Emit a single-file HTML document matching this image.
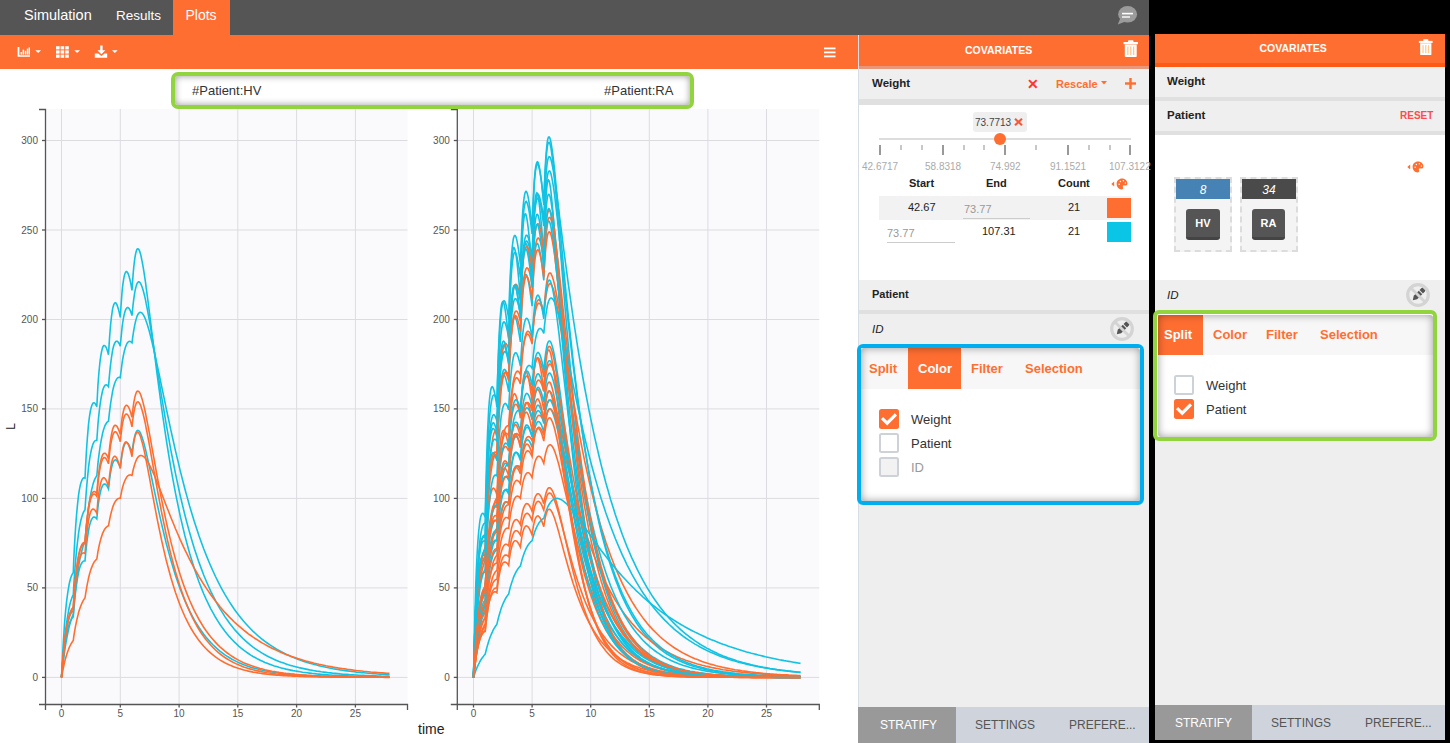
<!DOCTYPE html>
<html><head><meta charset="utf-8">
<style>
*{box-sizing:border-box;margin:0;padding:0}
html,body{width:1450px;height:743px;overflow:hidden;background:#fff;font-family:"Liberation Sans",sans-serif;color:#333}
.abs{position:absolute}
.t{position:absolute;white-space:nowrap;line-height:1}
#topbar{left:0;top:0;width:1149px;height:35px;background:#555}
#frame{left:1149px;top:0;width:301px;height:743px;background:#000}
#toolbar{left:0;top:35px;width:858px;height:34px;background:#ff6e31}
.tab{color:#fff;font-size:14.5px}
</style></head><body>
<svg class="abs" style="left:0;top:0;font-family:&quot;Liberation Sans&quot;,sans-serif" width="858" height="743">
<rect x="46.0" y="109" width="361.5" height="595.5" fill="#fafafd"/>
<line x1="61.5" y1="109" x2="61.5" y2="704" stroke="#dcdce0" stroke-width="1"/>
<line x1="120.3" y1="109" x2="120.3" y2="704" stroke="#dcdce0" stroke-width="1"/>
<line x1="179.1" y1="109" x2="179.1" y2="704" stroke="#dcdce0" stroke-width="1"/>
<line x1="237.8" y1="109" x2="237.8" y2="704" stroke="#dcdce0" stroke-width="1"/>
<line x1="296.6" y1="109" x2="296.6" y2="704" stroke="#dcdce0" stroke-width="1"/>
<line x1="355.4" y1="109" x2="355.4" y2="704" stroke="#dcdce0" stroke-width="1"/>
<line x1="46.0" y1="677.4" x2="407.5" y2="677.4" stroke="#dcdce0" stroke-width="1"/>
<line x1="46.0" y1="587.9" x2="407.5" y2="587.9" stroke="#dcdce0" stroke-width="1"/>
<line x1="46.0" y1="498.4" x2="407.5" y2="498.4" stroke="#dcdce0" stroke-width="1"/>
<line x1="46.0" y1="408.9" x2="407.5" y2="408.9" stroke="#dcdce0" stroke-width="1"/>
<line x1="46.0" y1="319.5" x2="407.5" y2="319.5" stroke="#dcdce0" stroke-width="1"/>
<line x1="46.0" y1="230.0" x2="407.5" y2="230.0" stroke="#dcdce0" stroke-width="1"/>
<line x1="46.0" y1="140.5" x2="407.5" y2="140.5" stroke="#dcdce0" stroke-width="1"/>
<path d="M61.5,677.4l0.6,-12.7 0.6,-11.5 0.6,-10.3 0.6,-9.3 0.5,-8.4 0.6,-7.4 0.6,-6.7 0.6,-5.9 0.6,-5.3 0.6,-4.6 0.6,-4.1 0.6,-3.6 0.5,-3.1 0.6,-2.7 0.6,-2.3 0.6,-2 0.6,-1.6 0.6,-1.4 0.6,-1 0.6,-0.9 0.5,-13.3 0.6,-11.9 0.6,-10.5 0.6,-9.4 0.6,-8.3 0.6,-7.2 0.6,-6.3 0.6,-5.5 0.5,-4.7 0.6,-4.1 0.6,-3.3 0.6,-2.9 0.6,-2.2 0.6,-1.8 0.6,-1.4 0.6,-1 0.5,-0.6 0.6,-0.3 0.6,0 0.6,0.3 0.6,-12.2 0.6,-10.8 0.6,-9.4 0.6,-8.2 0.6,-7.1 0.5,-6 0.6,-5.2 0.6,-4.3 0.6,-3.5 0.6,-2.9 0.6,-2.2 0.6,-1.6 0.6,-1.2 0.5,-0.6 0.6,-0.2 0.6,0.2 0.6,0.5 0.6,0.8 0.6,1.1 0.6,1.4 0.6,-11.1 0.5,-9.7 0.6,-8.3 0.6,-7.2 0.6,-6 0.6,-5.1 0.6,-4.1 0.6,-3.3 0.6,-2.6 0.5,-1.8 0.6,-1.3 0.6,-0.7 0.6,-0.1 0.6,0.3 0.6,0.6 0.6,1.1 0.6,1.4 0.5,1.7 0.6,2 0.6,2.2 0.6,-10.2 0.6,-8.9 0.6,-7.5 0.6,-6.4 0.6,-5.2 0.6,-4.3 0.5,-3.4 0.6,-2.5 0.6,-1.8 0.6,-1.2 0.6,-0.5 0.6,0 0.6,0.5 0.6,1 0.5,1.4 0.6,1.7 0.6,2.1 0.6,2.3 0.6,2.6 0.6,2.9 0.6,-9.7 0.6,-8.3 0.5,-6.9 0.6,-5.8 0.6,-4.6 0.6,-3.8 0.6,-2.8 0.6,-2 0.6,-1.3 0.6,-0.6 0.5,0 0.6,0.6 0.6,1 0.6,1.4 0.6,1.9 0.6,2.2 0.6,2.5 0.6,2.8 0.5,3.1 0.6,3.3 0.6,-9.2 0.6,-7.8 0.6,-6.6 0.6,-5.3 0.6,-4.3 0.6,-3.3 0.6,-2.4 0.5,-1.6 0.6,-0.9 0.6,-0.2 0.6,0.3 0.6,0.9 0.6,1.4 0.6,1.8 0.6,2.2 0.5,2.6 0.6,2.9 0.6,3.1 0.6,3.4 0.6,3.6 0.6,3.8 0.6,4 0.6,4.1 0.5,4.3 0.6,4.3 0.6,4.5 0.6,4.5 0.6,4.6 0.6,4.7 0.6,4.7 2.3,19 2.4,18.9 2.3,18.7 2.4,18 2.3,17.4 2.4,16.5 2.3,15.7 2.4,14.9 2.3,14 2.4,13.2 2.3,12.4 2.4,11.7 2.3,10.9 2.4,10.3 2.3,9.6 2.4,9 2.3,8.5 2.4,7.9 2.3,7.4 2.4,7 2.3,6.5 2.4,6.1 2.3,5.7 2.4,5.3 2.4,5 2.3,4.7 2.4,4.4 2.3,4.1 2.4,3.8 2.3,3.6 2.4,3.4 2.3,3.1 2.4,3 2.3,2.7 2.4,2.6 2.3,2.4 2.4,2.3 2.3,2.1 2.4,2 2.3,1.9 2.4,1.7 2.3,1.6 2.4,1.6 2.3,1.4 2.4,1.3 2.3,1.3 2.4,1.1 2.3,1.1 2.4,1.1 2.3,0.9 2.4,0.9 2.3,0.9 2.4,0.8 2.3,0.7 2.4,0.7 2.3,0.6 2.4,0.6 2.3,0.6 2.4,0.5 2.3,0.5 2.4,0.5 2.3,0.4 2.4,0.4 2.3,0.4 2.4,0.4 2.3,0.3 2.4,0.3 2.4,0.3 2.3,0.3 2.4,0.2 2.3,0.3 2.4,0.2 2.3,0.2 2.4,0.2 2.3,0.2 2.4,0.2 2.3,0.1 2.4,0.2 2.3,0.1 2.4,0.2 2.3,0.1 2.4,0.1 2.3,0.1 2.4,0.1 2.3,0.1 2.4,0.1 2.3,0.1 2.4,0.1 2.3,0 2.4,0.1 2.3,0.1 2.4,0 2.3,0.1 2.4,0 2.3,0.1 2.4,0 2.3,0.1 2.4,0 2.3,0 2.4,0.1 2.3,0 2.4,0" stroke="#12c2e3" stroke-width="1.6" fill="none"/>
<path d="M61.5,677.4l0.6,-8.5 0.6,-7.8 0.6,-7.2 0.6,-6.6 0.5,-6.1 0.6,-5.6 0.6,-5.1 0.6,-4.7 0.6,-4.3 0.6,-3.9 0.6,-3.5 0.6,-3.2 0.5,-3 0.6,-2.6 0.6,-2.4 0.6,-2.1 0.6,-1.9 0.6,-1.6 0.6,-1.5 0.6,-1.3 0.5,-9.6 0.6,-8.7 0.6,-8 0.6,-7.3 0.6,-6.6 0.6,-6 0.6,-5.5 0.6,-4.8 0.5,-4.4 0.6,-4 0.6,-3.5 0.6,-3 0.6,-2.8 0.6,-2.3 0.6,-2.1 0.6,-1.7 0.5,-1.4 0.6,-1.2 0.6,-1 0.6,-0.7 0.6,-9 0.6,-8.1 0.6,-7.4 0.6,-6.6 0.6,-5.9 0.5,-5.3 0.6,-4.7 0.6,-4.1 0.6,-3.7 0.6,-3.1 0.6,-2.7 0.6,-2.3 0.6,-1.9 0.5,-1.5 0.6,-1.3 0.6,-0.9 0.6,-0.6 0.6,-0.4 0.6,-0.1 0.6,0.1 0.6,-8.1 0.5,-7.4 0.6,-6.5 0.6,-5.8 0.6,-5.1 0.6,-4.4 0.6,-3.9 0.6,-3.3 0.6,-2.9 0.5,-2.3 0.6,-1.9 0.6,-1.5 0.6,-1.1 0.6,-0.8 0.6,-0.5 0.6,-0.1 0.6,0.1 0.5,0.4 0.6,0.6 0.6,0.8 0.6,-7.4 0.6,-6.6 0.6,-5.8 0.6,-5.1 0.6,-4.4 0.6,-3.8 0.5,-3.2 0.6,-2.6 0.6,-2.2 0.6,-1.7 0.6,-1.2 0.6,-0.9 0.6,-0.5 0.6,-0.1 0.5,0.1 0.6,0.5 0.6,0.7 0.6,1 0.6,1.2 0.6,1.4 0.6,-6.8 0.6,-6 0.5,-5.3 0.6,-4.5 0.6,-3.9 0.6,-3.2 0.6,-2.7 0.6,-2.2 0.6,-1.6 0.6,-1.2 0.5,-0.7 0.6,-0.4 0.6,0 0.6,0.3 0.6,0.7 0.6,0.9 0.6,1.2 0.6,1.4 0.5,1.7 0.6,1.8 0.6,-6.4 0.6,-5.6 0.6,-4.8 0.6,-4.1 0.6,-3.5 0.6,-2.8 0.6,-2.3 0.5,-1.7 0.6,-1.3 0.6,-0.8 0.6,-0.4 0.6,0 0.6,0.4 0.6,0.7 0.6,1 0.5,1.3 0.6,1.5 0.6,1.8 0.6,2 0.6,2.1 0.6,2.4 0.6,2.5 0.6,2.7 0.5,2.9 0.6,2.9 0.6,3.1 0.6,3.1 0.6,3.3 0.6,3.3 0.6,3.4 2.3,14.1 2.4,14.7 2.3,14.9 2.4,14.8 2.3,14.7 2.4,14.2 2.3,13.9 2.4,13.3 2.3,12.9 2.4,12.2 2.3,11.7 2.4,11.2 2.3,10.6 2.4,10 2.3,9.5 2.4,9.1 2.3,8.5 2.4,8.1 2.3,7.7 2.4,7.2 2.3,6.8 2.4,6.5 2.3,6.1 2.4,5.7 2.4,5.5 2.3,5.1 2.4,4.8 2.3,4.6 2.4,4.3 2.3,4.1 2.4,3.8 2.3,3.7 2.4,3.4 2.3,3.2 2.4,3.1 2.3,2.9 2.4,2.7 2.3,2.5 2.4,2.5 2.3,2.3 2.4,2.1 2.3,2 2.4,2 2.3,1.8 2.4,1.7 2.3,1.6 2.4,1.5 2.3,1.5 2.4,1.3 2.3,1.3 2.4,1.2 2.3,1.1 2.4,1.1 2.3,1 2.4,1 2.3,0.9 2.4,0.8 2.3,0.8 2.4,0.8 2.3,0.7 2.4,0.7 2.3,0.6 2.4,0.6 2.3,0.6 2.4,0.5 2.3,0.5 2.4,0.5 2.4,0.5 2.3,0.4 2.4,0.4 2.3,0.4 2.4,0.3 2.3,0.4 2.4,0.3 2.3,0.3 2.4,0.3 2.3,0.2 2.4,0.3 2.3,0.2 2.4,0.2 2.3,0.3 2.4,0.2 2.3,0.1 2.4,0.2 2.3,0.2 2.4,0.1 2.3,0.2 2.4,0.1 2.3,0.2 2.4,0.1 2.3,0.1 2.4,0.1 2.3,0.1 2.4,0.1 2.3,0.1 2.4,0.1 2.3,0.1 2.4,0.1 2.3,0.1 2.4,0 2.3,0.1 2.4,0.1" stroke="#12c2e3" stroke-width="1.6" fill="none"/>
<path d="M61.5,677.4l0.6,-5.6 0.6,-5.2 0.6,-4.9 0.6,-4.6 0.5,-4.4 0.6,-4 0.6,-3.8 0.6,-3.5 0.6,-3.3 0.6,-3.1 0.6,-2.9 0.6,-2.7 0.5,-2.4 0.6,-2.3 0.6,-2.2 0.6,-1.9 0.6,-1.8 0.6,-1.7 0.6,-1.6 0.6,-1.4 0.5,-6.8 0.6,-6.4 0.6,-6 0.6,-5.6 0.6,-5.1 0.6,-4.9 0.6,-4.4 0.6,-4.1 0.5,-3.9 0.6,-3.5 0.6,-3.2 0.6,-3 0.6,-2.7 0.6,-2.5 0.6,-2.3 0.6,-2 0.5,-1.9 0.6,-1.6 0.6,-1.5 0.6,-1.3 0.6,-6.8 0.6,-6.2 0.6,-5.8 0.6,-5.3 0.6,-4.9 0.5,-4.6 0.6,-4.1 0.6,-3.8 0.6,-3.5 0.6,-3.1 0.6,-2.9 0.6,-2.5 0.6,-2.3 0.5,-2.1 0.6,-1.8 0.6,-1.6 0.6,-1.3 0.6,-1.2 0.6,-1 0.6,-0.8 0.6,-6.2 0.5,-5.7 0.6,-5.2 0.6,-4.8 0.6,-4.4 0.6,-4 0.6,-3.6 0.6,-3.2 0.6,-2.9 0.5,-2.6 0.6,-2.3 0.6,-2 0.6,-1.7 0.6,-1.5 0.6,-1.2 0.6,-1 0.6,-0.9 0.5,-0.6 0.6,-0.4 0.6,-0.2 0.6,-5.7 0.6,-5.1 0.6,-4.7 0.6,-4.2 0.6,-3.9 0.6,-3.4 0.5,-3 0.6,-2.7 0.6,-2.4 0.6,-2 0.6,-1.8 0.6,-1.5 0.6,-1.2 0.6,-0.9 0.5,-0.7 0.6,-0.5 0.6,-0.3 0.6,-0.1 0.6,0.1 0.6,0.2 0.6,-5.1 0.6,-4.7 0.5,-4.2 0.6,-3.8 0.6,-3.3 0.6,-2.9 0.6,-2.6 0.6,-2.3 0.6,-1.9 0.6,-1.6 0.5,-1.2 0.6,-1.1 0.6,-0.7 0.6,-0.5 0.6,-0.3 0.6,-0.1 0.6,0.1 0.6,0.4 0.5,0.5 0.6,0.6 0.6,-4.7 0.6,-4.3 0.6,-3.8 0.6,-3.3 0.6,-3 0.6,-2.5 0.6,-2.2 0.5,-1.9 0.6,-1.5 0.6,-1.2 0.6,-1 0.6,-0.6 0.6,-0.4 0.6,-0.2 0.6,0.1 0.5,0.2 0.6,0.5 0.6,0.7 0.6,0.8 0.6,1 0.6,1.2 0.6,1.3 0.6,1.4 0.5,1.6 0.6,1.7 0.6,1.8 0.6,1.9 0.6,2 0.6,2 0.6,2.2 2.3,9.3 2.4,10.2 2.3,10.7 2.4,11.1 2.3,11.3 2.4,11.3 2.3,11.3 2.4,11.1 2.3,10.9 2.4,10.6 2.3,10.4 2.4,10 2.3,9.7 2.4,9.4 2.3,9 2.4,8.6 2.3,8.4 2.4,7.9 2.3,7.6 2.4,7.3 2.3,7 2.4,6.7 2.3,6.3 2.4,6.1 2.4,5.8 2.3,5.5 2.4,5.3 2.3,5 2.4,4.8 2.3,4.6 2.4,4.4 2.3,4.1 2.4,4 2.3,3.7 2.4,3.6 2.3,3.5 2.4,3.2 2.3,3.1 2.4,3 2.3,2.8 2.4,2.7 2.3,2.5 2.4,2.5 2.3,2.3 2.4,2.2 2.3,2.1 2.4,2 2.3,1.9 2.4,1.8 2.3,1.7 2.4,1.7 2.3,1.5 2.4,1.5 2.3,1.4 2.4,1.4 2.3,1.3 2.4,1.2 2.3,1.2 2.4,1.1 2.3,1 2.4,1 2.3,1 2.4,0.9 2.3,0.9 2.4,0.8 2.3,0.8 2.4,0.8 2.4,0.7 2.3,0.6 2.4,0.7 2.3,0.6 2.4,0.6 2.3,0.6 2.4,0.5 2.3,0.5 2.4,0.5 2.3,0.4 2.4,0.5 2.3,0.4 2.4,0.4 2.3,0.4 2.4,0.3 2.3,0.4 2.4,0.3 2.3,0.3 2.4,0.3 2.3,0.3 2.4,0.3 2.3,0.2 2.4,0.3 2.3,0.2 2.4,0.2 2.3,0.2 2.4,0.2 2.3,0.2 2.4,0.2 2.3,0.2 2.4,0.1 2.3,0.2 2.4,0.1 2.3,0.2 2.4,0.1" stroke="#12c2e3" stroke-width="1.6" fill="none"/>
<path d="M61.5,677.4l0.6,-7 0.6,-6.3 0.6,-5.7 0.6,-5.2 0.5,-4.8 0.6,-4.2 0.6,-3.9 0.6,-3.4 0.6,-3.1 0.6,-2.8 0.6,-2.4 0.6,-2.2 0.5,-1.9 0.6,-1.7 0.6,-1.5 0.6,-1.2 0.6,-1.1 0.6,-0.9 0.6,-0.7 0.6,-0.6 0.5,-7.5 0.6,-6.6 0.6,-6 0.6,-5.4 0.6,-4.8 0.6,-4.2 0.6,-3.7 0.6,-3.3 0.5,-2.8 0.6,-2.5 0.6,-2.1 0.6,-1.8 0.6,-1.4 0.6,-1.2 0.6,-1 0.6,-0.7 0.5,-0.5 0.6,-0.3 0.6,-0.1 0.6,0 0.6,-6.8 0.6,-6 0.6,-5.3 0.6,-4.7 0.6,-4 0.5,-3.6 0.6,-3 0.6,-2.6 0.6,-2.1 0.6,-1.7 0.6,-1.4 0.6,-1.1 0.6,-0.8 0.5,-0.5 0.6,-0.2 0.6,0 0.6,0.2 0.6,0.4 0.6,0.5 0.6,0.7 0.6,-6.1 0.5,-5.3 0.6,-4.7 0.6,-4 0.6,-3.4 0.6,-2.9 0.6,-2.4 0.6,-2 0.6,-1.5 0.5,-1.1 0.6,-0.8 0.6,-0.5 0.6,-0.2 0.6,0.1 0.6,0.3 0.6,0.6 0.6,0.7 0.5,0.9 0.6,1.1 0.6,1.3 0.6,-5.6 0.6,-4.9 0.6,-4.1 0.6,-3.5 0.6,-3 0.6,-2.4 0.5,-1.9 0.6,-1.5 0.6,-1.1 0.6,-0.7 0.6,-0.3 0.6,-0.1 0.6,0.3 0.6,0.5 0.5,0.7 0.6,1 0.6,1.1 0.6,1.3 0.6,1.5 0.6,1.6 0.6,-5.2 0.6,-4.5 0.5,-3.8 0.6,-3.1 0.6,-2.6 0.6,-2.1 0.6,-1.6 0.6,-1.2 0.6,-0.7 0.6,-0.4 0.5,0 0.6,0.2 0.6,0.6 0.6,0.8 0.6,1 0.6,1.2 0.6,1.5 0.6,1.6 0.5,1.7 0.6,1.9 0.6,-5 0.6,-4.2 0.6,-3.5 0.6,-2.9 0.6,-2.4 0.6,-1.8 0.6,-1.4 0.5,-0.9 0.6,-0.5 0.6,-0.2 0.6,0.2 0.6,0.5 0.6,0.7 0.6,1 0.6,1.3 0.5,1.4 0.6,1.6 0.6,1.8 0.6,1.9 0.6,2.1 0.6,2.2 0.6,2.3 0.6,2.4 0.5,2.4 0.6,2.6 0.6,2.6 0.6,2.6 0.6,2.7 0.6,2.7 0.6,2.8 2.3,11.3 2.4,11.3 2.3,11.1 2.4,10.9 2.3,10.4 2.4,10 2.3,9.5 2.4,8.9 2.3,8.5 2.4,7.9 2.3,7.4 2.4,7 2.3,6.5 2.4,6.1 2.3,5.7 2.4,5.3 2.3,4.9 2.4,4.6 2.3,4.3 2.4,4 2.3,3.7 2.4,3.5 2.3,3.2 2.4,3 2.4,2.8 2.3,2.6 2.4,2.4 2.3,2.2 2.4,2.1 2.3,2 2.4,1.8 2.3,1.7 2.4,1.6 2.3,1.4 2.4,1.4 2.3,1.2 2.4,1.2 2.3,1.1 2.4,1 2.3,1 2.4,0.9 2.3,0.8 2.4,0.8 2.3,0.7 2.4,0.6 2.3,0.6 2.4,0.6 2.3,0.6 2.4,0.4 2.3,0.5 2.4,0.4 2.3,0.4 2.4,0.4 2.3,0.4 2.4,0.3 2.3,0.3 2.4,0.3 2.3,0.2 2.4,0.3 2.3,0.2 2.4,0.2 2.3,0.2 2.4,0.2 2.3,0.1 2.4,0.2 2.3,0.1 2.4,0.2 2.4,0.1 2.3,0.1 2.4,0.1 2.3,0.1 2.4,0.1 2.3,0.1 2.4,0.1 2.3,0.1 2.4,0 2.3,0.1 2.4,0.1 2.3,0 2.4,0.1 2.3,0 2.4,0.1 2.3,0 2.4,0.1 2.3,0 2.4,0 2.3,0.1 2.4,0 2.3,0 2.4,0.1 2.3,0 2.4,0 2.3,0 2.4,0 2.3,0.1 2.4,0 2.3,0 2.4,0 2.3,0 2.4,0 2.3,0 2.4,0.1" stroke="#12c2e3" stroke-width="1.6" fill="none"/>
<path d="M61.5,677.4l0.6,-8.1 0.6,-7.3 0.6,-6.7 0.6,-6 0.5,-5.5 0.6,-4.9 0.6,-4.5 0.6,-4 0.6,-3.6 0.6,-3.2 0.6,-2.8 0.6,-2.5 0.5,-2.3 0.6,-1.9 0.6,-1.7 0.6,-1.5 0.6,-1.2 0.6,-1.1 0.6,-0.8 0.6,-0.7 0.5,-8.6 0.6,-7.8 0.6,-6.9 0.6,-6.2 0.6,-5.5 0.6,-4.9 0.6,-4.4 0.6,-3.8 0.5,-3.3 0.6,-2.8 0.6,-2.4 0.6,-2.1 0.6,-1.7 0.6,-1.4 0.6,-1.1 0.6,-0.8 0.5,-0.6 0.6,-0.4 0.6,-0.1 0.6,0 0.6,-7.8 0.6,-7 0.6,-6.2 0.6,-5.4 0.6,-4.7 0.5,-4.1 0.6,-3.5 0.6,-3 0.6,-2.4 0.6,-2.1 0.6,-1.6 0.6,-1.2 0.6,-0.9 0.5,-0.6 0.6,-0.3 0.6,0 0.6,0.3 0.6,0.4 0.6,0.6 0.6,0.9 0.6,-7.1 0.5,-6.2 0.6,-5.4 0.6,-4.7 0.6,-3.9 0.6,-3.4 0.6,-2.8 0.6,-2.2 0.6,-1.8 0.5,-1.3 0.6,-0.9 0.6,-0.6 0.6,-0.2 0.6,0.1 0.6,0.4 0.6,0.6 0.6,0.9 0.5,1 0.6,1.3 0.6,1.4 0.6,-6.5 0.6,-5.6 0.6,-4.8 0.6,-4.1 0.6,-3.4 0.6,-2.8 0.5,-2.2 0.6,-1.7 0.6,-1.3 0.6,-0.8 0.6,-0.4 0.6,0 0.6,0.3 0.6,0.5 0.5,0.9 0.6,1.1 0.6,1.3 0.6,1.5 0.6,1.7 0.6,1.9 0.6,-6 0.6,-5.2 0.5,-4.4 0.6,-3.7 0.6,-3 0.6,-2.4 0.6,-1.9 0.6,-1.3 0.6,-0.8 0.6,-0.5 0.5,0 0.6,0.3 0.6,0.6 0.6,0.9 0.6,1.2 0.6,1.4 0.6,1.7 0.6,1.8 0.5,2.1 0.6,2.1 0.6,-5.7 0.6,-4.9 0.6,-4.1 0.6,-3.4 0.6,-2.7 0.6,-2.1 0.6,-1.6 0.5,-1.1 0.6,-0.6 0.6,-0.2 0.6,0.3 0.6,0.5 0.6,0.9 0.6,1.1 0.6,1.5 0.5,1.6 0.6,1.9 0.6,2.1 0.6,2.2 0.6,2.4 0.6,2.6 0.6,2.6 0.6,2.8 0.5,2.8 0.6,3 0.6,3 0.6,3.1 0.6,3.1 0.6,3.2 0.6,3.2 2.3,13 2.4,13.1 2.3,13 2.4,12.5 2.3,12.1 2.4,11.6 2.3,11 2.4,10.4 2.3,9.8 2.4,9.2 2.3,8.6 2.4,8.1 2.3,7.5 2.4,7.1 2.3,6.5 2.4,6.2 2.3,5.7 2.4,5.3 2.3,5 2.4,4.6 2.3,4.3 2.4,4 2.3,3.8 2.4,3.5 2.4,3.2 2.3,3 2.4,2.8 2.3,2.6 2.4,2.5 2.3,2.2 2.4,2.1 2.3,2 2.4,1.8 2.3,1.7 2.4,1.6 2.3,1.4 2.4,1.4 2.3,1.3 2.4,1.2 2.3,1.1 2.4,1 2.3,0.9 2.4,0.9 2.3,0.8 2.4,0.8 2.3,0.7 2.4,0.7 2.3,0.6 2.4,0.6 2.3,0.5 2.4,0.5 2.3,0.5 2.4,0.4 2.3,0.4 2.4,0.4 2.3,0.3 2.4,0.4 2.3,0.3 2.4,0.2 2.3,0.3 2.4,0.2 2.3,0.3 2.4,0.2 2.3,0.2 2.4,0.2 2.3,0.1 2.4,0.2 2.4,0.1 2.3,0.2 2.4,0.1 2.3,0.1 2.4,0.1 2.3,0.1 2.4,0.1 2.3,0.1 2.4,0.1 2.3,0.1 2.4,0 2.3,0.1 2.4,0.1 2.3,0 2.4,0.1 2.3,0 2.4,0.1 2.3,0 2.4,0.1 2.3,0 2.4,0 2.3,0.1 2.4,0 2.3,0 2.4,0.1 2.3,0 2.4,0 2.3,0 2.4,0 2.3,0.1 2.4,0 2.3,0 2.4,0 2.3,0 2.4,0" stroke="#ff6e31" stroke-width="1.6" fill="none"/>
<path d="M61.5,677.4l0.6,-7.9 0.6,-7.2 0.6,-6.5 0.6,-6 0.5,-5.4 0.6,-4.9 0.6,-4.4 0.6,-4 0.6,-3.6 0.6,-3.2 0.6,-2.8 0.6,-2.6 0.5,-2.2 0.6,-2 0.6,-1.7 0.6,-1.5 0.6,-1.2 0.6,-1.1 0.6,-0.9 0.6,-0.7 0.5,-8.4 0.6,-7.6 0.6,-6.9 0.6,-6.1 0.6,-5.4 0.6,-4.9 0.6,-4.3 0.6,-3.8 0.5,-3.2 0.6,-2.9 0.6,-2.4 0.6,-2.1 0.6,-1.7 0.6,-1.4 0.6,-1.1 0.6,-0.8 0.5,-0.6 0.6,-0.3 0.6,-0.1 0.6,0 0.6,-7.6 0.6,-6.8 0.6,-6 0.6,-5.3 0.6,-4.7 0.5,-4 0.6,-3.4 0.6,-2.9 0.6,-2.4 0.6,-2 0.6,-1.6 0.6,-1.2 0.6,-0.8 0.5,-0.5 0.6,-0.3 0.6,0 0.6,0.3 0.6,0.5 0.6,0.7 0.6,0.9 0.6,-6.9 0.5,-5.9 0.6,-5.3 0.6,-4.5 0.6,-3.8 0.6,-3.2 0.6,-2.7 0.6,-2.2 0.6,-1.6 0.5,-1.3 0.6,-0.8 0.6,-0.5 0.6,-0.2 0.6,0.2 0.6,0.4 0.6,0.7 0.6,1 0.5,1.1 0.6,1.3 0.6,1.5 0.6,-6.2 0.6,-5.4 0.6,-4.6 0.6,-3.9 0.6,-3.3 0.6,-2.6 0.5,-2.1 0.6,-1.6 0.6,-1.2 0.6,-0.7 0.6,-0.3 0.6,0 0.6,0.3 0.6,0.7 0.5,0.9 0.6,1.2 0.6,1.4 0.6,1.6 0.6,1.8 0.6,1.9 0.6,-5.8 0.6,-4.9 0.5,-4.3 0.6,-3.5 0.6,-2.8 0.6,-2.3 0.6,-1.7 0.6,-1.3 0.6,-0.7 0.6,-0.4 0.5,0 0.6,0.4 0.6,0.7 0.6,1 0.6,1.3 0.6,1.4 0.6,1.8 0.6,1.9 0.5,2 0.6,2.3 0.6,-5.5 0.6,-4.7 0.6,-3.9 0.6,-3.2 0.6,-2.6 0.6,-2 0.6,-1.5 0.5,-1 0.6,-0.5 0.6,-0.1 0.6,0.3 0.6,0.6 0.6,0.9 0.6,1.2 0.6,1.5 0.5,1.7 0.6,1.9 0.6,2.1 0.6,2.3 0.6,2.5 0.6,2.6 0.6,2.7 0.6,2.8 0.5,2.9 0.6,3 0.6,3.1 0.6,3.1 0.6,3.2 0.6,3.2 0.6,3.3 2.3,13.2 2.4,13.4 2.3,13.1 2.4,12.7 2.3,12.3 2.4,11.6 2.3,11.1 2.4,10.4 2.3,9.7 2.4,9.1 2.3,8.5 2.4,7.9 2.3,7.4 2.4,6.8 2.3,6.3 2.4,5.9 2.3,5.4 2.4,5.1 2.3,4.6 2.4,4.3 2.3,4 2.4,3.7 2.3,3.3 2.4,3.2 2.4,2.9 2.3,2.6 2.4,2.5 2.3,2.3 2.4,2.1 2.3,1.9 2.4,1.8 2.3,1.7 2.4,1.5 2.3,1.4 2.4,1.3 2.3,1.2 2.4,1.2 2.3,1 2.4,0.9 2.3,0.9 2.4,0.8 2.3,0.8 2.4,0.6 2.3,0.7 2.4,0.6 2.3,0.5 2.4,0.5 2.3,0.5 2.4,0.4 2.3,0.4 2.4,0.3 2.3,0.4 2.4,0.3 2.3,0.3 2.4,0.2 2.3,0.3 2.4,0.2 2.3,0.2 2.4,0.2 2.3,0.2 2.4,0.1 2.3,0.2 2.4,0.1 2.3,0.2 2.4,0.1 2.3,0.1 2.4,0.1 2.4,0.1 2.3,0.1 2.4,0 2.3,0.1 2.4,0.1 2.3,0.1 2.4,0 2.3,0.1 2.4,0 2.3,0.1 2.4,0 2.3,0 2.4,0.1 2.3,0 2.4,0 2.3,0.1 2.4,0 2.3,0 2.4,0 2.3,0.1 2.4,0 2.3,0 2.4,0 2.3,0 2.4,0 2.3,0 2.4,0.1 2.3,0 2.4,0 2.3,0 2.4,0 2.3,0 2.4,0 2.3,0 2.4,0" stroke="#ff6e31" stroke-width="1.6" fill="none"/>
<path d="M61.5,677.4l0.6,-8.2 0.6,-7.4 0.6,-6.7 0.6,-6 0.5,-5.3 0.6,-4.8 0.6,-4.3 0.6,-3.8 0.6,-3.4 0.6,-2.9 0.6,-2.6 0.6,-2.3 0.5,-1.9 0.6,-1.7 0.6,-1.4 0.6,-1.2 0.6,-0.9 0.6,-0.8 0.6,-0.6 0.6,-0.4 0.5,-8.5 0.6,-7.5 0.6,-6.7 0.6,-5.9 0.6,-5.2 0.6,-4.5 0.6,-3.9 0.6,-3.4 0.5,-2.9 0.6,-2.4 0.6,-2 0.6,-1.6 0.6,-1.2 0.6,-1 0.6,-0.6 0.6,-0.4 0.5,-0.2 0.6,0.1 0.6,0.2 0.6,0.4 0.6,-7.6 0.6,-6.7 0.6,-5.8 0.6,-5 0.6,-4.3 0.5,-3.7 0.6,-3 0.6,-2.5 0.6,-2 0.6,-1.6 0.6,-1.1 0.6,-0.8 0.6,-0.4 0.5,-0.1 0.6,0.2 0.6,0.4 0.6,0.7 0.6,0.8 0.6,1.1 0.6,1.2 0.6,-6.9 0.5,-5.9 0.6,-5.1 0.6,-4.3 0.6,-3.6 0.6,-2.9 0.6,-2.4 0.6,-1.8 0.6,-1.3 0.5,-0.9 0.6,-0.4 0.6,-0.2 0.6,0.3 0.6,0.5 0.6,0.8 0.6,1 0.6,1.2 0.5,1.5 0.6,1.6 0.6,1.7 0.6,-6.3 0.6,-5.4 0.6,-4.5 0.6,-3.8 0.6,-3.1 0.6,-2.4 0.5,-1.9 0.6,-1.3 0.6,-0.8 0.6,-0.5 0.6,0 0.6,0.4 0.6,0.6 0.6,0.9 0.5,1.2 0.6,1.5 0.6,1.6 0.6,1.8 0.6,2 0.6,2.2 0.6,-6 0.6,-5 0.5,-4.2 0.6,-3.4 0.6,-2.7 0.6,-2.2 0.6,-1.5 0.6,-1 0.6,-0.5 0.6,-0.1 0.5,0.2 0.6,0.7 0.6,0.9 0.6,1.2 0.6,1.5 0.6,1.7 0.6,1.9 0.6,2.1 0.5,2.2 0.6,2.4 0.6,-5.7 0.6,-4.8 0.6,-3.9 0.6,-3.2 0.6,-2.5 0.6,-1.9 0.6,-1.3 0.5,-0.8 0.6,-0.4 0.6,0.1 0.6,0.5 0.6,0.8 0.6,1.1 0.6,1.4 0.6,1.7 0.5,1.9 0.6,2.1 0.6,2.2 0.6,2.4 0.6,2.6 0.6,2.7 0.6,2.7 0.6,2.9 0.5,2.9 0.6,3 0.6,3.1 0.6,3.1 0.6,3.1 0.6,3.2 0.6,3.2 2.3,12.8 2.4,12.6 2.3,12.3 2.4,11.7 2.3,11.1 2.4,10.5 2.3,9.8 2.4,9.1 2.3,8.5 2.4,7.9 2.3,7.3 2.4,6.7 2.3,6.3 2.4,5.7 2.3,5.3 2.4,4.9 2.3,4.5 2.4,4.1 2.3,3.8 2.4,3.5 2.3,3.3 2.4,2.9 2.3,2.7 2.4,2.6 2.4,2.3 2.3,2.1 2.4,1.9 2.3,1.8 2.4,1.7 2.3,1.5 2.4,1.4 2.3,1.3 2.4,1.1 2.3,1.1 2.4,1 2.3,0.9 2.4,0.9 2.3,0.8 2.4,0.7 2.3,0.6 2.4,0.6 2.3,0.6 2.4,0.5 2.3,0.5 2.4,0.4 2.3,0.4 2.4,0.3 2.3,0.4 2.4,0.3 2.3,0.3 2.4,0.2 2.3,0.3 2.4,0.2 2.3,0.2 2.4,0.2 2.3,0.2 2.4,0.1 2.3,0.2 2.4,0.1 2.3,0.1 2.4,0.1 2.3,0.1 2.4,0.1 2.3,0.1 2.4,0.1 2.3,0.1 2.4,0 2.4,0.1 2.3,0 2.4,0.1 2.3,0 2.4,0.1 2.3,0 2.4,0.1 2.3,0 2.4,0 2.3,0.1 2.4,0 2.3,0 2.4,0 2.3,0.1 2.4,0 2.3,0 2.4,0 2.3,0 2.4,0 2.3,0.1 2.4,0 2.3,0 2.4,0 2.3,0 2.4,0 2.3,0 2.4,0 2.3,0 2.4,0 2.3,0 2.4,0 2.3,0 2.4,0.1 2.3,0 2.4,0" stroke="#ff6e31" stroke-width="1.6" fill="none"/>
<path d="M61.5,677.4l0.6,-3.3 0.6,-3.1 0.6,-2.9 0.6,-2.7 0.5,-2.6 0.6,-2.3 0.6,-2.2 0.6,-2.1 0.6,-1.9 0.6,-1.8 0.6,-1.7 0.6,-1.5 0.5,-1.4 0.6,-1.4 0.6,-1.2 0.6,-1.1 0.6,-1.1 0.6,-0.9 0.6,-0.9 0.6,-0.8 0.5,-4.1 0.6,-3.7 0.6,-3.5 0.6,-3.3 0.6,-3 0.6,-2.8 0.6,-2.6 0.6,-2.4 0.5,-2.3 0.6,-2 0.6,-1.9 0.6,-1.7 0.6,-1.6 0.6,-1.4 0.6,-1.4 0.6,-1.2 0.5,-1 0.6,-1 0.6,-0.9 0.6,-0.7 0.6,-4 0.6,-3.7 0.6,-3.4 0.6,-3.2 0.6,-2.9 0.5,-2.6 0.6,-2.5 0.6,-2.2 0.6,-2.1 0.6,-1.8 0.6,-1.7 0.6,-1.5 0.6,-1.4 0.5,-1.2 0.6,-1.1 0.6,-1 0.6,-0.8 0.6,-0.7 0.6,-0.6 0.6,-0.5 0.6,-3.7 0.5,-3.5 0.6,-3.1 0.6,-2.9 0.6,-2.6 0.6,-2.4 0.6,-2.2 0.6,-1.9 0.6,-1.8 0.5,-1.6 0.6,-1.3 0.6,-1.3 0.6,-1.1 0.6,-0.9 0.6,-0.8 0.6,-0.6 0.6,-0.6 0.5,-0.4 0.6,-0.3 0.6,-0.2 0.6,-3.5 0.6,-3.1 0.6,-2.9 0.6,-2.5 0.6,-2.4 0.6,-2.1 0.5,-1.9 0.6,-1.6 0.6,-1.5 0.6,-1.3 0.6,-1.1 0.6,-1 0.6,-0.8 0.6,-0.6 0.5,-0.5 0.6,-0.4 0.6,-0.3 0.6,-0.2 0.6,0 0.6,0 0.6,-3.1 0.6,-2.9 0.5,-2.6 0.6,-2.4 0.6,-2 0.6,-1.9 0.6,-1.6 0.6,-1.4 0.6,-1.3 0.6,-1 0.5,-0.9 0.6,-0.7 0.6,-0.6 0.6,-0.4 0.6,-0.3 0.6,-0.1 0.6,-0.1 0.6,0.1 0.5,0.2 0.6,0.2 0.6,-2.9 0.6,-2.7 0.6,-2.3 0.6,-2.2 0.6,-1.8 0.6,-1.7 0.6,-1.4 0.5,-1.2 0.6,-1 0.6,-0.9 0.6,-0.6 0.6,-0.5 0.6,-0.4 0.6,-0.2 0.6,-0.1 0.5,0 0.6,0.2 0.6,0.2 0.6,0.4 0.6,0.4 0.6,0.6 0.6,0.6 0.6,0.7 0.5,0.8 0.6,0.8 0.6,0.9 0.6,1 0.6,1 0.6,1.1 0.6,1.1 2.3,4.9 2.4,5.3 2.3,5.7 2.4,5.9 2.3,6 2.4,6.1 2.3,6.1 2.4,6 2.3,5.9 2.4,5.8 2.3,5.7 2.4,5.5 2.3,5.4 2.4,5.2 2.3,5 2.4,4.9 2.3,4.7 2.4,4.5 2.3,4.4 2.4,4.2 2.3,4.1 2.4,3.9 2.3,3.8 2.4,3.6 2.4,3.5 2.3,3.4 2.4,3.2 2.3,3.1 2.4,3 2.3,2.9 2.4,2.7 2.3,2.7 2.4,2.5 2.3,2.5 2.4,2.3 2.3,2.3 2.4,2.2 2.3,2 2.4,2 2.3,2 2.4,1.8 2.3,1.8 2.4,1.7 2.3,1.7 2.4,1.5 2.3,1.5 2.4,1.5 2.3,1.4 2.4,1.3 2.3,1.3 2.4,1.3 2.3,1.2 2.4,1.1 2.3,1.1 2.4,1.1 2.3,1 2.4,1 2.3,0.9 2.4,0.9 2.3,0.9 2.4,0.8 2.3,0.8 2.4,0.8 2.3,0.7 2.4,0.7 2.3,0.7 2.4,0.7 2.4,0.6 2.3,0.6 2.4,0.6 2.3,0.5 2.4,0.6 2.3,0.5 2.4,0.5 2.3,0.5 2.4,0.4 2.3,0.4 2.4,0.5 2.3,0.4 2.4,0.4 2.3,0.3 2.4,0.4 2.3,0.3 2.4,0.4 2.3,0.3 2.4,0.3 2.3,0.3 2.4,0.3 2.3,0.2 2.4,0.3 2.3,0.3 2.4,0.2 2.3,0.2 2.4,0.3 2.3,0.2 2.4,0.2 2.3,0.2 2.4,0.2 2.3,0.1 2.4,0.2 2.3,0.2 2.4,0.1" stroke="#ff6e31" stroke-width="1.6" fill="none"/>
<path d="M39.0,109.5 H45.5 V704.5 H39.0" stroke="#555" stroke-width="1.3" fill="none"/>
<path d="M45.5,710 V704.5 H407.5 V710" stroke="#555" stroke-width="1.3" fill="none"/>
<line x1="42.0" y1="677.4" x2="45.5" y2="677.4" stroke="#555" stroke-width="1.3"/>
<text x="38.0" y="680.9" text-anchor="end" font-size="10" fill="#555">0</text>
<line x1="42.0" y1="587.9" x2="45.5" y2="587.9" stroke="#555" stroke-width="1.3"/>
<text x="38.0" y="591.4" text-anchor="end" font-size="10" fill="#555">50</text>
<line x1="42.0" y1="498.4" x2="45.5" y2="498.4" stroke="#555" stroke-width="1.3"/>
<text x="38.0" y="501.9" text-anchor="end" font-size="10" fill="#555">100</text>
<line x1="42.0" y1="408.9" x2="45.5" y2="408.9" stroke="#555" stroke-width="1.3"/>
<text x="38.0" y="412.4" text-anchor="end" font-size="10" fill="#555">150</text>
<line x1="42.0" y1="319.5" x2="45.5" y2="319.5" stroke="#555" stroke-width="1.3"/>
<text x="38.0" y="323.0" text-anchor="end" font-size="10" fill="#555">200</text>
<line x1="42.0" y1="230.0" x2="45.5" y2="230.0" stroke="#555" stroke-width="1.3"/>
<text x="38.0" y="233.5" text-anchor="end" font-size="10" fill="#555">250</text>
<line x1="42.0" y1="140.5" x2="45.5" y2="140.5" stroke="#555" stroke-width="1.3"/>
<text x="38.0" y="144.0" text-anchor="end" font-size="10" fill="#555">300</text>
<line x1="61.5" y1="704.5" x2="61.5" y2="707.5" stroke="#555" stroke-width="1.3"/>
<text x="61.5" y="717" text-anchor="middle" font-size="10" fill="#555">0</text>
<line x1="120.3" y1="704.5" x2="120.3" y2="707.5" stroke="#555" stroke-width="1.3"/>
<text x="120.3" y="717" text-anchor="middle" font-size="10" fill="#555">5</text>
<line x1="179.1" y1="704.5" x2="179.1" y2="707.5" stroke="#555" stroke-width="1.3"/>
<text x="179.1" y="717" text-anchor="middle" font-size="10" fill="#555">10</text>
<line x1="237.8" y1="704.5" x2="237.8" y2="707.5" stroke="#555" stroke-width="1.3"/>
<text x="237.8" y="717" text-anchor="middle" font-size="10" fill="#555">15</text>
<line x1="296.6" y1="704.5" x2="296.6" y2="707.5" stroke="#555" stroke-width="1.3"/>
<text x="296.6" y="717" text-anchor="middle" font-size="10" fill="#555">20</text>
<line x1="355.4" y1="704.5" x2="355.4" y2="707.5" stroke="#555" stroke-width="1.3"/>
<text x="355.4" y="717" text-anchor="middle" font-size="10" fill="#555">25</text>
<rect x="457.8" y="109" width="361.49999999999994" height="595.5" fill="#fafafd"/>
<line x1="473.5" y1="109" x2="473.5" y2="704" stroke="#dcdce0" stroke-width="1"/>
<line x1="532.1" y1="109" x2="532.1" y2="704" stroke="#dcdce0" stroke-width="1"/>
<line x1="590.7" y1="109" x2="590.7" y2="704" stroke="#dcdce0" stroke-width="1"/>
<line x1="649.3" y1="109" x2="649.3" y2="704" stroke="#dcdce0" stroke-width="1"/>
<line x1="707.9" y1="109" x2="707.9" y2="704" stroke="#dcdce0" stroke-width="1"/>
<line x1="766.5" y1="109" x2="766.5" y2="704" stroke="#dcdce0" stroke-width="1"/>
<line x1="457.8" y1="677.4" x2="819.3" y2="677.4" stroke="#dcdce0" stroke-width="1"/>
<line x1="457.8" y1="587.9" x2="819.3" y2="587.9" stroke="#dcdce0" stroke-width="1"/>
<line x1="457.8" y1="498.4" x2="819.3" y2="498.4" stroke="#dcdce0" stroke-width="1"/>
<line x1="457.8" y1="408.9" x2="819.3" y2="408.9" stroke="#dcdce0" stroke-width="1"/>
<line x1="457.8" y1="319.5" x2="819.3" y2="319.5" stroke="#dcdce0" stroke-width="1"/>
<line x1="457.8" y1="230.0" x2="819.3" y2="230.0" stroke="#dcdce0" stroke-width="1"/>
<line x1="457.8" y1="140.5" x2="819.3" y2="140.5" stroke="#dcdce0" stroke-width="1"/>
<path d="M473.5,677.4l0.6,-7 0.6,-6.4 0.6,-5.8 0.5,-5.4 0.6,-4.9 0.6,-4.5 0.6,-4.1 0.6,-3.7 0.6,-3.4 0.6,-3 0.5,-2.8 0.6,-2.4 0.6,-2.2 0.6,-2 0.6,-1.7 0.6,-1.5 0.6,-1.4 0.5,-1.1 0.6,-1 0.6,-0.8 0.6,-7.6 0.6,-7 0.6,-6.3 0.6,-5.7 0.6,-5.1 0.5,-4.6 0.6,-4.1 0.6,-3.6 0.6,-3.2 0.6,-2.9 0.6,-2.4 0.6,-2.2 0.5,-1.8 0.6,-1.5 0.6,-1.2 0.6,-1 0.6,-0.8 0.6,-0.6 0.6,-0.3 0.5,-0.2 0.6,-7 0.6,-6.2 0.6,-5.6 0.6,-5 0.6,-4.3 0.6,-3.9 0.5,-3.3 0.6,-2.9 0.6,-2.5 0.6,-2 0.6,-1.7 0.6,-1.3 0.6,-1.1 0.5,-0.7 0.6,-0.5 0.6,-0.2 0.6,0 0.6,0.3 0.6,0.4 0.6,0.6 0.5,-6.2 0.6,-5.5 0.6,-4.9 0.6,-4.2 0.6,-3.6 0.6,-3.2 0.6,-2.6 0.5,-2.1 0.6,-1.8 0.6,-1.3 0.6,-1 0.6,-0.7 0.6,-0.3 0.6,-0.1 0.5,0.2 0.6,0.4 0.6,0.7 0.6,0.8 0.6,1.1 0.6,1.2 0.6,-5.6 0.6,-4.9 0.5,-4.3 0.6,-3.6 0.6,-3.1 0.6,-2.6 0.6,-2 0.6,-1.7 0.6,-1.2 0.5,-0.8 0.6,-0.5 0.6,-0.1 0.6,0.1 0.6,0.4 0.6,0.7 0.6,0.9 0.5,1.1 0.6,1.3 0.6,1.5 0.6,1.7 0.6,-5.2 0.6,-4.5 0.6,-3.8 0.5,-3.3 0.6,-2.7 0.6,-2.1 0.6,-1.7 0.6,-1.2 0.6,-0.9 0.6,-0.4 0.5,-0.2 0.6,0.2 0.6,0.5 0.6,0.8 0.6,1 0.6,1.2 0.6,1.5 0.5,1.6 0.6,1.8 0.6,1.9 0.6,-4.9 0.6,-4.2 0.6,-3.5 0.6,-3 0.6,-2.4 0.5,-1.9 0.6,-1.4 0.6,-1 0.6,-0.5 0.6,-0.3 0.6,0.2 0.6,0.4 0.5,0.7 0.6,1 0.6,1.3 0.6,1.4 0.6,1.7 0.6,1.8 0.6,2 0.5,2.2 0.6,2.3 0.6,2.4 0.6,2.5 0.6,2.6 0.6,2.7 0.6,2.8 0.5,2.8 0.6,2.9 0.6,3 0.6,3 2.3,12.3 2.4,12.5 2.3,12.4 2.4,12.2 2.3,11.7 2.4,11.3 2.3,10.8 2.4,10.1 2.3,9.6 2.3,9.1 2.4,8.4 2.3,7.9 2.4,7.4 2.3,6.8 2.4,6.4 2.3,6 2.3,5.5 2.4,5.1 2.3,4.7 2.4,4.4 2.3,4.1 2.4,3.8 2.3,3.4 2.4,3.3 2.3,3 2.3,2.7 2.4,2.6 2.3,2.3 2.4,2.2 2.3,2.1 2.4,1.8 2.3,1.8 2.4,1.6 2.3,1.4 2.3,1.4 2.4,1.3 2.3,1.1 2.4,1.1 2.3,1 2.4,0.9 2.3,0.9 2.3,0.8 2.4,0.7 2.3,0.7 2.4,0.6 2.3,0.6 2.4,0.5 2.3,0.5 2.4,0.4 2.3,0.5 2.3,0.4 2.4,0.3 2.3,0.3 2.4,0.4 2.3,0.2 2.4,0.3 2.3,0.2 2.4,0.3 2.3,0.2 2.3,0.2 2.4,0.1 2.3,0.2 2.4,0.2 2.3,0.1 2.4,0.1 2.3,0.1 2.3,0.2 2.4,0.1 2.3,0 2.4,0.1 2.3,0.1 2.4,0.1 2.3,0.1 2.4,0 2.3,0.1 2.3,0 2.4,0.1 2.3,0 2.4,0.1 2.3,0 2.4,0.1 2.3,0 2.4,0 2.3,0 2.3,0.1 2.4,0 2.3,0 2.4,0 2.3,0.1 2.4,0 2.3,0 2.3,0 2.4,0 2.3,0 2.4,0.1 2.3,0 2.4,0 2.3,0 2.4,0 2.3,0 2.3,0 2.4,0" stroke="#12c2e3" stroke-width="1.6" fill="none"/>
<path d="M473.5,677.4l0.6,-9.7 0.6,-8.9 0.6,-8 0.5,-7.2 0.6,-6.6 0.6,-5.9 0.6,-5.3 0.6,-4.7 0.6,-4.2 0.6,-3.8 0.5,-3.3 0.6,-3 0.6,-2.5 0.6,-2.2 0.6,-2 0.6,-1.6 0.6,-1.4 0.5,-1.1 0.6,-0.9 0.6,-0.7 0.6,-10.2 0.6,-9.2 0.6,-8.2 0.6,-7.4 0.6,-6.4 0.5,-5.7 0.6,-5 0.6,-4.4 0.6,-3.8 0.6,-3.2 0.6,-2.7 0.6,-2.2 0.5,-1.9 0.6,-1.4 0.6,-1.1 0.6,-0.7 0.6,-0.5 0.6,-0.2 0.6,0.1 0.5,0.3 0.6,-9.3 0.6,-8.2 0.6,-7.2 0.6,-6.2 0.6,-5.5 0.6,-4.6 0.5,-4 0.6,-3.3 0.6,-2.7 0.6,-2.1 0.6,-1.7 0.6,-1.2 0.6,-0.8 0.5,-0.4 0.6,0 0.6,0.2 0.6,0.6 0.6,0.8 0.6,1 0.6,1.3 0.5,-8.3 0.6,-7.2 0.6,-6.2 0.6,-5.4 0.6,-4.5 0.6,-3.7 0.6,-3.1 0.5,-2.4 0.6,-1.8 0.6,-1.3 0.6,-0.9 0.6,-0.3 0.6,0 0.6,0.4 0.5,0.7 0.6,1.1 0.6,1.3 0.6,1.6 0.6,1.7 0.6,2 0.6,-7.6 0.6,-6.5 0.5,-5.5 0.6,-4.7 0.6,-3.8 0.6,-3.1 0.6,-2.4 0.6,-1.8 0.6,-1.3 0.5,-0.7 0.6,-0.2 0.6,0.2 0.6,0.6 0.6,1 0.6,1.3 0.6,1.6 0.5,1.8 0.6,2.1 0.6,2.3 0.6,2.4 0.6,-7 0.6,-6.1 0.6,-5.1 0.5,-4.2 0.6,-3.4 0.6,-2.6 0.6,-2 0.6,-1.4 0.6,-0.8 0.6,-0.3 0.5,0.2 0.6,0.6 0.6,1 0.6,1.3 0.6,1.7 0.6,1.9 0.6,2.2 0.5,2.4 0.6,2.7 0.6,2.8 0.6,-6.8 0.6,-5.7 0.6,-4.8 0.6,-3.8 0.6,-3.1 0.5,-2.4 0.6,-1.7 0.6,-1.1 0.6,-0.5 0.6,0 0.6,0.4 0.6,0.9 0.5,1.2 0.6,1.6 0.6,1.9 0.6,2.2 0.6,2.4 0.6,2.7 0.6,2.8 0.5,3.1 0.6,3.2 0.6,3.3 0.6,3.4 0.6,3.6 0.6,3.7 0.6,3.7 0.5,3.8 0.6,3.8 0.6,3.9 0.6,3.9 2.3,15.9 2.4,15.8 2.3,15.5 2.4,15 2.3,14.2 2.4,13.5 2.3,12.7 2.4,11.9 2.3,11.2 2.3,10.3 2.4,9.7 2.3,8.9 2.4,8.3 2.3,7.6 2.4,7.1 2.3,6.5 2.3,6.1 2.4,5.5 2.3,5.2 2.4,4.7 2.3,4.4 2.4,4 2.3,3.7 2.4,3.5 2.3,3.1 2.3,2.9 2.4,2.7 2.3,2.5 2.4,2.2 2.3,2.1 2.4,2 2.3,1.7 2.4,1.7 2.3,1.5 2.3,1.4 2.4,1.3 2.3,1.1 2.4,1.1 2.3,1 2.4,0.9 2.3,0.9 2.3,0.8 2.4,0.7 2.3,0.7 2.4,0.6 2.3,0.5 2.4,0.5 2.3,0.5 2.4,0.5 2.3,0.4 2.3,0.3 2.4,0.4 2.3,0.3 2.4,0.3 2.3,0.3 2.4,0.2 2.3,0.2 2.4,0.2 2.3,0.2 2.3,0.2 2.4,0.2 2.3,0.1 2.4,0.2 2.3,0.1 2.4,0.1 2.3,0.1 2.3,0.1 2.4,0.1 2.3,0.1 2.4,0.1 2.3,0.1 2.4,0 2.3,0.1 2.4,0 2.3,0.1 2.3,0 2.4,0.1 2.3,0 2.4,0.1 2.3,0 2.4,0 2.3,0.1 2.4,0 2.3,0 2.3,0 2.4,0.1 2.3,0 2.4,0 2.3,0 2.4,0 2.3,0 2.3,0 2.4,0.1 2.3,0 2.4,0 2.3,0 2.4,0 2.3,0 2.4,0 2.3,0 2.3,0 2.4,0" stroke="#12c2e3" stroke-width="1.6" fill="none"/>
<path d="M473.5,677.4l0.6,-22.5 0.6,-19.5 0.6,-16.8 0.5,-14.5 0.6,-12.5 0.6,-10.6 0.6,-9.1 0.6,-7.7 0.6,-6.4 0.6,-5.4 0.5,-4.4 0.6,-3.6 0.6,-2.9 0.6,-2.2 0.6,-1.7 0.6,-1.2 0.6,-0.7 0.5,-0.4 0.6,-0.1 0.6,0.2 0.6,-22 0.6,-18.9 0.6,-16 0.6,-13.5 0.6,-11.3 0.5,-9.4 0.6,-7.8 0.6,-6.2 0.6,-5 0.6,-3.8 0.6,-2.8 0.6,-2 0.5,-1.2 0.6,-0.6 0.6,0 0.6,0.5 0.6,1 0.6,1.3 0.6,1.6 0.5,1.9 0.6,-20.3 0.6,-17.2 0.6,-14.3 0.6,-11.9 0.6,-9.7 0.6,-7.7 0.5,-6.2 0.6,-4.6 0.6,-3.4 0.6,-2.3 0.6,-1.3 0.6,-0.4 0.6,0.2 0.5,1 0.6,1.4 0.6,2 0.6,2.3 0.6,2.7 0.6,3 0.6,3.3 0.5,-19 0.6,-15.8 0.6,-13.1 0.6,-10.6 0.6,-8.4 0.6,-6.5 0.6,-4.9 0.5,-3.5 0.6,-2.2 0.6,-1.1 0.6,-0.2 0.6,0.7 0.6,1.4 0.6,2 0.5,2.5 0.6,3 0.6,3.4 0.6,3.7 0.6,4 0.6,4.3 0.6,-18.1 0.6,-14.8 0.5,-12.1 0.6,-9.7 0.6,-7.5 0.6,-5.6 0.6,-4 0.6,-2.6 0.6,-1.4 0.5,-0.3 0.6,0.7 0.6,1.5 0.6,2.2 0.6,2.8 0.6,3.3 0.6,3.7 0.5,4.2 0.6,4.4 0.6,4.8 0.6,4.9 0.6,-17.3 0.6,-14.2 0.6,-11.4 0.5,-9 0.6,-6.8 0.6,-5 0.6,-3.4 0.6,-2 0.6,-0.7 0.6,0.3 0.5,1.3 0.6,2.1 0.6,2.7 0.6,3.4 0.6,3.9 0.6,4.3 0.6,4.7 0.5,5 0.6,5.2 0.6,5.5 0.6,-16.8 0.6,-13.7 0.6,-10.9 0.6,-8.5 0.6,-6.4 0.5,-4.5 0.6,-3 0.6,-1.5 0.6,-0.3 0.6,0.8 0.6,1.7 0.6,2.5 0.5,3.2 0.6,3.8 0.6,4.2 0.6,4.8 0.6,5 0.6,5.4 0.6,5.6 0.5,5.9 0.6,6 0.6,6.2 0.6,6.3 0.6,6.3 0.6,6.4 0.6,6.5 0.5,6.5 0.6,6.5 0.6,6.4 0.6,6.5 2.3,25.5 2.4,24.6 2.3,23.5 2.4,22.3 2.3,21.1 2.4,19.8 2.3,18.7 2.4,17.5 2.3,16.4 2.3,15.4 2.4,14.5 2.3,13.5 2.4,12.7 2.3,11.9 2.4,11.1 2.3,10.4 2.3,9.8 2.4,9.2 2.3,8.6 2.4,8 2.3,7.5 2.4,7.1 2.3,6.6 2.4,6.2 2.3,5.8 2.3,5.5 2.4,5.1 2.3,4.7 2.4,4.5 2.3,4.2 2.4,3.9 2.3,3.7 2.4,3.5 2.3,3.2 2.3,3 2.4,2.9 2.3,2.6 2.4,2.5 2.3,2.3 2.4,2.2 2.3,2.1 2.3,1.9 2.4,1.8 2.3,1.7 2.4,1.6 2.3,1.4 2.4,1.4 2.3,1.3 2.4,1.2 2.3,1.2 2.3,1 2.4,1 2.3,1 2.4,0.9 2.3,0.8 2.4,0.7 2.3,0.8 2.4,0.6 2.3,0.7 2.3,0.6 2.4,0.5 2.3,0.6 2.4,0.4 2.3,0.5 2.4,0.4 2.3,0.4 2.3,0.4 2.4,0.4 2.3,0.3 2.4,0.3 2.3,0.3 2.4,0.3 2.3,0.2 2.4,0.3 2.3,0.2 2.3,0.2 2.4,0.2 2.3,0.2 2.4,0.1 2.3,0.2 2.4,0.2 2.3,0.1 2.4,0.1 2.3,0.2 2.3,0.1 2.4,0.1 2.3,0.1 2.4,0.1 2.3,0.1 2.4,0 2.3,0.1 2.3,0.1 2.4,0.1 2.3,0 2.4,0.1 2.3,0.1 2.4,0 2.3,0.1 2.4,0 2.3,0 2.3,0.1 2.4,0" stroke="#12c2e3" stroke-width="1.6" fill="none"/>
<path d="M473.5,677.4l0.6,-5.8 0.6,-5.3 0.6,-5 0.5,-4.7 0.6,-4.3 0.6,-3.9 0.6,-3.7 0.6,-3.4 0.6,-3.1 0.6,-2.9 0.5,-2.7 0.6,-2.4 0.6,-2.2 0.6,-2 0.6,-1.8 0.6,-1.7 0.6,-1.4 0.5,-1.4 0.6,-1.2 0.6,-1 0.6,-6.7 0.6,-6.2 0.6,-5.6 0.6,-5.3 0.6,-4.7 0.5,-4.4 0.6,-4 0.6,-3.6 0.6,-3.3 0.6,-2.9 0.6,-2.7 0.6,-2.3 0.5,-2.1 0.6,-1.9 0.6,-1.6 0.6,-1.4 0.6,-1.2 0.6,-1 0.6,-0.8 0.5,-0.6 0.6,-6.3 0.6,-5.7 0.6,-5.2 0.6,-4.7 0.6,-4.2 0.6,-3.8 0.5,-3.4 0.6,-3.1 0.6,-2.6 0.6,-2.4 0.6,-2 0.6,-1.7 0.6,-1.5 0.5,-1.2 0.6,-0.9 0.6,-0.8 0.6,-0.5 0.6,-0.3 0.6,-0.1 0.6,0 0.5,-5.6 0.6,-5 0.6,-4.5 0.6,-4.1 0.6,-3.5 0.6,-3.2 0.6,-2.7 0.5,-2.4 0.6,-2 0.6,-1.7 0.6,-1.4 0.6,-1 0.6,-0.8 0.6,-0.6 0.5,-0.3 0.6,-0.1 0.6,0.1 0.6,0.3 0.6,0.4 0.6,0.7 0.6,-5 0.6,-4.4 0.5,-4 0.6,-3.4 0.6,-3 0.6,-2.6 0.6,-2.2 0.6,-1.8 0.6,-1.5 0.5,-1.1 0.6,-0.9 0.6,-0.5 0.6,-0.3 0.6,-0.1 0.6,0.2 0.6,0.4 0.5,0.6 0.6,0.8 0.6,0.9 0.6,1.1 0.6,-4.5 0.6,-4 0.6,-3.5 0.5,-3 0.6,-2.6 0.6,-2.1 0.6,-1.8 0.6,-1.4 0.6,-1.1 0.6,-0.7 0.5,-0.4 0.6,-0.2 0.6,0.1 0.6,0.3 0.6,0.5 0.6,0.8 0.6,0.9 0.5,1.2 0.6,1.2 0.6,1.5 0.6,-4.2 0.6,-3.7 0.6,-3.1 0.6,-2.7 0.6,-2.3 0.5,-1.8 0.6,-1.5 0.6,-1.1 0.6,-0.8 0.6,-0.4 0.6,-0.2 0.6,0.1 0.5,0.4 0.6,0.5 0.6,0.9 0.6,1 0.6,1.2 0.6,1.3 0.6,1.6 0.5,1.7 0.6,1.8 0.6,1.9 0.6,2.1 0.6,2.1 0.6,2.3 0.6,2.3 0.5,2.5 0.6,2.5 0.6,2.5 0.6,2.6 2.3,11 2.4,11.3 2.3,11.6 2.4,11.6 2.3,11.4 2.4,11.2 2.3,10.8 2.4,10.4 2.3,9.9 2.3,9.4 2.4,9 2.3,8.5 2.4,8 2.3,7.5 2.4,7.1 2.3,6.6 2.3,6.2 2.4,5.9 2.3,5.4 2.4,5.1 2.3,4.7 2.4,4.5 2.3,4.1 2.4,3.8 2.3,3.6 2.3,3.4 2.4,3.1 2.3,2.9 2.4,2.6 2.3,2.5 2.4,2.4 2.3,2.1 2.4,2.1 2.3,1.8 2.3,1.8 2.4,1.6 2.3,1.5 2.4,1.4 2.3,1.3 2.4,1.2 2.3,1.1 2.3,1 2.4,1 2.3,0.9 2.4,0.9 2.3,0.7 2.4,0.7 2.3,0.7 2.4,0.6 2.3,0.6 2.3,0.6 2.4,0.5 2.3,0.4 2.4,0.5 2.3,0.4 2.4,0.3 2.3,0.4 2.4,0.3 2.3,0.3 2.3,0.3 2.4,0.2 2.3,0.3 2.4,0.2 2.3,0.2 2.4,0.2 2.3,0.2 2.3,0.1 2.4,0.2 2.3,0.1 2.4,0.2 2.3,0.1 2.4,0.1 2.3,0.1 2.4,0.1 2.3,0.1 2.3,0.1 2.4,0.1 2.3,0 2.4,0.1 2.3,0.1 2.4,0 2.3,0.1 2.4,0 2.3,0.1 2.3,0 2.4,0.1 2.3,0 2.4,0 2.3,0.1 2.4,0 2.3,0 2.3,0.1 2.4,0 2.3,0 2.4,0 2.3,0 2.4,0.1 2.3,0 2.4,0 2.3,0 2.3,0 2.4,0" stroke="#ff6e31" stroke-width="1.6" fill="none"/>
<path d="M473.5,677.4l0.6,-15.4 0.6,-13.6 0.6,-12 0.5,-10.5 0.6,-9.2 0.6,-8 0.6,-6.9 0.6,-5.9 0.6,-5.1 0.6,-4.3 0.5,-3.6 0.6,-2.9 0.6,-2.4 0.6,-1.8 0.6,-1.5 0.6,-1 0.6,-0.6 0.5,-0.3 0.6,-0.1 0.6,0.2 0.6,-14.9 0.6,-13 0.6,-11.2 0.6,-9.5 0.6,-8.1 0.5,-6.8 0.6,-5.6 0.6,-4.6 0.6,-3.6 0.6,-2.8 0.6,-2 0.6,-1.3 0.5,-0.7 0.6,-0.2 0.6,0.2 0.6,0.7 0.6,1 0.6,1.4 0.6,1.7 0.5,1.9 0.6,-13.3 0.6,-11.3 0.6,-9.6 0.6,-7.9 0.6,-6.5 0.6,-5.2 0.5,-4 0.6,-3 0.6,-2.1 0.6,-1.3 0.6,-0.5 0.6,0.1 0.6,0.7 0.5,1.1 0.6,1.7 0.6,2 0.6,2.3 0.6,2.7 0.6,2.9 0.6,3.1 0.5,-12.1 0.6,-10.1 0.6,-8.4 0.6,-6.8 0.6,-5.4 0.6,-4.1 0.6,-3 0.5,-2 0.6,-1.1 0.6,-0.3 0.6,0.4 0.6,1.1 0.6,1.5 0.6,2.1 0.5,2.5 0.6,2.8 0.6,3.2 0.6,3.5 0.6,3.6 0.6,3.9 0.6,-11.3 0.6,-9.4 0.5,-7.7 0.6,-6.1 0.6,-4.8 0.6,-3.4 0.6,-2.4 0.6,-1.4 0.6,-0.5 0.5,0.3 0.6,1 0.6,1.6 0.6,2.1 0.6,2.6 0.6,3 0.6,3.4 0.5,3.6 0.6,4 0.6,4.1 0.6,4.3 0.6,-10.9 0.6,-9 0.6,-7.2 0.5,-5.7 0.6,-4.3 0.6,-3.1 0.6,-2 0.6,-1 0.6,-0.2 0.6,0.7 0.5,1.3 0.6,1.9 0.6,2.5 0.6,2.9 0.6,3.3 0.6,3.6 0.6,4 0.5,4.2 0.6,4.4 0.6,4.6 0.6,-10.6 0.6,-8.8 0.6,-7 0.6,-5.4 0.6,-4.1 0.5,-2.9 0.6,-1.8 0.6,-0.7 0.6,0 0.6,0.9 0.6,1.5 0.6,2.1 0.5,2.6 0.6,3.1 0.6,3.5 0.6,3.8 0.6,4.2 0.6,4.3 0.6,4.6 0.5,4.8 0.6,4.9 0.6,5 0.6,5.1 0.6,5.2 0.6,5.3 0.6,5.2 0.5,5.3 0.6,5.3 0.6,5.3 0.6,5.2 2.3,20.6 2.4,19.6 2.3,18.4 2.4,17.1 2.3,15.7 2.4,14.4 2.3,13.1 2.4,11.9 2.3,10.8 2.3,9.7 2.4,8.8 2.3,8 2.4,7.2 2.3,6.5 2.4,5.8 2.3,5.3 2.3,4.7 2.4,4.2 2.3,3.9 2.4,3.4 2.3,3.1 2.4,2.8 2.3,2.6 2.4,2.2 2.3,2.1 2.3,1.8 2.4,1.6 2.3,1.5 2.4,1.4 2.3,1.2 2.4,1.1 2.3,0.9 2.4,0.9 2.3,0.8 2.3,0.7 2.4,0.7 2.3,0.5 2.4,0.5 2.3,0.5 2.4,0.4 2.3,0.4 2.3,0.3 2.4,0.4 2.3,0.2 2.4,0.3 2.3,0.2 2.4,0.2 2.3,0.2 2.4,0.1 2.3,0.2 2.3,0.1 2.4,0.1 2.3,0.1 2.4,0.1 2.3,0.1 2.4,0.1 2.3,0.1 2.4,0 2.3,0.1 2.3,0 2.4,0.1 2.3,0 2.4,0.1 2.3,0 2.4,0 2.3,0.1 2.3,0 2.4,0 2.3,0 2.4,0 2.3,0.1 2.4,0 2.3,0 2.4,0 2.3,0 2.3,0 2.4,0 2.3,0 2.4,0 2.3,0 2.4,0.1 2.3,0 2.4,0 2.3,0 2.3,0 2.4,0 2.3,0 2.4,0 2.3,0 2.4,0 2.3,0 2.3,0 2.4,0 2.3,0 2.4,0 2.3,0 2.4,0 2.3,0 2.4,0 2.3,0 2.3,0 2.4,0" stroke="#ff6e31" stroke-width="1.6" fill="none"/>
<path d="M473.5,677.4l0.6,-22.2 0.6,-19.3 0.6,-16.5 0.5,-14.2 0.6,-12.1 0.6,-10.3 0.6,-8.7 0.6,-7.4 0.6,-6.1 0.6,-5 0.5,-4.1 0.6,-3.2 0.6,-2.6 0.6,-1.9 0.6,-1.3 0.6,-0.9 0.6,-0.5 0.5,-0.1 0.6,0.2 0.6,0.5 0.6,-21.5 0.6,-18.3 0.6,-15.5 0.6,-13 0.6,-10.7 0.5,-8.9 0.6,-7.2 0.6,-5.7 0.6,-4.4 0.6,-3.3 0.6,-2.4 0.6,-1.4 0.5,-0.8 0.6,-0.1 0.6,0.5 0.6,0.9 0.6,1.4 0.6,1.7 0.6,2 0.5,2.3 0.6,-19.8 0.6,-16.5 0.6,-13.7 0.6,-11.2 0.6,-9.1 0.6,-7.1 0.5,-5.6 0.6,-4 0.6,-2.8 0.6,-1.7 0.6,-0.8 0.6,0.1 0.6,0.8 0.5,1.4 0.6,1.9 0.6,2.4 0.6,2.8 0.6,3.1 0.6,3.4 0.6,3.7 0.5,-18.4 0.6,-15.3 0.6,-12.4 0.6,-9.9 0.6,-7.9 0.6,-5.9 0.6,-4.3 0.5,-2.9 0.6,-1.7 0.6,-0.5 0.6,0.3 0.6,1.2 0.6,1.9 0.6,2.4 0.5,3 0.6,3.4 0.6,3.8 0.6,4.1 0.6,4.4 0.6,4.5 0.6,-17.4 0.6,-14.3 0.5,-11.6 0.6,-9.1 0.6,-6.9 0.6,-5.1 0.6,-3.5 0.6,-2.1 0.6,-0.8 0.5,0.2 0.6,1.1 0.6,1.9 0.6,2.7 0.6,3.1 0.6,3.7 0.6,4.2 0.5,4.4 0.6,4.8 0.6,5 0.6,5.3 0.6,-16.9 0.6,-13.7 0.6,-10.9 0.5,-8.5 0.6,-6.3 0.6,-4.6 0.6,-2.9 0.6,-1.5 0.6,-0.3 0.6,0.8 0.5,1.6 0.6,2.5 0.6,3.1 0.6,3.7 0.6,4.2 0.6,4.6 0.6,4.9 0.5,5.3 0.6,5.4 0.6,5.7 0.6,-16.4 0.6,-13.2 0.6,-10.5 0.6,-8.1 0.6,-6 0.5,-4.1 0.6,-2.5 0.6,-1.1 0.6,0.1 0.6,1.1 0.6,2 0.6,2.8 0.5,3.5 0.6,4 0.6,4.5 0.6,5 0.6,5.2 0.6,5.6 0.6,5.8 0.5,6 0.6,6.1 0.6,6.3 0.6,6.3 0.6,6.4 0.6,6.5 0.6,6.4 0.5,6.5 0.6,6.5 0.6,6.4 0.6,6.4 2.3,25.1 2.4,24 2.3,22.7 2.4,21.4 2.3,19.9 2.4,18.7 2.3,17.3 2.4,16.1 2.3,15 2.3,13.9 2.4,13 2.3,12 2.4,11.1 2.3,10.3 2.4,9.6 2.3,8.9 2.3,8.3 2.4,7.6 2.3,7.2 2.4,6.6 2.3,6.1 2.4,5.7 2.3,5.2 2.4,4.9 2.3,4.6 2.3,4.2 2.4,3.9 2.3,3.6 2.4,3.4 2.3,3.1 2.4,2.9 2.3,2.7 2.4,2.5 2.3,2.3 2.3,2.2 2.4,2 2.3,1.8 2.4,1.8 2.3,1.6 2.4,1.4 2.3,1.4 2.3,1.3 2.4,1.2 2.3,1.1 2.4,1 2.3,0.9 2.4,0.9 2.3,0.8 2.4,0.8 2.3,0.7 2.3,0.6 2.4,0.6 2.3,0.6 2.4,0.5 2.3,0.5 2.4,0.4 2.3,0.5 2.4,0.3 2.3,0.4 2.3,0.3 2.4,0.3 2.3,0.3 2.4,0.3 2.3,0.2 2.4,0.3 2.3,0.2 2.3,0.2 2.4,0.1 2.3,0.2 2.4,0.2 2.3,0.1 2.4,0.2 2.3,0.1 2.4,0.1 2.3,0.1 2.3,0.1 2.4,0.1 2.3,0.1 2.4,0.1 2.3,0 2.4,0.1 2.3,0.1 2.4,0 2.3,0.1 2.3,0 2.4,0.1 2.3,0 2.4,0.1 2.3,0 2.4,0 2.3,0.1 2.3,0 2.4,0 2.3,0.1 2.4,0 2.3,0 2.4,0 2.3,0.1 2.4,0 2.3,0 2.3,0 2.4,0" stroke="#12c2e3" stroke-width="1.6" fill="none"/>
<path d="M473.5,677.4l0.6,-5.3 0.6,-4.9 0.6,-4.6 0.5,-4.2 0.6,-3.9 0.6,-3.6 0.6,-3.3 0.6,-3 0.6,-2.8 0.6,-2.6 0.5,-2.3 0.6,-2.1 0.6,-1.9 0.6,-1.7 0.6,-1.6 0.6,-1.4 0.6,-1.2 0.5,-1.1 0.6,-1 0.6,-0.8 0.6,-6.1 0.6,-5.5 0.6,-5.1 0.6,-4.6 0.6,-4.3 0.5,-3.8 0.6,-3.5 0.6,-3.1 0.6,-2.8 0.6,-2.5 0.6,-2.3 0.6,-1.9 0.5,-1.8 0.6,-1.5 0.6,-1.2 0.6,-1.1 0.6,-0.9 0.6,-0.7 0.6,-0.6 0.5,-0.4 0.6,-5.6 0.6,-5 0.6,-4.6 0.6,-4.1 0.6,-3.7 0.6,-3.3 0.5,-2.9 0.6,-2.5 0.6,-2.2 0.6,-1.9 0.6,-1.7 0.6,-1.3 0.6,-1.1 0.5,-0.9 0.6,-0.7 0.6,-0.4 0.6,-0.3 0.6,-0.1 0.6,0.1 0.6,0.2 0.5,-4.9 0.6,-4.4 0.6,-4 0.6,-3.4 0.6,-3.1 0.6,-2.7 0.6,-2.2 0.5,-2 0.6,-1.6 0.6,-1.3 0.6,-1.1 0.6,-0.7 0.6,-0.5 0.6,-0.3 0.5,-0.1 0.6,0.1 0.6,0.3 0.6,0.4 0.6,0.7 0.6,0.7 0.6,-4.4 0.6,-3.9 0.5,-3.4 0.6,-3 0.6,-2.5 0.6,-2.2 0.6,-1.8 0.6,-1.5 0.6,-1.1 0.5,-0.8 0.6,-0.6 0.6,-0.3 0.6,-0.1 0.6,0.1 0.6,0.4 0.6,0.5 0.5,0.7 0.6,0.9 0.6,1 0.6,1.2 0.6,-4 0.6,-3.5 0.6,-3.1 0.5,-2.6 0.6,-2.2 0.6,-1.8 0.6,-1.4 0.6,-1.1 0.6,-0.9 0.6,-0.5 0.5,-0.2 0.6,0 0.6,0.2 0.6,0.5 0.6,0.6 0.6,0.9 0.6,1 0.5,1.2 0.6,1.3 0.6,1.4 0.6,-3.7 0.6,-3.3 0.6,-2.8 0.6,-2.3 0.6,-1.9 0.5,-1.6 0.6,-1.2 0.6,-0.9 0.6,-0.5 0.6,-0.3 0.6,0 0.6,0.2 0.5,0.5 0.6,0.6 0.6,0.9 0.6,1 0.6,1.2 0.6,1.4 0.6,1.5 0.5,1.6 0.6,1.8 0.6,1.9 0.6,1.9 0.6,2.1 0.6,2.1 0.6,2.2 0.5,2.3 0.6,2.3 0.6,2.4 0.6,2.4 2.3,10 2.4,10.3 2.3,10.5 2.4,10.3 2.3,10.1 2.4,9.8 2.3,9.4 2.4,8.9 2.3,8.5 2.3,8.1 2.4,7.6 2.3,7.1 2.4,6.6 2.3,6.3 2.4,5.8 2.3,5.4 2.3,5.1 2.4,4.6 2.3,4.4 2.4,4 2.3,3.8 2.4,3.4 2.3,3.3 2.4,2.9 2.3,2.8 2.3,2.5 2.4,2.4 2.3,2.2 2.4,2 2.3,1.8 2.4,1.8 2.3,1.5 2.4,1.5 2.3,1.4 2.3,1.2 2.4,1.2 2.3,1 2.4,1 2.3,0.9 2.4,0.9 2.3,0.7 2.3,0.7 2.4,0.7 2.3,0.6 2.4,0.6 2.3,0.5 2.4,0.5 2.3,0.4 2.4,0.4 2.3,0.4 2.3,0.3 2.4,0.4 2.3,0.3 2.4,0.2 2.3,0.3 2.4,0.2 2.3,0.2 2.4,0.2 2.3,0.2 2.3,0.2 2.4,0.1 2.3,0.2 2.4,0.1 2.3,0.1 2.4,0.1 2.3,0.2 2.3,0 2.4,0.1 2.3,0.1 2.4,0.1 2.3,0.1 2.4,0 2.3,0.1 2.4,0 2.3,0.1 2.3,0 2.4,0.1 2.3,0 2.4,0.1 2.3,0 2.4,0 2.3,0.1 2.4,0 2.3,0 2.3,0 2.4,0 2.3,0.1 2.4,0 2.3,0 2.4,0 2.3,0 2.3,0 2.4,0.1 2.3,0 2.4,0 2.3,0 2.4,0 2.3,0 2.4,0 2.3,0 2.3,0 2.4,0" stroke="#ff6e31" stroke-width="1.6" fill="none"/>
<path d="M473.5,677.4l0.6,-7.2 0.6,-6.5 0.6,-5.8 0.5,-5.2 0.6,-4.7 0.6,-4.1 0.6,-3.8 0.6,-3.3 0.6,-2.9 0.6,-2.6 0.5,-2.3 0.6,-2 0.6,-1.7 0.6,-1.6 0.6,-1.3 0.6,-1.1 0.6,-0.9 0.5,-0.8 0.6,-0.7 0.6,-0.5 0.6,-7.6 0.6,-6.8 0.6,-6 0.6,-5.3 0.6,-4.7 0.5,-4.2 0.6,-3.6 0.6,-3.2 0.6,-2.7 0.6,-2.3 0.6,-2 0.6,-1.7 0.5,-1.4 0.6,-1.2 0.6,-0.9 0.6,-0.7 0.6,-0.5 0.6,-0.3 0.6,-0.1 0.5,-0.1 0.6,-7.1 0.6,-6.2 0.6,-5.5 0.6,-4.8 0.6,-4.2 0.6,-3.6 0.5,-3.1 0.6,-2.6 0.6,-2.2 0.6,-1.8 0.6,-1.4 0.6,-1.2 0.6,-0.8 0.5,-0.6 0.6,-0.4 0.6,-0.1 0.6,0 0.6,0.3 0.6,0.3 0.6,0.5 0.5,-6.5 0.6,-5.8 0.6,-5 0.6,-4.2 0.6,-3.7 0.6,-3.1 0.6,-2.6 0.5,-2.1 0.6,-1.7 0.6,-1.3 0.6,-1 0.6,-0.7 0.6,-0.3 0.6,-0.2 0.5,0.1 0.6,0.3 0.6,0.5 0.6,0.7 0.6,0.8 0.6,0.9 0.6,-6.1 0.6,-5.3 0.5,-4.6 0.6,-3.9 0.6,-3.2 0.6,-2.7 0.6,-2.2 0.6,-1.7 0.6,-1.3 0.5,-0.9 0.6,-0.6 0.6,-0.3 0.6,0 0.6,0.2 0.6,0.5 0.6,0.6 0.5,0.9 0.6,1 0.6,1.1 0.6,1.3 0.6,-5.8 0.6,-5 0.6,-4.2 0.5,-3.5 0.6,-3 0.6,-2.3 0.6,-1.9 0.6,-1.4 0.6,-1 0.6,-0.7 0.5,-0.3 0.6,0 0.6,0.3 0.6,0.6 0.6,0.7 0.6,0.9 0.6,1.2 0.5,1.2 0.6,1.5 0.6,1.5 0.6,-5.5 0.6,-4.7 0.6,-4 0.6,-3.3 0.6,-2.7 0.5,-2.1 0.6,-1.6 0.6,-1.2 0.6,-0.8 0.6,-0.4 0.6,0 0.6,0.2 0.5,0.5 0.6,0.8 0.6,0.9 0.6,1.2 0.6,1.3 0.6,1.5 0.6,1.6 0.5,1.8 0.6,1.9 0.6,1.9 0.6,2.1 0.6,2.1 0.6,2.2 0.6,2.2 0.5,2.3 0.6,2.3 0.6,2.4 0.6,2.3 2.3,9.8 2.4,9.8 2.3,9.7 2.4,9.5 2.3,9.2 2.4,9 2.3,8.5 2.4,8.3 2.3,7.8 2.3,7.5 2.4,7.2 2.3,6.8 2.4,6.5 2.3,6.2 2.4,5.9 2.3,5.6 2.3,5.4 2.4,5 2.3,4.9 2.4,4.6 2.3,4.3 2.4,4.2 2.3,4 2.4,3.7 2.3,3.6 2.3,3.4 2.4,3.3 2.3,3 2.4,3 2.3,2.8 2.4,2.6 2.3,2.6 2.4,2.4 2.3,2.2 2.3,2.2 2.4,2.1 2.3,1.9 2.4,1.9 2.3,1.8 2.4,1.7 2.3,1.6 2.3,1.5 2.4,1.5 2.3,1.4 2.4,1.3 2.3,1.2 2.4,1.2 2.3,1.2 2.4,1.1 2.3,1 2.3,1 2.4,0.9 2.3,0.9 2.4,0.8 2.3,0.8 2.4,0.8 2.3,0.7 2.4,0.7 2.3,0.6 2.3,0.7 2.4,0.5 2.3,0.6 2.4,0.5 2.3,0.6 2.4,0.4 2.3,0.5 2.3,0.4 2.4,0.5 2.3,0.4 2.4,0.3 2.3,0.4 2.4,0.3 2.3,0.4 2.4,0.3 2.3,0.3 2.3,0.2 2.4,0.3 2.3,0.3 2.4,0.2 2.3,0.2 2.4,0.3 2.3,0.2 2.4,0.2 2.3,0.1 2.3,0.2 2.4,0.2 2.3,0.2 2.4,0.1 2.3,0.2 2.4,0.1 2.3,0.1 2.3,0.1 2.4,0.2 2.3,0.1 2.4,0.1 2.3,0.1 2.4,0.1 2.3,0.1 2.4,0.1 2.3,0.1 2.3,0 2.4,0.1" stroke="#ff6e31" stroke-width="1.6" fill="none"/>
<path d="M473.5,677.4l0.6,-8.7 0.6,-8 0.6,-7.5 0.5,-7 0.6,-6.4 0.6,-5.9 0.6,-5.5 0.6,-5.1 0.6,-4.6 0.6,-4.3 0.5,-3.9 0.6,-3.5 0.6,-3.3 0.6,-2.9 0.6,-2.7 0.6,-2.4 0.6,-2.1 0.5,-1.9 0.6,-1.7 0.6,-1.5 0.6,-10 0.6,-9.2 0.6,-8.4 0.6,-7.7 0.6,-7.1 0.5,-6.4 0.6,-5.8 0.6,-5.3 0.6,-4.8 0.6,-4.3 0.6,-3.8 0.6,-3.4 0.5,-3 0.6,-2.6 0.6,-2.3 0.6,-1.9 0.6,-1.6 0.6,-1.3 0.6,-1.1 0.5,-0.8 0.6,-9.2 0.6,-8.4 0.6,-7.6 0.6,-6.9 0.6,-6.2 0.6,-5.5 0.5,-4.9 0.6,-4.4 0.6,-3.8 0.6,-3.3 0.6,-2.8 0.6,-2.4 0.6,-2 0.5,-1.5 0.6,-1.3 0.6,-0.8 0.6,-0.6 0.6,-0.3 0.6,0 0.6,0.3 0.5,-8.2 0.6,-7.3 0.6,-6.6 0.6,-5.8 0.6,-5.1 0.6,-4.5 0.6,-3.9 0.5,-3.3 0.6,-2.8 0.6,-2.3 0.6,-1.8 0.6,-1.4 0.6,-1 0.6,-0.6 0.5,-0.3 0.6,0.1 0.6,0.4 0.6,0.7 0.6,0.9 0.6,1.2 0.6,-7.3 0.6,-6.4 0.5,-5.7 0.6,-5 0.6,-4.3 0.6,-3.6 0.6,-3.1 0.6,-2.4 0.6,-2 0.5,-1.5 0.6,-1 0.6,-0.7 0.6,-0.2 0.6,0.2 0.6,0.5 0.6,0.8 0.5,1.1 0.6,1.3 0.6,1.7 0.6,1.8 0.6,-6.6 0.6,-5.8 0.6,-5 0.5,-4.3 0.6,-3.6 0.6,-3.1 0.6,-2.4 0.6,-1.9 0.6,-1.4 0.6,-0.9 0.5,-0.5 0.6,0 0.6,0.3 0.6,0.7 0.6,1 0.6,1.3 0.6,1.6 0.5,1.9 0.6,2.1 0.6,2.4 0.6,-6.2 0.6,-5.3 0.6,-4.6 0.6,-3.8 0.6,-3.2 0.5,-2.6 0.6,-2.1 0.6,-1.4 0.6,-1 0.6,-0.5 0.6,-0.1 0.6,0.3 0.5,0.7 0.6,1.1 0.6,1.4 0.6,1.6 0.6,2 0.6,2.2 0.6,2.5 0.5,2.6 0.6,2.9 0.6,3.1 0.6,3.2 0.6,3.4 0.6,3.5 0.6,3.6 0.5,3.8 0.6,3.8 0.6,4 0.6,4 2.3,16.7 2.4,17.3 2.3,17.5 2.4,17.4 2.3,17.1 2.4,16.6 2.3,15.9 2.4,15.3 2.3,14.5 2.3,13.7 2.4,13 2.3,12.2 2.4,11.4 2.3,10.7 2.4,10 2.3,9.3 2.3,8.7 2.4,8 2.3,7.5 2.4,7 2.3,6.4 2.4,6 2.3,5.5 2.4,5.1 2.3,4.7 2.3,4.4 2.4,4 2.3,3.8 2.4,3.4 2.3,3.2 2.4,2.9 2.3,2.7 2.4,2.5 2.3,2.3 2.3,2.2 2.4,1.9 2.3,1.8 2.4,1.7 2.3,1.6 2.4,1.4 2.3,1.3 2.3,1.2 2.4,1.1 2.3,1 2.4,1 2.3,0.8 2.4,0.8 2.3,0.8 2.4,0.7 2.3,0.6 2.3,0.6 2.4,0.5 2.3,0.5 2.4,0.5 2.3,0.4 2.4,0.4 2.3,0.3 2.4,0.3 2.3,0.3 2.3,0.3 2.4,0.3 2.3,0.2 2.4,0.2 2.3,0.2 2.4,0.2 2.3,0.2 2.3,0.2 2.4,0.1 2.3,0.1 2.4,0.2 2.3,0.1 2.4,0.1 2.3,0.1 2.4,0.1 2.3,0 2.3,0.1 2.4,0.1 2.3,0 2.4,0.1 2.3,0.1 2.4,0 2.3,0.1 2.4,0 2.3,0 2.3,0.1 2.4,0 2.3,0 2.4,0.1 2.3,0 2.4,0 2.3,0 2.3,0.1 2.4,0 2.3,0 2.4,0 2.3,0 2.4,0 2.3,0.1 2.4,0 2.3,0 2.3,0 2.4,0" stroke="#ff6e31" stroke-width="1.6" fill="none"/>
<path d="M473.5,677.4l0.6,-9.3 0.6,-8.3 0.6,-7.4 0.5,-6.7 0.6,-5.9 0.6,-5.3 0.6,-4.7 0.6,-4.1 0.6,-3.6 0.6,-3.2 0.5,-2.7 0.6,-2.4 0.6,-2.1 0.6,-1.7 0.6,-1.5 0.6,-1.2 0.6,-1 0.5,-0.8 0.6,-0.6 0.6,-0.4 0.6,-9.6 0.6,-8.4 0.6,-7.5 0.6,-6.5 0.6,-5.8 0.5,-4.9 0.6,-4.4 0.6,-3.6 0.6,-3.2 0.6,-2.6 0.6,-2.2 0.6,-1.7 0.5,-1.4 0.6,-1 0.6,-0.7 0.6,-0.5 0.6,-0.2 0.6,0 0.6,0.3 0.5,0.4 0.6,-8.8 0.6,-7.6 0.6,-6.6 0.6,-5.7 0.6,-4.8 0.6,-4.2 0.5,-3.4 0.6,-2.9 0.6,-2.2 0.6,-1.8 0.6,-1.3 0.6,-0.9 0.6,-0.6 0.5,-0.2 0.6,0.1 0.6,0.4 0.6,0.6 0.6,0.8 0.6,1 0.6,1.2 0.5,-8 0.6,-6.8 0.6,-5.9 0.6,-5 0.6,-4.1 0.6,-3.4 0.6,-2.8 0.5,-2.1 0.6,-1.6 0.6,-1.1 0.6,-0.6 0.6,-0.3 0.6,0.1 0.6,0.4 0.5,0.8 0.6,0.9 0.6,1.2 0.6,1.4 0.6,1.6 0.6,1.8 0.6,-7.4 0.6,-6.3 0.5,-5.3 0.6,-4.4 0.6,-3.6 0.6,-2.9 0.6,-2.2 0.6,-1.7 0.6,-1.1 0.5,-0.6 0.6,-0.1 0.6,0.2 0.6,0.6 0.6,0.8 0.6,1.2 0.6,1.4 0.5,1.7 0.6,1.8 0.6,2 0.6,2.2 0.6,-7 0.6,-5.9 0.6,-4.9 0.5,-4 0.6,-3.3 0.6,-2.5 0.6,-1.8 0.6,-1.3 0.6,-0.7 0.6,-0.3 0.5,0.2 0.6,0.5 0.6,0.9 0.6,1.2 0.6,1.5 0.6,1.8 0.6,1.9 0.5,2.1 0.6,2.4 0.6,2.4 0.6,-6.7 0.6,-5.6 0.6,-4.6 0.6,-3.8 0.6,-2.9 0.5,-2.3 0.6,-1.6 0.6,-1 0.6,-0.5 0.6,0 0.6,0.4 0.6,0.8 0.5,1.1 0.6,1.5 0.6,1.7 0.6,2 0.6,2.1 0.6,2.4 0.6,2.5 0.5,2.7 0.6,2.8 0.6,2.9 0.6,3 0.6,3.1 0.6,3.1 0.6,3.2 0.5,3.3 0.6,3.3 0.6,3.3 0.6,3.3 2.3,13.4 2.4,13.3 2.3,12.9 2.4,12.4 2.3,11.9 2.4,11.2 2.3,10.6 2.4,10 2.3,9.4 2.3,8.8 2.4,8.3 2.3,7.7 2.4,7.2 2.3,6.7 2.4,6.3 2.3,5.9 2.3,5.4 2.4,5.2 2.3,4.7 2.4,4.5 2.3,4.1 2.4,3.9 2.3,3.6 2.4,3.4 2.3,3.2 2.3,2.9 2.4,2.7 2.3,2.6 2.4,2.4 2.3,2.2 2.4,2.1 2.3,1.9 2.4,1.8 2.3,1.7 2.3,1.6 2.4,1.5 2.3,1.3 2.4,1.3 2.3,1.2 2.4,1.1 2.3,1.1 2.3,0.9 2.4,0.9 2.3,0.9 2.4,0.8 2.3,0.7 2.4,0.7 2.3,0.6 2.4,0.6 2.3,0.6 2.3,0.5 2.4,0.5 2.3,0.4 2.4,0.4 2.3,0.4 2.4,0.4 2.3,0.3 2.4,0.4 2.3,0.3 2.3,0.2 2.4,0.3 2.3,0.2 2.4,0.3 2.3,0.2 2.4,0.2 2.3,0.2 2.3,0.1 2.4,0.2 2.3,0.1 2.4,0.2 2.3,0.1 2.4,0.1 2.3,0.1 2.4,0.1 2.3,0.1 2.3,0.1 2.4,0.1 2.3,0.1 2.4,0.1 2.3,0 2.4,0.1 2.3,0.1 2.4,0 2.3,0.1 2.3,0 2.4,0.1 2.3,0 2.4,0 2.3,0.1 2.4,0 2.3,0.1 2.3,0 2.4,0 2.3,0 2.4,0.1 2.3,0 2.4,0 2.3,0 2.4,0 2.3,0.1 2.3,0 2.4,0" stroke="#12c2e3" stroke-width="1.6" fill="none"/>
<path d="M473.5,677.4l0.6,-19.6 0.6,-16.8 0.6,-14.3 0.5,-12.1 0.6,-10.2 0.6,-8.7 0.6,-7.2 0.6,-6.1 0.6,-5.1 0.6,-4.1 0.5,-3.4 0.6,-2.8 0.6,-2.2 0.6,-1.7 0.6,-1.2 0.6,-1 0.6,-0.6 0.5,-0.3 0.6,-0.1 0.6,0 0.6,-19.4 0.6,-16.4 0.6,-13.7 0.6,-11.5 0.6,-9.6 0.5,-7.9 0.6,-6.5 0.6,-5.2 0.6,-4.1 0.6,-3.2 0.6,-2.5 0.6,-1.7 0.5,-1.2 0.6,-0.7 0.6,-0.2 0.6,0.1 0.6,0.4 0.6,0.7 0.6,0.9 0.5,1.2 0.6,-18.4 0.6,-15.3 0.6,-12.8 0.6,-10.5 0.6,-8.5 0.6,-6.9 0.5,-5.4 0.6,-4.2 0.6,-3.2 0.6,-2.2 0.6,-1.5 0.6,-0.8 0.6,-0.2 0.5,0.3 0.6,0.7 0.6,1 0.6,1.4 0.6,1.6 0.6,1.8 0.6,2 0.5,-17.5 0.6,-14.4 0.6,-11.9 0.6,-9.6 0.6,-7.7 0.6,-6.1 0.6,-4.6 0.5,-3.4 0.6,-2.3 0.6,-1.4 0.6,-0.7 0.6,0 0.6,0.6 0.6,1 0.5,1.4 0.6,1.8 0.6,2.1 0.6,2.4 0.6,2.5 0.6,2.8 0.6,-16.8 0.6,-13.8 0.5,-11.1 0.6,-9 0.6,-7 0.6,-5.4 0.6,-3.9 0.6,-2.7 0.6,-1.7 0.5,-0.8 0.6,0 0.6,0.6 0.6,1.2 0.6,1.6 0.6,2.1 0.6,2.4 0.5,2.7 0.6,2.9 0.6,3.2 0.6,3.3 0.6,-16.2 0.6,-13.2 0.6,-10.6 0.5,-8.4 0.6,-6.5 0.6,-4.8 0.6,-3.4 0.6,-2.2 0.6,-1.2 0.6,-0.3 0.5,0.5 0.6,1.1 0.6,1.7 0.6,2.2 0.6,2.5 0.6,2.9 0.6,3.2 0.5,3.4 0.6,3.6 0.6,3.8 0.6,-15.8 0.6,-12.7 0.6,-10.2 0.6,-7.9 0.6,-6.1 0.5,-4.4 0.6,-2.9 0.6,-1.8 0.6,-0.8 0.6,0.2 0.6,0.9 0.6,1.5 0.5,2.1 0.6,2.6 0.6,2.9 0.6,3.3 0.6,3.5 0.6,3.8 0.6,4 0.5,4.1 0.6,4.3 0.6,4.4 0.6,4.4 0.6,4.6 0.6,4.5 0.6,4.6 0.5,4.7 0.6,4.6 0.6,4.6 0.6,4.7 2.3,18.4 2.4,18 2.3,17.4 2.4,16.7 2.3,16.1 2.4,15.5 2.3,14.8 2.4,14.2 2.3,13.5 2.3,13 2.4,12.4 2.3,11.9 2.4,11.4 2.3,10.9 2.4,10.5 2.3,9.9 2.3,9.6 2.4,9.1 2.3,8.8 2.4,8.3 2.3,8.1 2.4,7.6 2.3,7.4 2.4,7 2.3,6.7 2.3,6.4 2.4,6.2 2.3,5.9 2.4,5.6 2.3,5.4 2.4,5.1 2.3,5 2.4,4.7 2.3,4.5 2.3,4.3 2.4,4.2 2.3,3.9 2.4,3.8 2.3,3.7 2.4,3.4 2.3,3.3 2.3,3.2 2.4,3.1 2.3,2.9 2.4,2.8 2.3,2.6 2.4,2.6 2.3,2.4 2.4,2.4 2.3,2.2 2.3,2.1 2.4,2.1 2.3,1.9 2.4,1.9 2.3,1.8 2.4,1.7 2.3,1.7 2.4,1.5 2.3,1.6 2.3,1.4 2.4,1.4 2.3,1.3 2.4,1.2 2.3,1.3 2.4,1.1 2.3,1.1 2.3,1.1 2.4,1 2.3,1 2.4,0.9 2.3,0.9 2.4,0.8 2.3,0.8 2.4,0.8 2.3,0.8 2.3,0.7 2.4,0.6 2.3,0.7 2.4,0.6 2.3,0.6 2.4,0.6 2.3,0.5 2.4,0.6 2.3,0.5 2.3,0.4 2.4,0.5 2.3,0.4 2.4,0.5 2.3,0.4 2.4,0.3 2.3,0.4 2.3,0.4 2.4,0.3 2.3,0.3 2.4,0.3 2.3,0.3 2.4,0.3 2.3,0.3 2.4,0.2 2.3,0.3 2.3,0.2 2.4,0.3" stroke="#12c2e3" stroke-width="1.6" fill="none"/>
<path d="M473.5,677.4l0.6,-5.4 0.6,-4.9 0.6,-4.5 0.5,-4 0.6,-3.7 0.6,-3.3 0.6,-3 0.6,-2.6 0.6,-2.4 0.6,-2.2 0.5,-1.8 0.6,-1.7 0.6,-1.5 0.6,-1.3 0.6,-1.1 0.6,-1 0.6,-0.8 0.5,-0.6 0.6,-0.6 0.6,-0.4 0.6,-5.8 0.6,-5.1 0.6,-4.7 0.6,-4.1 0.6,-3.6 0.5,-3.3 0.6,-2.8 0.6,-2.5 0.6,-2.2 0.6,-1.9 0.6,-1.6 0.6,-1.3 0.5,-1.1 0.6,-0.9 0.6,-0.7 0.6,-0.5 0.6,-0.3 0.6,-0.2 0.6,0 0.5,0 0.6,-5.2 0.6,-4.6 0.6,-4 0.6,-3.6 0.6,-3.1 0.6,-2.7 0.5,-2.3 0.6,-1.9 0.6,-1.6 0.6,-1.3 0.6,-1 0.6,-0.7 0.6,-0.6 0.5,-0.3 0.6,-0.1 0.6,0.1 0.6,0.2 0.6,0.4 0.6,0.5 0.6,0.6 0.5,-4.7 0.6,-4.1 0.6,-3.5 0.6,-3 0.6,-2.6 0.6,-2.2 0.6,-1.8 0.5,-1.4 0.6,-1.1 0.6,-0.8 0.6,-0.6 0.6,-0.3 0.6,0 0.6,0.1 0.5,0.3 0.6,0.5 0.6,0.7 0.6,0.8 0.6,0.9 0.6,1 0.6,-4.2 0.6,-3.7 0.5,-3.1 0.6,-2.7 0.6,-2.2 0.6,-1.8 0.6,-1.4 0.6,-1.1 0.6,-0.7 0.5,-0.5 0.6,-0.2 0.6,0 0.6,0.3 0.6,0.5 0.6,0.6 0.6,0.8 0.5,1 0.6,1.1 0.6,1.2 0.6,1.3 0.6,-4 0.6,-3.4 0.6,-2.8 0.5,-2.4 0.6,-2 0.6,-1.5 0.6,-1.2 0.6,-0.8 0.6,-0.5 0.6,-0.2 0.5,0 0.6,0.3 0.6,0.5 0.6,0.6 0.6,0.9 0.6,1 0.6,1.2 0.5,1.3 0.6,1.4 0.6,1.5 0.6,-3.7 0.6,-3.3 0.6,-2.6 0.6,-2.2 0.6,-1.8 0.5,-1.4 0.6,-1 0.6,-0.6 0.6,-0.4 0.6,0 0.6,0.2 0.6,0.4 0.5,0.6 0.6,0.9 0.6,1 0.6,1.2 0.6,1.3 0.6,1.4 0.6,1.6 0.5,1.6 0.6,1.8 0.6,1.8 0.6,1.9 0.6,2 0.6,2 0.6,2 0.5,2.1 0.6,2.2 0.6,2.1 0.6,2.2 2.3,8.9 2.4,8.9 2.3,8.7 2.4,8.4 2.3,8.1 2.4,7.8 2.3,7.2 2.4,6.9 2.3,6.4 2.3,6.1 2.4,5.6 2.3,5.2 2.4,4.9 2.3,4.5 2.4,4.2 2.3,3.9 2.3,3.6 2.4,3.3 2.3,3.1 2.4,2.9 2.3,2.6 2.4,2.5 2.3,2.3 2.4,2.1 2.3,1.9 2.3,1.8 2.4,1.7 2.3,1.5 2.4,1.4 2.3,1.4 2.4,1.2 2.3,1.1 2.4,1.1 2.3,0.9 2.3,0.9 2.4,0.8 2.3,0.8 2.4,0.7 2.3,0.7 2.4,0.6 2.3,0.5 2.3,0.5 2.4,0.5 2.3,0.5 2.4,0.4 2.3,0.3 2.4,0.4 2.3,0.3 2.4,0.3 2.3,0.3 2.3,0.3 2.4,0.2 2.3,0.2 2.4,0.2 2.3,0.2 2.4,0.2 2.3,0.1 2.4,0.2 2.3,0.1 2.3,0.1 2.4,0.2 2.3,0.1 2.4,0.1 2.3,0.1 2.4,0 2.3,0.1 2.3,0.1 2.4,0.1 2.3,0 2.4,0.1 2.3,0 2.4,0.1 2.3,0 2.4,0.1 2.3,0 2.3,0.1 2.4,0 2.3,0 2.4,0 2.3,0.1 2.4,0 2.3,0 2.4,0 2.3,0.1 2.3,0 2.4,0 2.3,0 2.4,0 2.3,0 2.4,0.1 2.3,0 2.3,0 2.4,0 2.3,0 2.4,0 2.3,0 2.4,0 2.3,0 2.4,0 2.3,0 2.3,0 2.4,0" stroke="#ff6e31" stroke-width="1.6" fill="none"/>
<path d="M473.5,677.4l0.6,-21 0.6,-17.9 0.6,-15.3 0.5,-12.9 0.6,-11 0.6,-9.2 0.6,-7.6 0.6,-6.4 0.6,-5.3 0.6,-4.2 0.5,-3.4 0.6,-2.7 0.6,-2.1 0.6,-1.4 0.6,-1.1 0.6,-0.6 0.6,-0.3 0.5,0.1 0.6,0.2 0.6,0.5 0.6,-20.3 0.6,-17.1 0.6,-14.3 0.6,-11.8 0.6,-9.8 0.5,-7.9 0.6,-6.4 0.6,-5 0.6,-3.8 0.6,-2.8 0.6,-2 0.6,-1.2 0.5,-0.5 0.6,0 0.6,0.5 0.6,0.8 0.6,1.3 0.6,1.5 0.6,1.8 0.5,1.9 0.6,-18.8 0.6,-15.7 0.6,-12.8 0.6,-10.4 0.6,-8.4 0.6,-6.5 0.5,-5 0.6,-3.7 0.6,-2.5 0.6,-1.5 0.6,-0.6 0.6,0.1 0.6,0.7 0.5,1.2 0.6,1.7 0.6,2.1 0.6,2.4 0.6,2.7 0.6,2.9 0.6,3.2 0.5,-17.8 0.6,-14.5 0.6,-11.8 0.6,-9.4 0.6,-7.3 0.6,-5.5 0.6,-4 0.5,-2.6 0.6,-1.5 0.6,-0.6 0.6,0.3 0.6,1.1 0.6,1.6 0.6,2.1 0.5,2.6 0.6,3 0.6,3.3 0.6,3.5 0.6,3.8 0.6,3.9 0.6,-16.9 0.6,-13.8 0.5,-11 0.6,-8.6 0.6,-6.5 0.6,-4.8 0.6,-3.2 0.6,-2 0.6,-0.8 0.5,0.2 0.6,1 0.6,1.7 0.6,2.3 0.6,2.8 0.6,3.2 0.6,3.6 0.5,3.9 0.6,4.2 0.6,4.3 0.6,4.6 0.6,-16.4 0.6,-13.2 0.6,-10.4 0.5,-8 0.6,-6 0.6,-4.3 0.6,-2.7 0.6,-1.4 0.6,-0.3 0.6,0.7 0.5,1.4 0.6,2.2 0.6,2.8 0.6,3.3 0.6,3.7 0.6,4 0.6,4.4 0.5,4.6 0.6,4.8 0.6,4.9 0.6,-15.9 0.6,-12.8 0.6,-10 0.6,-7.6 0.6,-5.6 0.5,-3.9 0.6,-2.3 0.6,-1.1 0.6,0.1 0.6,1 0.6,1.9 0.6,2.5 0.5,3.1 0.6,3.6 0.6,4.1 0.6,4.4 0.6,4.6 0.6,4.9 0.6,5.1 0.5,5.3 0.6,5.4 0.6,5.4 0.6,5.6 0.6,5.6 0.6,5.6 0.6,5.6 0.5,5.6 0.6,5.6 0.6,5.6 0.6,5.5 2.3,21.8 2.4,20.8 2.3,19.8 2.4,18.7 2.3,17.6 2.4,16.5 2.3,15.5 2.4,14.5 2.3,13.6 2.3,12.8 2.4,12 2.3,11.2 2.4,10.5 2.3,9.8 2.4,9.2 2.3,8.6 2.3,8.1 2.4,7.5 2.3,7.1 2.4,6.6 2.3,6.3 2.4,5.8 2.3,5.4 2.4,5.1 2.3,4.8 2.3,4.5 2.4,4.2 2.3,3.9 2.4,3.7 2.3,3.4 2.4,3.3 2.3,3 2.4,2.8 2.3,2.7 2.3,2.4 2.4,2.4 2.3,2.1 2.4,2.1 2.3,1.9 2.4,1.8 2.3,1.7 2.3,1.5 2.4,1.5 2.3,1.4 2.4,1.3 2.3,1.2 2.4,1.1 2.3,1.1 2.4,1 2.3,0.9 2.3,0.8 2.4,0.9 2.3,0.7 2.4,0.7 2.3,0.7 2.4,0.6 2.3,0.6 2.4,0.6 2.3,0.5 2.3,0.5 2.4,0.4 2.3,0.4 2.4,0.4 2.3,0.4 2.4,0.4 2.3,0.3 2.3,0.3 2.4,0.3 2.3,0.2 2.4,0.3 2.3,0.2 2.4,0.3 2.3,0.2 2.4,0.2 2.3,0.1 2.3,0.2 2.4,0.2 2.3,0.1 2.4,0.1 2.3,0.2 2.4,0.1 2.3,0.1 2.4,0.1 2.3,0.1 2.3,0.1 2.4,0.1 2.3,0.1 2.4,0.1 2.3,0 2.4,0.1 2.3,0.1 2.3,0 2.4,0.1 2.3,0 2.4,0.1 2.3,0 2.4,0.1 2.3,0 2.4,0 2.3,0.1 2.3,0 2.4,0" stroke="#12c2e3" stroke-width="1.6" fill="none"/>
<path d="M473.5,677.4l0.6,-29.3 0.6,-25 0.6,-21.2 0.5,-17.9 0.6,-15.1 0.6,-12.6 0.6,-10.4 0.6,-8.5 0.6,-6.9 0.6,-5.4 0.5,-4.2 0.6,-3.2 0.6,-2.2 0.6,-1.4 0.6,-0.7 0.6,-0.1 0.6,0.3 0.5,0.9 0.6,1.1 0.6,1.5 0.6,-27.5 0.6,-23 0.6,-19.1 0.6,-15.6 0.6,-12.7 0.5,-10 0.6,-7.9 0.6,-5.8 0.6,-4.2 0.6,-2.7 0.6,-1.5 0.6,-0.4 0.5,0.5 0.6,1.3 0.6,2 0.6,2.5 0.6,3 0.6,3.5 0.6,3.7 0.5,4 0.6,-25 0.6,-20.5 0.6,-16.7 0.6,-13.2 0.6,-10.4 0.6,-7.7 0.5,-5.6 0.6,-3.7 0.6,-2 0.6,-0.7 0.6,0.6 0.6,1.6 0.6,2.5 0.5,3.2 0.6,3.9 0.6,4.4 0.6,4.8 0.6,5.2 0.6,5.5 0.6,5.7 0.5,-23.4 0.6,-19 0.6,-15.1 0.6,-11.7 0.6,-8.8 0.6,-6.4 0.6,-4.1 0.5,-2.3 0.6,-0.7 0.6,0.7 0.6,1.9 0.6,2.8 0.6,3.7 0.6,4.5 0.5,5 0.6,5.5 0.6,6 0.6,6.2 0.6,6.6 0.6,6.7 0.6,-22.4 0.6,-17.9 0.5,-14.2 0.6,-10.7 0.6,-8 0.6,-5.4 0.6,-3.3 0.6,-1.4 0.6,0.1 0.5,1.5 0.6,2.7 0.6,3.6 0.6,4.5 0.6,5.2 0.6,5.7 0.6,6.2 0.5,6.7 0.6,6.9 0.6,7.2 0.6,7.4 0.6,-21.8 0.6,-17.4 0.6,-13.5 0.5,-10.2 0.6,-7.4 0.6,-4.8 0.6,-2.8 0.6,-0.9 0.6,0.7 0.6,2 0.5,3.1 0.6,4.1 0.6,4.9 0.6,5.7 0.6,6.2 0.6,6.6 0.6,7 0.5,7.4 0.6,7.6 0.6,7.7 0.6,-21.3 0.6,-17 0.6,-13.2 0.6,-9.9 0.6,-7 0.5,-4.5 0.6,-2.4 0.6,-0.6 0.6,0.9 0.6,2.4 0.6,3.4 0.6,4.4 0.5,5.2 0.6,5.9 0.6,6.5 0.6,6.9 0.6,7.3 0.6,7.6 0.6,7.8 0.5,8 0.6,8.1 0.6,8.3 0.6,8.2 0.6,8.3 0.6,8.3 0.6,8.2 0.5,8.2 0.6,8.1 0.6,8.1 0.6,7.9 2.3,30.6 2.4,28.6 2.3,26.4 2.4,24.2 2.3,22.1 2.4,20.2 2.3,18.3 2.4,16.7 2.3,15.1 2.3,13.7 2.4,12.5 2.3,11.3 2.4,10.2 2.3,9.3 2.4,8.4 2.3,7.7 2.3,6.9 2.4,6.3 2.3,5.7 2.4,5.1 2.3,4.7 2.4,4.2 2.3,3.9 2.4,3.5 2.3,3.1 2.3,2.9 2.4,2.6 2.3,2.4 2.4,2.1 2.3,2 2.4,1.7 2.3,1.6 2.4,1.5 2.3,1.3 2.3,1.2 2.4,1 2.3,1 2.4,0.9 2.3,0.8 2.4,0.7 2.3,0.7 2.3,0.6 2.4,0.5 2.3,0.5 2.4,0.5 2.3,0.4 2.4,0.3 2.3,0.4 2.4,0.3 2.3,0.2 2.3,0.3 2.4,0.2 2.3,0.2 2.4,0.2 2.3,0.2 2.4,0.1 2.3,0.2 2.4,0.1 2.3,0.1 2.3,0.1 2.4,0.1 2.3,0.1 2.4,0.1 2.3,0 2.4,0.1 2.3,0 2.3,0.1 2.4,0 2.3,0.1 2.4,0 2.3,0.1 2.4,0 2.3,0 2.4,0 2.3,0.1 2.3,0 2.4,0 2.3,0 2.4,0 2.3,0.1 2.4,0 2.3,0 2.4,0 2.3,0 2.3,0 2.4,0 2.3,0 2.4,0 2.3,0 2.4,0 2.3,0.1 2.3,0 2.4,0 2.3,0 2.4,0 2.3,0 2.4,0 2.3,0 2.4,0 2.3,0 2.3,0 2.4,0" stroke="#12c2e3" stroke-width="1.6" fill="none"/>
<path d="M473.5,677.4l0.6,-10.4 0.6,-9.4 0.6,-8.7 0.5,-7.8 0.6,-7.1 0.6,-6.4 0.6,-5.7 0.6,-5.2 0.6,-4.7 0.6,-4.1 0.5,-3.7 0.6,-3.2 0.6,-2.9 0.6,-2.4 0.6,-2.2 0.6,-1.8 0.6,-1.5 0.5,-1.3 0.6,-1 0.6,-0.8 0.6,-11 0.6,-9.9 0.6,-8.8 0.6,-7.9 0.6,-7 0.5,-6.2 0.6,-5.5 0.6,-4.7 0.6,-4.1 0.6,-3.5 0.6,-3 0.6,-2.5 0.5,-2 0.6,-1.5 0.6,-1.2 0.6,-0.8 0.6,-0.5 0.6,-0.2 0.6,0.1 0.5,0.3 0.6,-9.8 0.6,-8.7 0.6,-7.6 0.6,-6.7 0.6,-5.8 0.6,-5 0.5,-4.2 0.6,-3.5 0.6,-2.9 0.6,-2.3 0.6,-1.7 0.6,-1.3 0.6,-0.8 0.5,-0.3 0.6,0 0.6,0.3 0.6,0.7 0.6,1 0.6,1.2 0.6,1.5 0.5,-8.7 0.6,-7.6 0.6,-6.5 0.6,-5.6 0.6,-4.8 0.6,-3.9 0.6,-3.2 0.5,-2.5 0.6,-1.8 0.6,-1.4 0.6,-0.7 0.6,-0.3 0.6,0.1 0.6,0.6 0.5,0.9 0.6,1.2 0.6,1.6 0.6,1.8 0.6,2.1 0.6,2.3 0.6,-7.9 0.6,-6.8 0.5,-5.8 0.6,-4.8 0.6,-4 0.6,-3.2 0.6,-2.5 0.6,-1.8 0.6,-1.2 0.5,-0.6 0.6,-0.2 0.6,0.4 0.6,0.8 0.6,1.1 0.6,1.5 0.6,1.9 0.5,2.1 0.6,2.4 0.6,2.6 0.6,2.8 0.6,-7.3 0.6,-6.3 0.6,-5.3 0.5,-4.3 0.6,-3.5 0.6,-2.8 0.6,-2 0.6,-1.3 0.6,-0.8 0.6,-0.2 0.5,0.3 0.6,0.8 0.6,1.1 0.6,1.6 0.6,1.9 0.6,2.2 0.6,2.5 0.5,2.8 0.6,2.9 0.6,3.2 0.6,-7 0.6,-6 0.6,-4.9 0.6,-4.1 0.6,-3.2 0.5,-2.4 0.6,-1.7 0.6,-1.1 0.6,-0.5 0.6,0.1 0.6,0.6 0.6,1 0.5,1.4 0.6,1.8 0.6,2.2 0.6,2.4 0.6,2.8 0.6,2.9 0.6,3.2 0.5,3.4 0.6,3.6 0.6,3.7 0.6,3.9 0.6,3.9 0.6,4.1 0.6,4.2 0.5,4.2 0.6,4.3 0.6,4.4 0.6,4.3 2.3,17.7 2.4,17.7 2.3,17.2 2.4,16.6 2.3,15.8 2.4,14.9 2.3,13.9 2.4,13 2.3,12 2.3,11.1 2.4,10.3 2.3,9.5 2.4,8.6 2.3,8 2.4,7.3 2.3,6.6 2.3,6.1 2.4,5.6 2.3,5 2.4,4.7 2.3,4.2 2.4,3.8 2.3,3.5 2.4,3.2 2.3,2.9 2.3,2.7 2.4,2.4 2.3,2.2 2.4,2 2.3,1.8 2.4,1.7 2.3,1.5 2.4,1.4 2.3,1.2 2.3,1.1 2.4,1.1 2.3,0.9 2.4,0.9 2.3,0.7 2.4,0.8 2.3,0.6 2.3,0.6 2.4,0.5 2.3,0.5 2.4,0.4 2.3,0.4 2.4,0.4 2.3,0.3 2.4,0.3 2.3,0.3 2.3,0.3 2.4,0.2 2.3,0.2 2.4,0.2 2.3,0.2 2.4,0.1 2.3,0.2 2.4,0.1 2.3,0.1 2.3,0.1 2.4,0.1 2.3,0.1 2.4,0.1 2.3,0.1 2.4,0 2.3,0.1 2.3,0 2.4,0.1 2.3,0 2.4,0.1 2.3,0 2.4,0.1 2.3,0 2.4,0 2.3,0 2.3,0.1 2.4,0 2.3,0 2.4,0 2.3,0 2.4,0.1 2.3,0 2.4,0 2.3,0 2.3,0 2.4,0 2.3,0 2.4,0 2.3,0 2.4,0 2.3,0 2.3,0 2.4,0.1 2.3,0 2.4,0 2.3,0 2.4,0 2.3,0 2.4,0 2.3,0 2.3,0 2.4,0" stroke="#ff6e31" stroke-width="1.6" fill="none"/>
<path d="M473.5,677.4l0.6,-5.3 0.6,-5 0.6,-4.5 0.5,-4.2 0.6,-3.8 0.6,-3.5 0.6,-3.2 0.6,-3 0.6,-2.6 0.6,-2.4 0.5,-2.2 0.6,-1.9 0.6,-1.8 0.6,-1.5 0.6,-1.4 0.6,-1.2 0.6,-1 0.5,-0.9 0.6,-0.8 0.6,-0.6 0.6,-5.9 0.6,-5.3 0.6,-4.8 0.6,-4.4 0.6,-4 0.5,-3.5 0.6,-3.2 0.6,-2.8 0.6,-2.5 0.6,-2.1 0.6,-1.9 0.6,-1.6 0.5,-1.4 0.6,-1.1 0.6,-0.9 0.6,-0.7 0.6,-0.5 0.6,-0.4 0.6,-0.2 0.5,0 0.6,-5.2 0.6,-4.7 0.6,-4.2 0.6,-3.7 0.6,-3.3 0.6,-2.9 0.5,-2.5 0.6,-2.1 0.6,-1.7 0.6,-1.5 0.6,-1.2 0.6,-0.9 0.6,-0.6 0.5,-0.5 0.6,-0.2 0.6,0 0.6,0.2 0.6,0.4 0.6,0.5 0.6,0.6 0.5,-4.5 0.6,-4.1 0.6,-3.5 0.6,-3 0.6,-2.7 0.6,-2.2 0.6,-1.8 0.5,-1.5 0.6,-1.2 0.6,-0.8 0.6,-0.6 0.6,-0.3 0.6,-0.1 0.6,0.2 0.5,0.3 0.6,0.6 0.6,0.7 0.6,0.9 0.6,1 0.6,1.2 0.6,-4.1 0.6,-3.5 0.5,-3 0.6,-2.6 0.6,-2.2 0.6,-1.7 0.6,-1.4 0.6,-1.1 0.6,-0.7 0.5,-0.4 0.6,-0.2 0.6,0.1 0.6,0.3 0.6,0.6 0.6,0.7 0.6,0.9 0.5,1.1 0.6,1.2 0.6,1.4 0.6,1.5 0.6,-3.7 0.6,-3.2 0.6,-2.7 0.5,-2.3 0.6,-1.9 0.6,-1.4 0.6,-1.1 0.6,-0.8 0.6,-0.5 0.6,-0.1 0.5,0.1 0.6,0.3 0.6,0.6 0.6,0.8 0.6,0.9 0.6,1.2 0.6,1.3 0.5,1.5 0.6,1.5 0.6,1.8 0.6,-3.6 0.6,-3 0.6,-2.5 0.6,-2.1 0.6,-1.7 0.5,-1.3 0.6,-0.9 0.6,-0.6 0.6,-0.3 0.6,0 0.6,0.3 0.6,0.5 0.5,0.7 0.6,0.9 0.6,1.1 0.6,1.3 0.6,1.5 0.6,1.6 0.6,1.7 0.5,1.8 0.6,2 0.6,2 0.6,2.1 0.6,2.2 0.6,2.3 0.6,2.3 0.5,2.4 0.6,2.4 0.6,2.5 0.6,2.5 2.3,10.1 2.4,10.3 2.3,10.1 2.4,9.9 2.3,9.4 2.4,9 2.3,8.4 2.4,7.8 2.3,7.4 2.3,6.7 2.4,6.3 2.3,5.7 2.4,5.2 2.3,4.8 2.4,4.4 2.3,4 2.3,3.6 2.4,3.2 2.3,3 2.4,2.6 2.3,2.4 2.4,2.2 2.3,2 2.4,1.7 2.3,1.6 2.3,1.4 2.4,1.3 2.3,1.2 2.4,1 2.3,0.9 2.4,0.9 2.3,0.7 2.4,0.7 2.3,0.6 2.3,0.5 2.4,0.5 2.3,0.4 2.4,0.4 2.3,0.4 2.4,0.3 2.3,0.3 2.3,0.2 2.4,0.2 2.3,0.2 2.4,0.2 2.3,0.2 2.4,0.1 2.3,0.1 2.4,0.1 2.3,0.1 2.3,0.1 2.4,0.1 2.3,0.1 2.4,0.1 2.3,0 2.4,0.1 2.3,0 2.4,0 2.3,0.1 2.3,0 2.4,0 2.3,0.1 2.4,0 2.3,0 2.4,0 2.3,0.1 2.3,0 2.4,0 2.3,0 2.4,0 2.3,0 2.4,0 2.3,0 2.4,0 2.3,0 2.3,0.1 2.4,0 2.3,0 2.4,0 2.3,0 2.4,0 2.3,0 2.4,0 2.3,0 2.3,0 2.4,0 2.3,0 2.4,0 2.3,0 2.4,0 2.3,0 2.3,0 2.4,0 2.3,0 2.4,0 2.3,0 2.4,0 2.3,0 2.4,0 2.3,0 2.3,0 2.4,0" stroke="#ff6e31" stroke-width="1.6" fill="none"/>
<path d="M473.5,677.4l0.6,-9.8 0.6,-9 0.6,-8.3 0.5,-7.4 0.6,-6.8 0.6,-6.2 0.6,-5.5 0.6,-5 0.6,-4.5 0.6,-4 0.5,-3.5 0.6,-3.2 0.6,-2.7 0.6,-2.4 0.6,-2.1 0.6,-1.7 0.6,-1.5 0.5,-1.2 0.6,-1 0.6,-0.7 0.6,-10.4 0.6,-9.3 0.6,-8.4 0.6,-7.5 0.6,-6.7 0.5,-5.8 0.6,-5.2 0.6,-4.5 0.6,-3.9 0.6,-3.3 0.6,-2.7 0.6,-2.3 0.5,-1.8 0.6,-1.5 0.6,-1 0.6,-0.7 0.6,-0.3 0.6,-0.1 0.6,0.3 0.5,0.4 0.6,-9.1 0.6,-8.1 0.6,-7.1 0.6,-6.2 0.6,-5.4 0.6,-4.6 0.5,-3.8 0.6,-3.2 0.6,-2.6 0.6,-2 0.6,-1.5 0.6,-1 0.6,-0.6 0.5,-0.1 0.6,0.2 0.6,0.5 0.6,0.9 0.6,1.2 0.6,1.4 0.6,1.6 0.5,-8 0.6,-6.9 0.6,-6 0.6,-5.1 0.6,-4.3 0.6,-3.5 0.6,-2.8 0.5,-2.2 0.6,-1.5 0.6,-1.1 0.6,-0.5 0.6,0 0.6,0.3 0.6,0.8 0.5,1.1 0.6,1.5 0.6,1.7 0.6,2 0.6,2.2 0.6,2.5 0.6,-7.2 0.6,-6.2 0.5,-5.3 0.6,-4.3 0.6,-3.6 0.6,-2.8 0.6,-2.1 0.6,-1.5 0.6,-1 0.5,-0.3 0.6,0.1 0.6,0.5 0.6,1 0.6,1.3 0.6,1.7 0.6,2 0.5,2.2 0.6,2.5 0.6,2.8 0.6,2.9 0.6,-6.7 0.6,-5.7 0.6,-4.8 0.5,-3.9 0.6,-3.2 0.6,-2.4 0.6,-1.7 0.6,-1.1 0.6,-0.5 0.6,0 0.5,0.5 0.6,0.9 0.6,1.3 0.6,1.6 0.6,2 0.6,2.3 0.6,2.6 0.5,2.8 0.6,3.1 0.6,3.2 0.6,-6.4 0.6,-5.5 0.6,-4.5 0.6,-3.7 0.6,-2.9 0.5,-2.1 0.6,-1.5 0.6,-0.9 0.6,-0.3 0.6,0.2 0.6,0.7 0.6,1.1 0.5,1.5 0.6,1.9 0.6,2.2 0.6,2.4 0.6,2.8 0.6,3 0.6,3.2 0.5,3.4 0.6,3.5 0.6,3.7 0.6,3.9 0.6,3.9 0.6,4.1 0.6,4.1 0.5,4.2 0.6,4.2 0.6,4.3 0.6,4.4 2.3,17.4 2.4,17.3 2.3,16.8 2.4,16 2.3,15.2 2.4,14.2 2.3,13.1 2.4,12.1 2.3,11.1 2.3,10.1 2.4,9.2 2.3,8.4 2.4,7.5 2.3,6.9 2.4,6.1 2.3,5.5 2.3,4.9 2.4,4.5 2.3,3.9 2.4,3.6 2.3,3.2 2.4,2.8 2.3,2.5 2.4,2.3 2.3,2 2.3,1.7 2.4,1.6 2.3,1.4 2.4,1.3 2.3,1.1 2.4,1 2.3,0.9 2.4,0.8 2.3,0.7 2.3,0.6 2.4,0.6 2.3,0.4 2.4,0.5 2.3,0.4 2.4,0.3 2.3,0.3 2.3,0.3 2.4,0.2 2.3,0.2 2.4,0.2 2.3,0.2 2.4,0.1 2.3,0.2 2.4,0.1 2.3,0.1 2.3,0.1 2.4,0.1 2.3,0 2.4,0.1 2.3,0.1 2.4,0 2.3,0 2.4,0.1 2.3,0 2.3,0.1 2.4,0 2.3,0 2.4,0 2.3,0 2.4,0.1 2.3,0 2.3,0 2.4,0 2.3,0 2.4,0 2.3,0 2.4,0 2.3,0 2.4,0.1 2.3,0 2.3,0 2.4,0 2.3,0 2.4,0 2.3,0 2.4,0 2.3,0 2.4,0 2.3,0 2.3,0 2.4,0 2.3,0 2.4,0 2.3,0 2.4,0 2.3,0 2.3,0 2.4,0 2.3,0 2.4,0 2.3,0 2.4,0 2.3,0 2.4,0 2.3,0 2.3,0 2.4,0" stroke="#ff6e31" stroke-width="1.6" fill="none"/>
<path d="M473.5,677.4l0.6,-14.1 0.6,-13 0.6,-11.9 0.5,-10.9 0.6,-10 0.6,-9.1 0.6,-8.2 0.6,-7.5 0.6,-6.8 0.6,-6.1 0.5,-5.4 0.6,-4.9 0.6,-4.3 0.6,-3.8 0.6,-3.3 0.6,-2.9 0.6,-2.5 0.5,-2.1 0.6,-1.7 0.6,-1.4 0.6,-15.3 0.6,-13.8 0.6,-12.4 0.6,-11.3 0.6,-10 0.5,-9 0.6,-7.9 0.6,-7 0.6,-6.2 0.6,-5.3 0.6,-4.5 0.6,-3.8 0.5,-3.2 0.6,-2.6 0.6,-2 0.6,-1.4 0.6,-1 0.6,-0.6 0.6,-0.1 0.5,0.3 0.6,-13.6 0.6,-12 0.6,-10.7 0.6,-9.5 0.6,-8.2 0.6,-7.1 0.5,-6.1 0.6,-5.2 0.6,-4.2 0.6,-3.5 0.6,-2.7 0.6,-1.9 0.6,-1.3 0.5,-0.8 0.6,-0.1 0.6,0.3 0.6,0.9 0.6,1.2 0.6,1.7 0.6,2 0.5,-11.8 0.6,-10.4 0.6,-9 0.6,-7.7 0.6,-6.6 0.6,-5.5 0.6,-4.5 0.5,-3.6 0.6,-2.7 0.6,-1.9 0.6,-1.1 0.6,-0.5 0.6,0.1 0.6,0.7 0.5,1.3 0.6,1.7 0.6,2.2 0.6,2.5 0.6,3 0.6,3.3 0.6,-10.6 0.6,-9.1 0.5,-7.8 0.6,-6.6 0.6,-5.4 0.6,-4.4 0.6,-3.4 0.6,-2.5 0.6,-1.6 0.5,-0.9 0.6,-0.2 0.6,0.5 0.6,1.1 0.6,1.6 0.6,2.2 0.6,2.6 0.5,3 0.6,3.5 0.6,3.8 0.6,4 0.6,-9.7 0.6,-8.4 0.6,-7 0.5,-5.9 0.6,-4.7 0.6,-3.7 0.6,-2.7 0.6,-1.8 0.6,-1 0.6,-0.3 0.5,0.5 0.6,1.1 0.6,1.7 0.6,2.2 0.6,2.7 0.6,3.1 0.6,3.6 0.5,4 0.6,4.2 0.6,4.6 0.6,-9.3 0.6,-7.8 0.6,-6.6 0.6,-5.4 0.6,-4.3 0.5,-3.3 0.6,-2.3 0.6,-1.5 0.6,-0.6 0.6,0.1 0.6,0.9 0.6,1.4 0.5,2 0.6,2.6 0.6,3 0.6,3.5 0.6,3.9 0.6,4.2 0.6,4.6 0.5,4.9 0.6,5.1 0.6,5.4 0.6,5.5 0.6,5.8 0.6,5.9 0.6,6.1 0.5,6.1 0.6,6.3 0.6,6.4 0.6,6.4 2.3,26.1 2.4,26.2 2.3,25.6 2.4,24.7 2.3,23.6 2.4,22.2 2.3,20.8 2.4,19.3 2.3,17.9 2.3,16.4 2.4,15 2.3,13.8 2.4,12.5 2.3,11.4 2.4,10.3 2.3,9.3 2.3,8.5 2.4,7.6 2.3,6.8 2.4,6.2 2.3,5.5 2.4,5 2.3,4.5 2.4,4 2.3,3.6 2.3,3.2 2.4,2.9 2.3,2.5 2.4,2.4 2.3,2 2.4,1.9 2.3,1.6 2.4,1.5 2.3,1.3 2.3,1.2 2.4,1 2.3,1 2.4,0.8 2.3,0.7 2.4,0.7 2.3,0.6 2.3,0.5 2.4,0.5 2.3,0.4 2.4,0.4 2.3,0.3 2.4,0.3 2.3,0.3 2.4,0.2 2.3,0.3 2.3,0.1 2.4,0.2 2.3,0.2 2.4,0.1 2.3,0.1 2.4,0.1 2.3,0.1 2.4,0.1 2.3,0.1 2.3,0 2.4,0.1 2.3,0.1 2.4,0 2.3,0.1 2.4,0 2.3,0 2.3,0.1 2.4,0 2.3,0 2.4,0 2.3,0 2.4,0.1 2.3,0 2.4,0 2.3,0 2.3,0 2.4,0 2.3,0 2.4,0 2.3,0 2.4,0.1 2.3,0 2.4,0 2.3,0 2.3,0 2.4,0 2.3,0 2.4,0 2.3,0 2.4,0 2.3,0 2.3,0 2.4,0 2.3,0 2.4,0 2.3,0 2.4,0 2.3,0 2.4,0 2.3,0 2.3,0 2.4,0" stroke="#ff6e31" stroke-width="1.6" fill="none"/>
<path d="M473.5,677.4l0.6,-7.4 0.6,-6.9 0.6,-6.2 0.5,-5.7 0.6,-5.1 0.6,-4.7 0.6,-4.3 0.6,-3.8 0.6,-3.5 0.6,-3.1 0.5,-2.8 0.6,-2.4 0.6,-2.2 0.6,-2 0.6,-1.6 0.6,-1.5 0.6,-1.3 0.5,-1 0.6,-0.9 0.6,-0.7 0.6,-8 0.6,-7.3 0.6,-6.5 0.6,-5.8 0.6,-5.3 0.5,-4.6 0.6,-4.2 0.6,-3.6 0.6,-3.2 0.6,-2.8 0.6,-2.3 0.6,-2 0.5,-1.7 0.6,-1.3 0.6,-1.1 0.6,-0.8 0.6,-0.6 0.6,-0.3 0.6,-0.2 0.5,0.1 0.6,-7.3 0.6,-6.4 0.6,-5.7 0.6,-5 0.6,-4.4 0.6,-3.9 0.5,-3.2 0.6,-2.8 0.6,-2.3 0.6,-1.9 0.6,-1.5 0.6,-1.2 0.6,-0.8 0.5,-0.5 0.6,-0.2 0.6,0.1 0.6,0.2 0.6,0.5 0.6,0.7 0.6,0.9 0.5,-6.4 0.6,-5.6 0.6,-5 0.6,-4.2 0.6,-3.6 0.6,-3.1 0.6,-2.5 0.5,-2 0.6,-1.6 0.6,-1.1 0.6,-0.8 0.6,-0.4 0.6,-0.2 0.6,0.2 0.5,0.5 0.6,0.7 0.6,0.9 0.6,1.2 0.6,1.3 0.6,1.5 0.6,-5.8 0.6,-5 0.5,-4.4 0.6,-3.6 0.6,-3.1 0.6,-2.4 0.6,-2 0.6,-1.5 0.6,-1 0.5,-0.7 0.6,-0.3 0.6,0.1 0.6,0.4 0.6,0.7 0.6,0.9 0.6,1.2 0.5,1.3 0.6,1.6 0.6,1.8 0.6,1.9 0.6,-5.4 0.6,-4.6 0.6,-3.9 0.5,-3.3 0.6,-2.6 0.6,-2.1 0.6,-1.6 0.6,-1.2 0.6,-0.7 0.6,-0.3 0.5,0.1 0.6,0.4 0.6,0.7 0.6,1 0.6,1.3 0.6,1.4 0.6,1.7 0.5,1.9 0.6,2.1 0.6,2.2 0.6,-5.2 0.6,-4.3 0.6,-3.7 0.6,-3 0.6,-2.4 0.5,-1.8 0.6,-1.4 0.6,-0.9 0.6,-0.4 0.6,-0.1 0.6,0.3 0.6,0.6 0.5,1 0.6,1.2 0.6,1.4 0.6,1.7 0.6,1.9 0.6,2 0.6,2.3 0.5,2.4 0.6,2.5 0.6,2.6 0.6,2.8 0.6,2.8 0.6,2.9 0.6,3 0.5,3.1 0.6,3.1 0.6,3.2 0.6,3.1 2.3,13 2.4,13.1 2.3,12.8 2.4,12.5 2.3,11.9 2.4,11.4 2.3,10.7 2.4,10.1 2.3,9.4 2.3,8.8 2.4,8.1 2.3,7.6 2.4,7 2.3,6.4 2.4,6 2.3,5.4 2.3,5.1 2.4,4.6 2.3,4.3 2.4,3.9 2.3,3.6 2.4,3.3 2.3,3.1 2.4,2.8 2.3,2.5 2.3,2.4 2.4,2.1 2.3,2 2.4,1.8 2.3,1.7 2.4,1.5 2.3,1.4 2.4,1.3 2.3,1.1 2.3,1.1 2.4,1 2.3,0.9 2.4,0.8 2.3,0.8 2.4,0.7 2.3,0.6 2.3,0.6 2.4,0.5 2.3,0.5 2.4,0.5 2.3,0.4 2.4,0.4 2.3,0.3 2.4,0.3 2.3,0.3 2.3,0.3 2.4,0.2 2.3,0.2 2.4,0.3 2.3,0.1 2.4,0.2 2.3,0.2 2.4,0.1 2.3,0.1 2.3,0.2 2.4,0.1 2.3,0.1 2.4,0.1 2.3,0.1 2.4,0 2.3,0.1 2.3,0.1 2.4,0 2.3,0.1 2.4,0 2.3,0.1 2.4,0 2.3,0.1 2.4,0 2.3,0 2.3,0.1 2.4,0 2.3,0 2.4,0 2.3,0.1 2.4,0 2.3,0 2.4,0 2.3,0 2.3,0 2.4,0.1 2.3,0 2.4,0 2.3,0 2.4,0 2.3,0 2.3,0 2.4,0 2.3,0 2.4,0 2.3,0 2.4,0 2.3,0.1 2.4,0 2.3,0 2.3,0 2.4,0" stroke="#ff6e31" stroke-width="1.6" fill="none"/>
<path d="M473.5,677.4l0.6,-22.2 0.6,-19.6 0.6,-17.3 0.5,-15.1 0.6,-13.3 0.6,-11.6 0.6,-10 0.6,-8.6 0.6,-7.5 0.6,-6.3 0.5,-5.3 0.6,-4.4 0.6,-3.7 0.6,-2.9 0.6,-2.3 0.6,-1.7 0.6,-1.2 0.5,-0.8 0.6,-0.4 0.6,0 0.6,-22 0.6,-19 0.6,-16.5 0.6,-14.1 0.6,-12.1 0.5,-10.1 0.6,-8.6 0.6,-7 0.6,-5.7 0.6,-4.5 0.6,-3.4 0.6,-2.4 0.5,-1.7 0.6,-0.8 0.6,-0.3 0.6,0.4 0.6,0.9 0.6,1.4 0.6,1.8 0.5,2.1 0.6,-19.8 0.6,-16.9 0.6,-14.3 0.6,-12.1 0.6,-9.9 0.6,-8.1 0.5,-6.5 0.6,-5 0.6,-3.7 0.6,-2.5 0.6,-1.4 0.6,-0.6 0.6,0.3 0.5,1 0.6,1.6 0.6,2.2 0.6,2.7 0.6,3.1 0.6,3.5 0.6,3.9 0.5,-18.2 0.6,-15.2 0.6,-12.8 0.6,-10.4 0.6,-8.4 0.6,-6.6 0.6,-5 0.5,-3.5 0.6,-2.3 0.6,-1.1 0.6,0 0.6,0.8 0.6,1.6 0.6,2.3 0.5,2.9 0.6,3.4 0.6,3.9 0.6,4.4 0.6,4.6 0.6,5 0.6,-17 0.6,-14.2 0.5,-11.6 0.6,-9.4 0.6,-7.4 0.6,-5.5 0.6,-4 0.6,-2.6 0.6,-1.3 0.5,-0.1 0.6,0.8 0.6,1.7 0.6,2.5 0.6,3.2 0.6,3.7 0.6,4.3 0.5,4.7 0.6,5.1 0.6,5.5 0.6,5.7 0.6,-16.2 0.6,-13.5 0.6,-10.9 0.5,-8.7 0.6,-6.7 0.6,-4.9 0.6,-3.3 0.6,-1.9 0.6,-0.7 0.6,0.5 0.5,1.4 0.6,2.3 0.6,3.1 0.6,3.7 0.6,4.3 0.6,4.9 0.6,5.2 0.5,5.6 0.6,6 0.6,6.2 0.6,-15.7 0.6,-13 0.6,-10.4 0.6,-8.3 0.6,-6.2 0.5,-4.5 0.6,-2.9 0.6,-1.4 0.6,-0.3 0.6,0.9 0.6,1.8 0.6,2.7 0.5,3.5 0.6,4.1 0.6,4.6 0.6,5.2 0.6,5.6 0.6,6 0.6,6.3 0.5,6.5 0.6,6.8 0.6,7 0.6,7.1 0.6,7.2 0.6,7.4 0.6,7.3 0.5,7.5 0.6,7.4 0.6,7.5 0.6,7.4 2.3,29.4 2.4,28.4 2.3,27 2.4,25.5 2.3,23.7 2.4,22.2 2.3,20.5 2.4,19 2.3,17.6 2.3,16.1 2.4,15 2.3,13.7 2.4,12.6 2.3,11.7 2.4,10.7 2.3,9.8 2.3,9.1 2.4,8.3 2.3,7.7 2.4,7 2.3,6.5 2.4,5.9 2.3,5.5 2.4,5 2.3,4.6 2.3,4.3 2.4,3.9 2.3,3.6 2.4,3.3 2.3,3.1 2.4,2.7 2.3,2.6 2.4,2.4 2.3,2.1 2.3,2 2.4,1.9 2.3,1.7 2.4,1.5 2.3,1.4 2.4,1.4 2.3,1.2 2.3,1.1 2.4,1 2.3,0.9 2.4,0.9 2.3,0.8 2.4,0.7 2.3,0.7 2.4,0.6 2.3,0.6 2.3,0.5 2.4,0.4 2.3,0.5 2.4,0.4 2.3,0.4 2.4,0.3 2.3,0.3 2.4,0.3 2.3,0.3 2.3,0.2 2.4,0.2 2.3,0.2 2.4,0.2 2.3,0.2 2.4,0.2 2.3,0.1 2.3,0.2 2.4,0.1 2.3,0.1 2.4,0.1 2.3,0.1 2.4,0.1 2.3,0.1 2.4,0 2.3,0.1 2.3,0.1 2.4,0 2.3,0.1 2.4,0 2.3,0.1 2.4,0 2.3,0.1 2.4,0 2.3,0 2.3,0.1 2.4,0 2.3,0 2.4,0 2.3,0.1 2.4,0 2.3,0 2.3,0 2.4,0 2.3,0 2.4,0.1 2.3,0 2.4,0 2.3,0 2.4,0 2.3,0 2.3,0 2.4,0" stroke="#12c2e3" stroke-width="1.6" fill="none"/>
<path d="M473.5,677.4l0.6,-9.9 0.6,-9.1 0.6,-8.3 0.5,-7.7 0.6,-6.9 0.6,-6.3 0.6,-5.7 0.6,-5.2 0.6,-4.7 0.6,-4.2 0.5,-3.8 0.6,-3.3 0.6,-3 0.6,-2.6 0.6,-2.3 0.6,-2 0.6,-1.7 0.5,-1.4 0.6,-1.2 0.6,-1 0.6,-10.7 0.6,-9.7 0.6,-8.7 0.6,-7.8 0.6,-7 0.5,-6.3 0.6,-5.5 0.6,-4.9 0.6,-4.3 0.6,-3.7 0.6,-3.1 0.6,-2.7 0.5,-2.2 0.6,-1.8 0.6,-1.5 0.6,-1 0.6,-0.7 0.6,-0.5 0.6,-0.1 0.5,0.1 0.6,-9.5 0.6,-8.6 0.6,-7.5 0.6,-6.7 0.6,-5.8 0.6,-5 0.5,-4.4 0.6,-3.6 0.6,-3 0.6,-2.5 0.6,-1.9 0.6,-1.5 0.6,-1 0.5,-0.6 0.6,-0.2 0.6,0.2 0.6,0.4 0.6,0.8 0.6,1.1 0.6,1.3 0.5,-8.5 0.6,-7.3 0.6,-6.5 0.6,-5.5 0.6,-4.7 0.6,-4 0.6,-3.2 0.5,-2.6 0.6,-2 0.6,-1.5 0.6,-0.9 0.6,-0.5 0.6,0 0.6,0.4 0.5,0.8 0.6,1 0.6,1.4 0.6,1.7 0.6,1.9 0.6,2.2 0.6,-7.6 0.6,-6.6 0.5,-5.6 0.6,-4.7 0.6,-3.9 0.6,-3.2 0.6,-2.5 0.6,-1.9 0.6,-1.3 0.5,-0.7 0.6,-0.2 0.6,0.2 0.6,0.6 0.6,1 0.6,1.4 0.6,1.7 0.5,2 0.6,2.3 0.6,2.5 0.6,2.7 0.6,-7 0.6,-6 0.6,-5.1 0.5,-4.2 0.6,-3.4 0.6,-2.7 0.6,-2 0.6,-1.4 0.6,-0.8 0.6,-0.3 0.5,0.2 0.6,0.7 0.6,1 0.6,1.5 0.6,1.8 0.6,2.1 0.6,2.3 0.5,2.7 0.6,2.9 0.6,3 0.6,-6.6 0.6,-5.7 0.6,-4.7 0.6,-3.9 0.6,-3.1 0.5,-2.4 0.6,-1.7 0.6,-1.1 0.6,-0.5 0.6,0 0.6,0.5 0.6,0.9 0.5,1.3 0.6,1.7 0.6,2.1 0.6,2.3 0.6,2.7 0.6,2.8 0.6,3.1 0.5,3.3 0.6,3.5 0.6,3.7 0.6,3.8 0.6,3.9 0.6,4 0.6,4.2 0.5,4.2 0.6,4.2 0.6,4.4 0.6,4.4 2.3,17.8 2.4,17.9 2.3,17.6 2.4,17 2.3,16.2 2.4,15.4 2.3,14.5 2.4,13.5 2.3,12.5 2.3,11.7 2.4,10.7 2.3,9.9 2.4,9 2.3,8.3 2.4,7.6 2.3,7 2.3,6.3 2.4,5.8 2.3,5.2 2.4,4.8 2.3,4.3 2.4,4 2.3,3.6 2.4,3.2 2.3,3 2.3,2.7 2.4,2.4 2.3,2.2 2.4,2 2.3,1.8 2.4,1.7 2.3,1.5 2.4,1.3 2.3,1.2 2.3,1.1 2.4,1.1 2.3,0.9 2.4,0.8 2.3,0.7 2.4,0.7 2.3,0.6 2.3,0.6 2.4,0.5 2.3,0.4 2.4,0.4 2.3,0.4 2.4,0.4 2.3,0.3 2.4,0.2 2.3,0.3 2.3,0.2 2.4,0.2 2.3,0.2 2.4,0.2 2.3,0.1 2.4,0.2 2.3,0.1 2.4,0.1 2.3,0.1 2.3,0.1 2.4,0.1 2.3,0.1 2.4,0 2.3,0.1 2.4,0.1 2.3,0 2.3,0.1 2.4,0 2.3,0 2.4,0.1 2.3,0 2.4,0 2.3,0.1 2.4,0 2.3,0 2.3,0 2.4,0 2.3,0.1 2.4,0 2.3,0 2.4,0 2.3,0 2.4,0 2.3,0 2.3,0 2.4,0 2.3,0 2.4,0 2.3,0 2.4,0.1 2.3,0 2.3,0 2.4,0 2.3,0 2.4,0 2.3,0 2.4,0 2.3,0 2.4,0 2.3,0 2.3,0 2.4,0" stroke="#12c2e3" stroke-width="1.6" fill="none"/>
<path d="M473.5,677.4l0.6,-15.2 0.6,-13.7 0.6,-12.3 0.5,-11 0.6,-9.8 0.6,-8.8 0.6,-7.7 0.6,-6.9 0.6,-6.1 0.6,-5.3 0.5,-4.6 0.6,-4 0.6,-3.5 0.6,-2.9 0.6,-2.4 0.6,-2.1 0.6,-1.6 0.5,-1.3 0.6,-1 0.6,-0.6 0.6,-15.6 0.6,-13.9 0.6,-12.2 0.6,-10.8 0.6,-9.4 0.5,-8.2 0.6,-7.1 0.6,-6.1 0.6,-5.1 0.6,-4.3 0.6,-3.5 0.6,-2.8 0.5,-2.1 0.6,-1.6 0.6,-1.1 0.6,-0.6 0.6,-0.2 0.6,0.2 0.6,0.5 0.5,0.9 0.6,-14.1 0.6,-12.3 0.6,-10.6 0.6,-9.2 0.6,-7.9 0.6,-6.6 0.5,-5.5 0.6,-4.5 0.6,-3.6 0.6,-2.7 0.6,-2 0.6,-1.3 0.6,-0.6 0.5,-0.1 0.6,0.4 0.6,0.8 0.6,1.3 0.6,1.6 0.6,2 0.6,2.2 0.5,-12.7 0.6,-10.9 0.6,-9.4 0.6,-7.9 0.6,-6.5 0.6,-5.4 0.6,-4.2 0.5,-3.3 0.6,-2.4 0.6,-1.5 0.6,-0.8 0.6,-0.2 0.6,0.5 0.6,1 0.5,1.5 0.6,1.9 0.6,2.3 0.6,2.7 0.6,2.9 0.6,3.3 0.6,-11.7 0.6,-10 0.5,-8.4 0.6,-7 0.6,-5.7 0.6,-4.4 0.6,-3.4 0.6,-2.4 0.6,-1.5 0.5,-0.8 0.6,0 0.6,0.7 0.6,1.2 0.6,1.8 0.6,2.2 0.6,2.6 0.5,3.1 0.6,3.3 0.6,3.7 0.6,3.9 0.6,-11.1 0.6,-9.3 0.6,-7.8 0.5,-6.3 0.6,-5.1 0.6,-3.9 0.6,-2.8 0.6,-1.8 0.6,-1 0.6,-0.1 0.5,0.5 0.6,1.2 0.6,1.7 0.6,2.3 0.6,2.7 0.6,3.2 0.6,3.5 0.5,3.8 0.6,4.1 0.6,4.4 0.6,-10.7 0.6,-8.9 0.6,-7.3 0.6,-5.9 0.6,-4.7 0.5,-3.5 0.6,-2.4 0.6,-1.4 0.6,-0.6 0.6,0.2 0.6,0.9 0.6,1.5 0.5,2.1 0.6,2.6 0.6,3.1 0.6,3.4 0.6,3.9 0.6,4.1 0.6,4.4 0.5,4.7 0.6,4.8 0.6,5.1 0.6,5.2 0.6,5.4 0.6,5.4 0.6,5.6 0.5,5.6 0.6,5.7 0.6,5.7 0.6,5.7 2.3,23.1 2.4,22.7 2.3,22.1 2.4,21 2.3,19.9 2.4,18.8 2.3,17.6 2.4,16.4 2.3,15.2 2.3,14.2 2.4,13.1 2.3,12.1 2.4,11.3 2.3,10.3 2.4,9.6 2.3,8.8 2.3,8.2 2.4,7.5 2.3,7 2.4,6.4 2.3,5.9 2.4,5.4 2.3,5 2.4,4.6 2.3,4.3 2.3,3.9 2.4,3.6 2.3,3.3 2.4,3.1 2.3,2.8 2.4,2.7 2.3,2.4 2.4,2.2 2.3,2 2.3,1.9 2.4,1.7 2.3,1.6 2.4,1.5 2.3,1.4 2.4,1.2 2.3,1.2 2.3,1 2.4,1 2.3,0.9 2.4,0.8 2.3,0.8 2.4,0.7 2.3,0.7 2.4,0.6 2.3,0.5 2.3,0.5 2.4,0.5 2.3,0.4 2.4,0.4 2.3,0.4 2.4,0.3 2.3,0.3 2.4,0.3 2.3,0.3 2.3,0.2 2.4,0.3 2.3,0.2 2.4,0.2 2.3,0.1 2.4,0.2 2.3,0.1 2.3,0.2 2.4,0.1 2.3,0.1 2.4,0.1 2.3,0.1 2.4,0.1 2.3,0.1 2.4,0.1 2.3,0.1 2.3,0 2.4,0.1 2.3,0 2.4,0.1 2.3,0 2.4,0.1 2.3,0 2.4,0.1 2.3,0 2.3,0 2.4,0.1 2.3,0 2.4,0 2.3,0 2.4,0.1 2.3,0 2.3,0 2.4,0 2.3,0 2.4,0 2.3,0 2.4,0.1 2.3,0 2.4,0 2.3,0 2.3,0 2.4,0" stroke="#ff6e31" stroke-width="1.6" fill="none"/>
<path d="M473.5,677.4l0.6,-11.4 0.6,-10.2 0.6,-9.2 0.5,-8.1 0.6,-7.3 0.6,-6.5 0.6,-5.8 0.6,-5.1 0.6,-4.5 0.6,-4 0.5,-3.4 0.6,-3.1 0.6,-2.6 0.6,-2.2 0.6,-2 0.6,-1.6 0.6,-1.4 0.5,-1.1 0.6,-0.9 0.6,-0.7 0.6,-11.9 0.6,-10.6 0.6,-9.4 0.6,-8.2 0.6,-7.3 0.5,-6.4 0.6,-5.5 0.6,-4.8 0.6,-4.1 0.6,-3.5 0.6,-3 0.6,-2.4 0.5,-2.1 0.6,-1.6 0.6,-1.2 0.6,-0.9 0.6,-0.6 0.6,-0.4 0.6,-0.1 0.5,0.1 0.6,-11.1 0.6,-9.7 0.6,-8.5 0.6,-7.4 0.6,-6.4 0.6,-5.5 0.5,-4.7 0.6,-3.9 0.6,-3.2 0.6,-2.7 0.6,-2 0.6,-1.6 0.6,-1.2 0.5,-0.7 0.6,-0.4 0.6,-0.1 0.6,0.3 0.6,0.5 0.6,0.7 0.6,0.9 0.5,-10.2 0.6,-9 0.6,-7.7 0.6,-6.6 0.6,-5.6 0.6,-4.7 0.6,-3.9 0.5,-3.1 0.6,-2.5 0.6,-1.9 0.6,-1.3 0.6,-0.9 0.6,-0.4 0.6,0 0.5,0.3 0.6,0.7 0.6,0.9 0.6,1.2 0.6,1.4 0.6,1.6 0.6,-9.6 0.6,-8.3 0.5,-7 0.6,-6 0.6,-5 0.6,-4 0.6,-3.3 0.6,-2.5 0.6,-1.9 0.5,-1.3 0.6,-0.8 0.6,-0.3 0.6,0.2 0.6,0.5 0.6,0.9 0.6,1.2 0.5,1.5 0.6,1.7 0.6,1.9 0.6,2.2 0.6,-9.1 0.6,-7.8 0.6,-6.5 0.5,-5.5 0.6,-4.5 0.6,-3.6 0.6,-2.8 0.6,-2 0.6,-1.5 0.6,-0.8 0.5,-0.3 0.6,0.2 0.6,0.6 0.6,0.9 0.6,1.4 0.6,1.6 0.6,1.9 0.5,2.1 0.6,2.3 0.6,2.6 0.6,-8.7 0.6,-7.4 0.6,-6.2 0.6,-5 0.6,-4.1 0.5,-3.3 0.6,-2.4 0.6,-1.7 0.6,-1.1 0.6,-0.4 0.6,0 0.6,0.5 0.5,1 0.6,1.3 0.6,1.6 0.6,2 0.6,2.2 0.6,2.4 0.6,2.7 0.5,2.8 0.6,3 0.6,3.2 0.6,3.3 0.6,3.4 0.6,3.4 0.6,3.6 0.5,3.6 0.6,3.7 0.6,3.7 0.6,3.8 2.3,15.2 2.4,15.3 2.3,15.2 2.4,14.7 2.3,14.3 2.4,13.7 2.3,13.1 2.4,12.6 2.3,12 2.3,11.4 2.4,10.9 2.3,10.3 2.4,9.8 2.3,9.4 2.4,8.9 2.3,8.4 2.3,8 2.4,7.6 2.3,7.2 2.4,6.8 2.3,6.5 2.4,6.2 2.3,5.9 2.4,5.5 2.3,5.3 2.3,5 2.4,4.8 2.3,4.5 2.4,4.3 2.3,4.1 2.4,3.9 2.3,3.6 2.4,3.5 2.3,3.3 2.3,3.2 2.4,2.9 2.3,2.9 2.4,2.7 2.3,2.5 2.4,2.4 2.3,2.3 2.3,2.2 2.4,2.1 2.3,1.9 2.4,1.9 2.3,1.8 2.4,1.7 2.3,1.6 2.4,1.5 2.3,1.4 2.3,1.4 2.4,1.3 2.3,1.2 2.4,1.2 2.3,1.1 2.4,1.1 2.3,1 2.4,0.9 2.3,0.9 2.3,0.9 2.4,0.8 2.3,0.7 2.4,0.8 2.3,0.7 2.4,0.6 2.3,0.7 2.3,0.6 2.4,0.5 2.3,0.6 2.4,0.5 2.3,0.4 2.4,0.5 2.3,0.4 2.4,0.5 2.3,0.3 2.3,0.4 2.4,0.4 2.3,0.3 2.4,0.3 2.3,0.3 2.4,0.3 2.3,0.3 2.4,0.3 2.3,0.2 2.3,0.2 2.4,0.3 2.3,0.2 2.4,0.2 2.3,0.2 2.4,0.1 2.3,0.2 2.3,0.2 2.4,0.1 2.3,0.2 2.4,0.1 2.3,0.1 2.4,0.2 2.3,0.1 2.4,0.1 2.3,0.1 2.3,0.1 2.4,0.1" stroke="#ff6e31" stroke-width="1.6" fill="none"/>
<path d="M473.5,677.4l0.6,-13.3 0.6,-12.1 0.6,-11 0.5,-10 0.6,-9.1 0.6,-8.2 0.6,-7.4 0.6,-6.6 0.6,-6 0.6,-5.4 0.5,-4.7 0.6,-4.2 0.6,-3.7 0.6,-3.3 0.6,-2.8 0.6,-2.4 0.6,-2.1 0.5,-1.8 0.6,-1.4 0.6,-1.1 0.6,-14.2 0.6,-12.8 0.6,-11.4 0.6,-10.3 0.6,-9.1 0.5,-8.1 0.6,-7.2 0.6,-6.2 0.6,-5.5 0.6,-4.7 0.6,-4 0.6,-3.4 0.5,-2.8 0.6,-2.2 0.6,-1.8 0.6,-1.3 0.6,-0.9 0.6,-0.6 0.6,-0.1 0.5,0.1 0.6,-12.9 0.6,-11.4 0.6,-10 0.6,-8.9 0.6,-7.7 0.6,-6.7 0.5,-5.7 0.6,-4.9 0.6,-4 0.6,-3.2 0.6,-2.6 0.6,-2 0.6,-1.3 0.5,-0.9 0.6,-0.3 0.6,0.1 0.6,0.5 0.6,0.8 0.6,1.2 0.6,1.5 0.5,-11.5 0.6,-10 0.6,-8.8 0.6,-7.5 0.6,-6.5 0.6,-5.4 0.6,-4.4 0.5,-3.6 0.6,-2.8 0.6,-2.1 0.6,-1.4 0.6,-0.7 0.6,-0.2 0.6,0.3 0.5,0.7 0.6,1.2 0.6,1.6 0.6,2 0.6,2.2 0.6,2.6 0.6,-10.5 0.6,-9.1 0.5,-7.8 0.6,-6.5 0.6,-5.5 0.6,-4.5 0.6,-3.5 0.6,-2.7 0.6,-1.9 0.5,-1.2 0.6,-0.5 0.6,0.1 0.6,0.6 0.6,1.1 0.6,1.6 0.6,2 0.5,2.3 0.6,2.7 0.6,3 0.6,3.3 0.6,-9.8 0.6,-8.4 0.6,-7 0.5,-5.9 0.6,-4.9 0.6,-3.8 0.6,-2.9 0.6,-2 0.6,-1.3 0.6,-0.6 0.5,0.1 0.6,0.6 0.6,1.2 0.6,1.7 0.6,2.1 0.6,2.5 0.6,2.9 0.5,3.2 0.6,3.5 0.6,3.8 0.6,-9.3 0.6,-7.9 0.6,-6.6 0.6,-5.5 0.6,-4.3 0.5,-3.4 0.6,-2.5 0.6,-1.6 0.6,-0.9 0.6,-0.1 0.6,0.4 0.6,1.1 0.5,1.5 0.6,2.1 0.6,2.5 0.6,2.9 0.6,3.2 0.6,3.6 0.6,3.8 0.5,4.1 0.6,4.3 0.6,4.6 0.6,4.7 0.6,4.9 0.6,5 0.6,5.1 0.5,5.2 0.6,5.4 0.6,5.3 0.6,5.5 2.3,22.1 2.4,22.2 2.3,21.9 2.4,21.1 2.3,20.4 2.4,19.3 2.3,18.4 2.4,17.2 2.3,16.2 2.3,15.1 2.4,14.1 2.3,13.1 2.4,12.2 2.3,11.3 2.4,10.6 2.3,9.7 2.3,9.1 2.4,8.3 2.3,7.8 2.4,7.1 2.3,6.7 2.4,6.1 2.3,5.7 2.4,5.2 2.3,4.8 2.3,4.5 2.4,4.2 2.3,3.8 2.4,3.5 2.3,3.3 2.4,3 2.3,2.8 2.4,2.6 2.3,2.4 2.3,2.2 2.4,2 2.3,1.9 2.4,1.7 2.3,1.6 2.4,1.5 2.3,1.4 2.3,1.2 2.4,1.2 2.3,1.1 2.4,1 2.3,0.9 2.4,0.8 2.3,0.8 2.4,0.8 2.3,0.6 2.3,0.7 2.4,0.5 2.3,0.6 2.4,0.4 2.3,0.5 2.4,0.4 2.3,0.4 2.4,0.4 2.3,0.3 2.3,0.3 2.4,0.3 2.3,0.2 2.4,0.3 2.3,0.2 2.4,0.2 2.3,0.2 2.3,0.2 2.4,0.1 2.3,0.2 2.4,0.1 2.3,0.1 2.4,0.2 2.3,0.1 2.4,0.1 2.3,0.1 2.3,0.1 2.4,0 2.3,0.1 2.4,0.1 2.3,0 2.4,0.1 2.3,0 2.4,0.1 2.3,0 2.3,0.1 2.4,0 2.3,0.1 2.4,0 2.3,0 2.4,0.1 2.3,0 2.3,0 2.4,0 2.3,0 2.4,0.1 2.3,0 2.4,0 2.3,0 2.4,0 2.3,0 2.3,0.1 2.4,0" stroke="#ff6e31" stroke-width="1.6" fill="none"/>
<path d="M473.5,677.4l0.6,-22.1 0.6,-19.2 0.6,-16.7 0.5,-14.4 0.6,-12.4 0.6,-10.7 0.6,-9.1 0.6,-7.7 0.6,-6.5 0.6,-5.4 0.5,-4.4 0.6,-3.6 0.6,-2.8 0.6,-2.1 0.6,-1.6 0.6,-1 0.6,-0.6 0.5,-0.2 0.6,0.2 0.6,0.5 0.6,-21.4 0.6,-18.2 0.6,-15.6 0.6,-13.1 0.6,-11 0.5,-9.1 0.6,-7.4 0.6,-5.9 0.6,-4.6 0.6,-3.5 0.6,-2.4 0.6,-1.6 0.5,-0.8 0.6,-0.1 0.6,0.5 0.6,1 0.6,1.5 0.6,1.9 0.6,2.2 0.5,2.5 0.6,-19.4 0.6,-16.2 0.6,-13.6 0.6,-11.2 0.6,-9 0.6,-7.2 0.5,-5.5 0.6,-4.1 0.6,-2.8 0.6,-1.7 0.6,-0.7 0.6,0.2 0.6,0.9 0.5,1.6 0.6,2.1 0.6,2.7 0.6,3 0.6,3.5 0.6,3.7 0.6,4 0.5,-17.9 0.6,-14.8 0.6,-12.1 0.6,-9.8 0.6,-7.7 0.6,-5.9 0.6,-4.2 0.5,-2.8 0.6,-1.6 0.6,-0.4 0.6,0.5 0.6,1.3 0.6,2.1 0.6,2.7 0.5,3.2 0.6,3.7 0.6,4.2 0.6,4.4 0.6,4.7 0.6,5 0.6,-16.9 0.6,-13.8 0.5,-11.3 0.6,-8.8 0.6,-6.8 0.6,-5 0.6,-3.4 0.6,-2 0.6,-0.7 0.5,0.3 0.6,1.3 0.6,2.1 0.6,2.8 0.6,3.5 0.6,3.9 0.6,4.4 0.5,4.8 0.6,5.2 0.6,5.4 0.6,5.6 0.6,-16.3 0.6,-13.2 0.6,-10.7 0.5,-8.2 0.6,-6.3 0.6,-4.4 0.6,-2.8 0.6,-1.4 0.6,-0.3 0.6,0.9 0.5,1.8 0.6,2.6 0.6,3.3 0.6,3.9 0.6,4.4 0.6,4.9 0.6,5.2 0.5,5.6 0.6,5.8 0.6,6.1 0.6,-15.9 0.6,-12.8 0.6,-10.3 0.6,-7.9 0.6,-5.8 0.5,-4.1 0.6,-2.4 0.6,-1.1 0.6,0.1 0.6,1.2 0.6,2.1 0.6,3 0.5,3.6 0.6,4.2 0.6,4.7 0.6,5.2 0.6,5.5 0.6,5.9 0.6,6.1 0.5,6.3 0.6,6.4 0.6,6.7 0.6,6.7 0.6,6.8 0.6,6.8 0.6,6.9 0.5,6.8 0.6,6.9 0.6,6.8 0.6,6.8 2.3,26.6 2.4,25.4 2.3,23.9 2.4,22.3 2.3,20.7 2.4,19.2 2.3,17.7 2.4,16.2 2.3,15 2.3,13.7 2.4,12.6 2.3,11.6 2.4,10.6 2.3,9.8 2.4,8.9 2.3,8.2 2.3,7.6 2.4,6.9 2.3,6.3 2.4,5.8 2.3,5.3 2.4,4.9 2.3,4.5 2.4,4.1 2.3,3.8 2.3,3.4 2.4,3.2 2.3,2.9 2.4,2.7 2.3,2.4 2.4,2.3 2.3,2 2.4,1.9 2.3,1.8 2.3,1.5 2.4,1.5 2.3,1.3 2.4,1.3 2.3,1.1 2.4,1 2.3,1 2.3,0.8 2.4,0.8 2.3,0.7 2.4,0.7 2.3,0.6 2.4,0.6 2.3,0.5 2.4,0.5 2.3,0.4 2.3,0.4 2.4,0.4 2.3,0.3 2.4,0.3 2.3,0.3 2.4,0.2 2.3,0.3 2.4,0.2 2.3,0.2 2.3,0.2 2.4,0.1 2.3,0.2 2.4,0.1 2.3,0.2 2.4,0.1 2.3,0.1 2.3,0.1 2.4,0.1 2.3,0.1 2.4,0 2.3,0.1 2.4,0.1 2.3,0 2.4,0.1 2.3,0 2.3,0.1 2.4,0 2.3,0.1 2.4,0 2.3,0 2.4,0.1 2.3,0 2.4,0 2.3,0 2.3,0.1 2.4,0 2.3,0 2.4,0 2.3,0 2.4,0 2.3,0.1 2.3,0 2.4,0 2.3,0 2.4,0 2.3,0 2.4,0 2.3,0 2.4,0 2.3,0 2.3,0 2.4,0" stroke="#12c2e3" stroke-width="1.6" fill="none"/>
<path d="M473.5,677.4l0.6,-7.9 0.6,-7.2 0.6,-6.6 0.5,-6 0.6,-5.5 0.6,-5 0.6,-4.6 0.6,-4.1 0.6,-3.8 0.6,-3.4 0.5,-3 0.6,-2.8 0.6,-2.5 0.6,-2.2 0.6,-2 0.6,-1.8 0.6,-1.6 0.5,-1.3 0.6,-1.3 0.6,-1 0.6,-8.8 0.6,-8 0.6,-7.2 0.6,-6.6 0.6,-5.9 0.5,-5.4 0.6,-4.8 0.6,-4.3 0.6,-3.8 0.6,-3.4 0.6,-3.1 0.6,-2.6 0.5,-2.4 0.6,-2 0.6,-1.8 0.6,-1.4 0.6,-1.3 0.6,-1 0.6,-0.9 0.5,-0.6 0.6,-8.4 0.6,-7.5 0.6,-6.8 0.6,-6 0.6,-5.5 0.6,-4.8 0.5,-4.3 0.6,-3.7 0.6,-3.3 0.6,-2.9 0.6,-2.4 0.6,-2.1 0.6,-1.8 0.5,-1.4 0.6,-1.2 0.6,-0.9 0.6,-0.6 0.6,-0.5 0.6,-0.2 0.6,-0.1 0.5,-7.7 0.6,-7 0.6,-6.1 0.6,-5.5 0.6,-4.9 0.6,-4.2 0.6,-3.7 0.5,-3.1 0.6,-2.7 0.6,-2.3 0.6,-1.9 0.6,-1.5 0.6,-1.2 0.6,-0.9 0.5,-0.6 0.6,-0.3 0.6,-0.2 0.6,0.2 0.6,0.3 0.6,0.5 0.6,-7.3 0.6,-6.4 0.5,-5.6 0.6,-5 0.6,-4.3 0.6,-3.7 0.6,-3.2 0.6,-2.6 0.6,-2.3 0.5,-1.7 0.6,-1.4 0.6,-1.1 0.6,-0.7 0.6,-0.4 0.6,-0.1 0.6,0.1 0.5,0.4 0.6,0.5 0.6,0.8 0.6,1 0.6,-6.8 0.6,-6 0.6,-5.2 0.5,-4.5 0.6,-3.9 0.6,-3.3 0.6,-2.8 0.6,-2.2 0.6,-1.8 0.6,-1.4 0.5,-1 0.6,-0.6 0.6,-0.3 0.6,0 0.6,0.2 0.6,0.5 0.6,0.8 0.5,0.9 0.6,1.1 0.6,1.4 0.6,-6.5 0.6,-5.6 0.6,-4.8 0.6,-4.2 0.6,-3.5 0.5,-3 0.6,-2.4 0.6,-1.9 0.6,-1.5 0.6,-1 0.6,-0.7 0.6,-0.3 0.5,0 0.6,0.3 0.6,0.6 0.6,0.8 0.6,1.1 0.6,1.2 0.6,1.5 0.5,1.6 0.6,1.7 0.6,1.9 0.6,2.1 0.6,2.1 0.6,2.2 0.6,2.4 0.5,2.4 0.6,2.5 0.6,2.6 0.6,2.6 2.3,10.9 2.4,11.4 2.3,11.7 2.4,11.6 2.3,11.5 2.4,11.3 2.3,11 2.4,10.8 2.3,10.4 2.3,10 2.4,9.7 2.3,9.3 2.4,9 2.3,8.6 2.4,8.3 2.3,8 2.3,7.6 2.4,7.3 2.3,7.1 2.4,6.7 2.3,6.5 2.4,6.2 2.3,6 2.4,5.7 2.3,5.4 2.3,5.3 2.4,5 2.3,4.9 2.4,4.6 2.3,4.4 2.4,4.3 2.3,4.1 2.4,3.9 2.3,3.8 2.3,3.6 2.4,3.4 2.3,3.3 2.4,3.2 2.3,3 2.4,3 2.3,2.8 2.3,2.6 2.4,2.6 2.3,2.5 2.4,2.3 2.3,2.3 2.4,2.2 2.3,2.1 2.4,2 2.3,1.9 2.3,1.8 2.4,1.8 2.3,1.7 2.4,1.6 2.3,1.6 2.4,1.4 2.3,1.5 2.4,1.3 2.3,1.4 2.3,1.2 2.4,1.2 2.3,1.2 2.4,1.1 2.3,1.1 2.4,1 2.3,1 2.3,0.9 2.4,0.9 2.3,0.9 2.4,0.8 2.3,0.8 2.4,0.8 2.3,0.7 2.4,0.7 2.3,0.7 2.3,0.6 2.4,0.6 2.3,0.6 2.4,0.6 2.3,0.5 2.4,0.5 2.3,0.5 2.4,0.5 2.3,0.5 2.3,0.4 2.4,0.4 2.3,0.4 2.4,0.4 2.3,0.4 2.4,0.4 2.3,0.3 2.3,0.3 2.4,0.4 2.3,0.3 2.4,0.2 2.3,0.3 2.4,0.3 2.3,0.2 2.4,0.3 2.3,0.2 2.3,0.3 2.4,0.2" stroke="#12c2e3" stroke-width="1.6" fill="none"/>
<path d="M473.5,677.4l0.6,-9.2 0.6,-8.4 0.6,-7.5 0.5,-6.8 0.6,-6.2 0.6,-5.5 0.6,-4.9 0.6,-4.4 0.6,-3.9 0.6,-3.5 0.5,-3 0.6,-2.7 0.6,-2.4 0.6,-2 0.6,-1.7 0.6,-1.5 0.6,-1.2 0.5,-1.1 0.6,-0.8 0.6,-0.6 0.6,-9.7 0.6,-8.6 0.6,-7.8 0.6,-6.8 0.6,-6.1 0.5,-5.3 0.6,-4.7 0.6,-4 0.6,-3.5 0.6,-3 0.6,-2.5 0.6,-2.1 0.5,-1.6 0.6,-1.4 0.6,-1 0.6,-0.7 0.6,-0.4 0.6,-0.2 0.6,0.1 0.5,0.2 0.6,-8.8 0.6,-7.8 0.6,-6.8 0.6,-5.9 0.6,-5.1 0.6,-4.4 0.5,-3.8 0.6,-3.1 0.6,-2.5 0.6,-2.1 0.6,-1.6 0.6,-1.1 0.6,-0.8 0.5,-0.4 0.6,-0.1 0.6,0.2 0.6,0.5 0.6,0.7 0.6,0.9 0.6,1.1 0.5,-7.9 0.6,-6.9 0.6,-6 0.6,-5.1 0.6,-4.3 0.6,-3.6 0.6,-3 0.5,-2.3 0.6,-1.8 0.6,-1.3 0.6,-0.8 0.6,-0.4 0.6,0 0.6,0.3 0.5,0.6 0.6,0.9 0.6,1.1 0.6,1.4 0.6,1.6 0.6,1.7 0.6,-7.3 0.6,-6.3 0.5,-5.3 0.6,-4.5 0.6,-3.7 0.6,-3 0.6,-2.4 0.6,-1.8 0.6,-1.2 0.5,-0.7 0.6,-0.3 0.6,0.1 0.6,0.5 0.6,0.8 0.6,1.2 0.6,1.4 0.5,1.6 0.6,1.8 0.6,2.1 0.6,2.2 0.6,-6.8 0.6,-5.9 0.6,-4.9 0.5,-4.1 0.6,-3.3 0.6,-2.6 0.6,-1.9 0.6,-1.4 0.6,-0.8 0.6,-0.4 0.5,0.1 0.6,0.5 0.6,0.9 0.6,1.2 0.6,1.4 0.6,1.8 0.6,1.9 0.5,2.2 0.6,2.4 0.6,2.5 0.6,-6.5 0.6,-5.5 0.6,-4.7 0.6,-3.7 0.6,-3 0.5,-2.3 0.6,-1.7 0.6,-1.1 0.6,-0.5 0.6,-0.1 0.6,0.3 0.6,0.8 0.5,1.1 0.6,1.4 0.6,1.7 0.6,2 0.6,2.2 0.6,2.4 0.6,2.6 0.5,2.8 0.6,2.9 0.6,3 0.6,3.2 0.6,3.2 0.6,3.3 0.6,3.4 0.5,3.5 0.6,3.5 0.6,3.5 0.6,3.6 2.3,14.5 2.4,14.4 2.3,14.1 2.4,13.6 2.3,13.1 2.4,12.4 2.3,11.7 2.4,11.1 2.3,10.3 2.3,9.7 2.4,9.1 2.3,8.4 2.4,7.9 2.3,7.3 2.4,6.9 2.3,6.3 2.3,5.9 2.4,5.5 2.3,5.1 2.4,4.8 2.3,4.4 2.4,4 2.3,3.9 2.4,3.5 2.3,3.3 2.3,3 2.4,2.8 2.3,2.7 2.4,2.4 2.3,2.3 2.4,2.1 2.3,1.9 2.4,1.8 2.3,1.7 2.3,1.6 2.4,1.4 2.3,1.4 2.4,1.2 2.3,1.2 2.4,1.1 2.3,1 2.3,0.9 2.4,0.9 2.3,0.8 2.4,0.7 2.3,0.7 2.4,0.7 2.3,0.5 2.4,0.6 2.3,0.5 2.3,0.5 2.4,0.4 2.3,0.4 2.4,0.4 2.3,0.4 2.4,0.3 2.3,0.3 2.4,0.3 2.3,0.3 2.3,0.2 2.4,0.2 2.3,0.3 2.4,0.2 2.3,0.1 2.4,0.2 2.3,0.2 2.3,0.1 2.4,0.1 2.3,0.2 2.4,0.1 2.3,0.1 2.4,0.1 2.3,0.1 2.4,0.1 2.3,0.1 2.3,0 2.4,0.1 2.3,0.1 2.4,0 2.3,0.1 2.4,0 2.3,0.1 2.4,0 2.3,0.1 2.3,0 2.4,0 2.3,0.1 2.4,0 2.3,0 2.4,0.1 2.3,0 2.3,0 2.4,0 2.3,0 2.4,0.1 2.3,0 2.4,0 2.3,0 2.4,0 2.3,0 2.3,0 2.4,0.1" stroke="#12c2e3" stroke-width="1.6" fill="none"/>
<path d="M473.5,677.4l0.6,-7.4 0.6,-6.9 0.6,-6.3 0.5,-5.8 0.6,-5.3 0.6,-4.8 0.6,-4.5 0.6,-4 0.6,-3.7 0.6,-3.3 0.5,-3 0.6,-2.7 0.6,-2.4 0.6,-2.2 0.6,-1.9 0.6,-1.7 0.6,-1.5 0.5,-1.2 0.6,-1.1 0.6,-0.9 0.6,-8.2 0.6,-7.4 0.6,-6.8 0.6,-6.1 0.6,-5.5 0.5,-5 0.6,-4.4 0.6,-4 0.6,-3.5 0.6,-3.1 0.6,-2.6 0.6,-2.3 0.5,-2 0.6,-1.6 0.6,-1.4 0.6,-1 0.6,-0.9 0.6,-0.5 0.6,-0.4 0.5,-0.1 0.6,-7.4 0.6,-6.7 0.6,-5.9 0.6,-5.3 0.6,-4.6 0.6,-4.1 0.5,-3.5 0.6,-3.1 0.6,-2.6 0.6,-2.1 0.6,-1.8 0.6,-1.4 0.6,-1 0.5,-0.7 0.6,-0.4 0.6,-0.2 0.6,0.1 0.6,0.3 0.6,0.6 0.6,0.8 0.5,-6.5 0.6,-5.8 0.6,-5 0.6,-4.4 0.6,-3.8 0.6,-3.2 0.6,-2.7 0.5,-2.3 0.6,-1.7 0.6,-1.4 0.6,-0.9 0.6,-0.6 0.6,-0.3 0.6,0.1 0.5,0.3 0.6,0.6 0.6,0.9 0.6,1 0.6,1.3 0.6,1.4 0.6,-5.8 0.6,-5 0.5,-4.4 0.6,-3.8 0.6,-3.1 0.6,-2.6 0.6,-2.1 0.6,-1.6 0.6,-1.2 0.5,-0.7 0.6,-0.4 0.6,0 0.6,0.3 0.6,0.6 0.6,0.8 0.6,1.2 0.5,1.3 0.6,1.6 0.6,1.7 0.6,2 0.6,-5.4 0.6,-4.6 0.6,-3.9 0.5,-3.3 0.6,-2.7 0.6,-2.2 0.6,-1.7 0.6,-1.2 0.6,-0.7 0.6,-0.4 0.5,0 0.6,0.4 0.6,0.6 0.6,1 0.6,1.2 0.6,1.5 0.6,1.7 0.5,1.8 0.6,2.1 0.6,2.3 0.6,-5.1 0.6,-4.3 0.6,-3.6 0.6,-3 0.6,-2.4 0.5,-1.9 0.6,-1.4 0.6,-1 0.6,-0.5 0.6,-0.1 0.6,0.3 0.6,0.5 0.5,0.9 0.6,1.2 0.6,1.5 0.6,1.6 0.6,1.9 0.6,2.2 0.6,2.2 0.5,2.5 0.6,2.6 0.6,2.7 0.6,2.9 0.6,2.9 0.6,3.1 0.6,3.1 0.5,3.2 0.6,3.3 0.6,3.3 0.6,3.4 2.3,13.8 2.4,14 2.3,13.9 2.4,13.6 2.3,13 2.4,12.5 2.3,11.8 2.4,11.2 2.3,10.4 2.3,9.7 2.4,9 2.3,8.4 2.4,7.7 2.3,7.1 2.4,6.6 2.3,6 2.3,5.6 2.4,5 2.3,4.7 2.4,4.2 2.3,3.9 2.4,3.6 2.3,3.2 2.4,3 2.3,2.7 2.3,2.4 2.4,2.3 2.3,2 2.4,1.9 2.3,1.7 2.4,1.5 2.3,1.4 2.4,1.3 2.3,1.2 2.3,1.1 2.4,0.9 2.3,0.9 2.4,0.8 2.3,0.7 2.4,0.7 2.3,0.6 2.3,0.6 2.4,0.5 2.3,0.4 2.4,0.4 2.3,0.4 2.4,0.3 2.3,0.4 2.4,0.2 2.3,0.3 2.3,0.2 2.4,0.2 2.3,0.2 2.4,0.2 2.3,0.2 2.4,0.1 2.3,0.2 2.4,0.1 2.3,0.1 2.3,0.1 2.4,0.1 2.3,0.1 2.4,0 2.3,0.1 2.4,0.1 2.3,0 2.3,0.1 2.4,0 2.3,0.1 2.4,0 2.3,0 2.4,0.1 2.3,0 2.4,0 2.3,0.1 2.3,0 2.4,0 2.3,0 2.4,0 2.3,0 2.4,0.1 2.3,0 2.4,0 2.3,0 2.3,0 2.4,0 2.3,0 2.4,0 2.3,0 2.4,0 2.3,0 2.3,0.1 2.4,0 2.3,0 2.4,0 2.3,0 2.4,0 2.3,0 2.4,0 2.3,0 2.3,0 2.4,0" stroke="#12c2e3" stroke-width="1.6" fill="none"/>
<path d="M473.5,677.4l0.6,-8 0.6,-7.4 0.6,-6.7 0.5,-6.2 0.6,-5.6 0.6,-5.1 0.6,-4.7 0.6,-4.2 0.6,-3.9 0.6,-3.4 0.5,-3.1 0.6,-2.8 0.6,-2.5 0.6,-2.2 0.6,-2 0.6,-1.7 0.6,-1.5 0.5,-1.3 0.6,-1.1 0.6,-0.9 0.6,-8.8 0.6,-8 0.6,-7.2 0.6,-6.5 0.6,-5.8 0.5,-5.3 0.6,-4.7 0.6,-4.1 0.6,-3.7 0.6,-3.2 0.6,-2.8 0.6,-2.5 0.5,-2 0.6,-1.7 0.6,-1.5 0.6,-1.1 0.6,-0.9 0.6,-0.6 0.6,-0.5 0.5,-0.2 0.6,-8 0.6,-7.3 0.6,-6.4 0.6,-5.7 0.6,-5.1 0.6,-4.4 0.5,-3.8 0.6,-3.4 0.6,-2.8 0.6,-2.4 0.6,-1.9 0.6,-1.6 0.6,-1.2 0.5,-0.9 0.6,-0.5 0.6,-0.3 0.6,-0.1 0.6,0.3 0.6,0.4 0.6,0.6 0.5,-7.2 0.6,-6.4 0.6,-5.6 0.6,-4.9 0.6,-4.2 0.6,-3.7 0.6,-3 0.5,-2.5 0.6,-2.1 0.6,-1.6 0.6,-1.2 0.6,-0.8 0.6,-0.5 0.6,-0.1 0.5,0.2 0.6,0.4 0.6,0.7 0.6,0.9 0.6,1.1 0.6,1.3 0.6,-6.5 0.6,-5.8 0.5,-4.9 0.6,-4.3 0.6,-3.6 0.6,-3 0.6,-2.4 0.6,-2 0.6,-1.4 0.5,-1 0.6,-0.7 0.6,-0.2 0.6,0.1 0.6,0.4 0.6,0.7 0.6,1 0.5,1.2 0.6,1.4 0.6,1.6 0.6,1.8 0.6,-6 0.6,-5.3 0.6,-4.5 0.5,-3.8 0.6,-3.1 0.6,-2.6 0.6,-2 0.6,-1.5 0.6,-1 0.6,-0.6 0.5,-0.2 0.6,0.1 0.6,0.5 0.6,0.8 0.6,1.1 0.6,1.4 0.6,1.5 0.5,1.8 0.6,2 0.6,2.1 0.6,-5.7 0.6,-4.9 0.6,-4.1 0.6,-3.5 0.6,-2.8 0.5,-2.3 0.6,-1.7 0.6,-1.1 0.6,-0.8 0.6,-0.3 0.6,0.1 0.6,0.4 0.5,0.8 0.6,1.1 0.6,1.3 0.6,1.6 0.6,1.9 0.6,2 0.6,2.2 0.5,2.4 0.6,2.6 0.6,2.7 0.6,2.8 0.6,2.9 0.6,3 0.6,3.2 0.5,3.1 0.6,3.3 0.6,3.3 0.6,3.4 2.3,13.7 2.4,14 2.3,14 2.4,13.6 2.3,13.3 2.4,12.7 2.3,12.2 2.4,11.5 2.3,10.9 2.3,10.3 2.4,9.7 2.3,9.1 2.4,8.5 2.3,8 2.4,7.4 2.3,6.9 2.3,6.5 2.4,6.1 2.3,5.6 2.4,5.2 2.3,4.9 2.4,4.6 2.3,4.2 2.4,3.9 2.3,3.7 2.3,3.4 2.4,3.2 2.3,2.9 2.4,2.8 2.3,2.5 2.4,2.4 2.3,2.2 2.4,2 2.3,1.9 2.3,1.8 2.4,1.7 2.3,1.5 2.4,1.4 2.3,1.3 2.4,1.3 2.3,1.1 2.3,1.1 2.4,1 2.3,0.9 2.4,0.9 2.3,0.8 2.4,0.7 2.3,0.7 2.4,0.6 2.3,0.6 2.3,0.6 2.4,0.5 2.3,0.5 2.4,0.4 2.3,0.4 2.4,0.4 2.3,0.4 2.4,0.3 2.3,0.3 2.3,0.3 2.4,0.3 2.3,0.2 2.4,0.2 2.3,0.3 2.4,0.2 2.3,0.1 2.3,0.2 2.4,0.2 2.3,0.1 2.4,0.2 2.3,0.1 2.4,0.1 2.3,0.1 2.4,0.1 2.3,0.1 2.3,0.1 2.4,0.1 2.3,0.1 2.4,0 2.3,0.1 2.4,0.1 2.3,0 2.4,0.1 2.3,0 2.3,0.1 2.4,0 2.3,0.1 2.4,0 2.3,0 2.4,0.1 2.3,0 2.3,0 2.4,0.1 2.3,0 2.4,0 2.3,0 2.4,0 2.3,0.1 2.4,0 2.3,0 2.3,0 2.4,0" stroke="#ff6e31" stroke-width="1.6" fill="none"/>
<path d="M473.5,677.4l0.6,-13 0.6,-11.7 0.6,-10.6 0.5,-9.6 0.6,-8.6 0.6,-7.7 0.6,-6.9 0.6,-6.2 0.6,-5.5 0.6,-4.8 0.5,-4.3 0.6,-3.7 0.6,-3.3 0.6,-2.8 0.6,-2.3 0.6,-2 0.6,-1.7 0.5,-1.3 0.6,-1.1 0.6,-0.8 0.6,-13.5 0.6,-12 0.6,-10.7 0.6,-9.6 0.6,-8.3 0.5,-7.4 0.6,-6.4 0.6,-5.5 0.6,-4.8 0.6,-4 0.6,-3.3 0.6,-2.8 0.5,-2.1 0.6,-1.7 0.6,-1.2 0.6,-0.8 0.6,-0.3 0.6,-0.1 0.6,0.3 0.5,0.6 0.6,-12.1 0.6,-10.7 0.6,-9.3 0.6,-8.1 0.6,-7 0.6,-5.9 0.5,-5 0.6,-4.1 0.6,-3.3 0.6,-2.6 0.6,-1.9 0.6,-1.4 0.6,-0.7 0.5,-0.3 0.6,0.2 0.6,0.6 0.6,0.9 0.6,1.3 0.6,1.6 0.6,1.9 0.5,-10.9 0.6,-9.4 0.6,-8 0.6,-6.9 0.6,-5.8 0.6,-4.7 0.6,-3.8 0.5,-3 0.6,-2.2 0.6,-1.4 0.6,-0.9 0.6,-0.2 0.6,0.2 0.6,0.8 0.5,1.2 0.6,1.6 0.6,1.9 0.6,2.3 0.6,2.5 0.6,2.8 0.6,-9.9 0.6,-8.5 0.5,-7.2 0.6,-6 0.6,-4.9 0.6,-3.9 0.6,-3 0.6,-2.2 0.6,-1.4 0.5,-0.7 0.6,-0.1 0.6,0.4 0.6,1 0.6,1.5 0.6,1.9 0.6,2.2 0.5,2.7 0.6,2.9 0.6,3.1 0.6,3.5 0.6,-9.4 0.6,-7.9 0.6,-6.6 0.5,-5.4 0.6,-4.4 0.6,-3.3 0.6,-2.5 0.6,-1.7 0.6,-0.8 0.6,-0.3 0.5,0.4 0.6,1 0.6,1.5 0.6,1.9 0.6,2.3 0.6,2.7 0.6,3.1 0.5,3.3 0.6,3.6 0.6,3.8 0.6,-8.9 0.6,-7.5 0.6,-6.2 0.6,-5.1 0.6,-4 0.5,-3 0.6,-2.1 0.6,-1.3 0.6,-0.6 0.6,0.1 0.6,0.8 0.6,1.2 0.5,1.8 0.6,2.2 0.6,2.7 0.6,3 0.6,3.3 0.6,3.6 0.6,3.9 0.5,4.1 0.6,4.2 0.6,4.5 0.6,4.6 0.6,4.8 0.6,4.9 0.6,4.9 0.5,5 0.6,5.1 0.6,5.2 0.6,5.1 2.3,20.9 2.4,20.6 2.3,20.1 2.4,19.3 2.3,18.3 2.4,17.2 2.3,16.2 2.4,15.1 2.3,13.9 2.3,13 2.4,12 2.3,11.1 2.4,10.2 2.3,9.4 2.4,8.6 2.3,8 2.3,7.3 2.4,6.7 2.3,6.2 2.4,5.6 2.3,5.2 2.4,4.8 2.3,4.3 2.4,4 2.3,3.7 2.3,3.4 2.4,3.1 2.3,2.8 2.4,2.6 2.3,2.4 2.4,2.2 2.3,2 2.4,1.8 2.3,1.7 2.3,1.6 2.4,1.4 2.3,1.3 2.4,1.2 2.3,1.1 2.4,1 2.3,0.9 2.3,0.8 2.4,0.8 2.3,0.7 2.4,0.6 2.3,0.6 2.4,0.6 2.3,0.5 2.4,0.4 2.3,0.5 2.3,0.4 2.4,0.3 2.3,0.3 2.4,0.3 2.3,0.3 2.4,0.2 2.3,0.3 2.4,0.2 2.3,0.2 2.3,0.2 2.4,0.1 2.3,0.2 2.4,0.1 2.3,0.1 2.4,0.1 2.3,0.1 2.3,0.1 2.4,0.1 2.3,0.1 2.4,0.1 2.3,0.1 2.4,0 2.3,0.1 2.4,0 2.3,0.1 2.3,0 2.4,0.1 2.3,0 2.4,0 2.3,0.1 2.4,0 2.3,0 2.4,0 2.3,0.1 2.3,0 2.4,0 2.3,0 2.4,0 2.3,0 2.4,0.1 2.3,0 2.3,0 2.4,0 2.3,0 2.4,0 2.3,0 2.4,0 2.3,0 2.4,0 2.3,0 2.3,0 2.4,0" stroke="#12c2e3" stroke-width="1.6" fill="none"/>
<path d="M473.5,677.4l0.6,-1.9 0.6,-1.7 0.6,-1.7 0.5,-1.6 0.6,-1.5 0.6,-1.4 0.6,-1.3 0.6,-1.3 0.6,-1.2 0.6,-1.2 0.5,-1.1 0.6,-1 0.6,-1 0.6,-0.9 0.6,-0.9 0.6,-0.8 0.6,-0.7 0.5,-0.8 0.6,-0.6 0.6,-0.7 0.6,-2.4 0.6,-2.4 0.6,-2.2 0.6,-2.1 0.6,-1.9 0.5,-1.9 0.6,-1.7 0.6,-1.7 0.6,-1.6 0.6,-1.4 0.6,-1.4 0.6,-1.3 0.5,-1.2 0.6,-1.2 0.6,-1.1 0.6,-1 0.6,-0.9 0.6,-0.9 0.6,-0.8 0.5,-0.8 0.6,-2.6 0.6,-2.4 0.6,-2.3 0.6,-2.1 0.6,-2.1 0.6,-1.9 0.5,-1.8 0.6,-1.7 0.6,-1.5 0.6,-1.5 0.6,-1.4 0.6,-1.3 0.6,-1.2 0.5,-1.1 0.6,-1.1 0.6,-0.9 0.6,-0.9 0.6,-0.9 0.6,-0.7 0.6,-0.7 0.5,-2.5 0.6,-2.4 0.6,-2.2 0.6,-2.1 0.6,-1.9 0.6,-1.8 0.6,-1.7 0.5,-1.6 0.6,-1.5 0.6,-1.3 0.6,-1.3 0.6,-1.2 0.6,-1.1 0.6,-1 0.5,-0.9 0.6,-0.9 0.6,-0.7 0.6,-0.7 0.6,-0.7 0.6,-0.6 0.6,-2.3 0.6,-2.2 0.5,-2.1 0.6,-1.9 0.6,-1.8 0.6,-1.7 0.6,-1.6 0.6,-1.4 0.6,-1.4 0.5,-1.2 0.6,-1.1 0.6,-1.1 0.6,-0.9 0.6,-0.9 0.6,-0.8 0.6,-0.7 0.5,-0.6 0.6,-0.6 0.6,-0.5 0.6,-0.4 0.6,-2.2 0.6,-2.1 0.6,-1.9 0.5,-1.8 0.6,-1.7 0.6,-1.5 0.6,-1.4 0.6,-1.3 0.6,-1.2 0.6,-1.1 0.5,-1 0.6,-0.9 0.6,-0.8 0.6,-0.7 0.6,-0.7 0.6,-0.5 0.6,-0.5 0.5,-0.5 0.6,-0.3 0.6,-0.3 0.6,-2.1 0.6,-1.9 0.6,-1.8 0.6,-1.7 0.6,-1.5 0.5,-1.4 0.6,-1.3 0.6,-1.2 0.6,-1 0.6,-1 0.6,-0.8 0.6,-0.8 0.5,-0.7 0.6,-0.6 0.6,-0.5 0.6,-0.4 0.6,-0.4 0.6,-0.3 0.6,-0.2 0.5,-0.2 0.6,-0.1 0.6,-0.1 0.6,0 0.6,0.1 0.6,0.1 0.6,0.1 0.5,0.2 0.6,0.3 0.6,0.2 0.6,0.3 2.3,1.6 2.4,2 2.3,2.4 2.4,2.7 2.3,2.8 2.4,3.1 2.3,3.2 2.4,3.2 2.3,3.3 2.3,3.4 2.4,3.3 2.3,3.4 2.4,3.3 2.3,3.3 2.4,3.3 2.3,3.2 2.3,3.2 2.4,3.1 2.3,3.1 2.4,3 2.3,2.9 2.4,2.9 2.3,2.8 2.4,2.8 2.3,2.6 2.3,2.7 2.4,2.5 2.3,2.5 2.4,2.5 2.3,2.4 2.4,2.3 2.3,2.3 2.4,2.2 2.3,2.2 2.3,2.1 2.4,2 2.3,2 2.4,2 2.3,1.9 2.4,1.8 2.3,1.8 2.3,1.8 2.4,1.7 2.3,1.7 2.4,1.6 2.3,1.6 2.4,1.5 2.3,1.5 2.4,1.5 2.3,1.4 2.3,1.4 2.4,1.4 2.3,1.3 2.4,1.3 2.3,1.2 2.4,1.3 2.3,1.1 2.4,1.2 2.3,1.1 2.3,1.1 2.4,1.1 2.3,1.1 2.4,1 2.3,1 2.4,0.9 2.3,1 2.3,0.9 2.4,0.9 2.3,0.9 2.4,0.8 2.3,0.9 2.4,0.8 2.3,0.7 2.4,0.8 2.3,0.8 2.3,0.7 2.4,0.7 2.3,0.7 2.4,0.7 2.3,0.6 2.4,0.7 2.3,0.6 2.4,0.6 2.3,0.6 2.3,0.5 2.4,0.6 2.3,0.6 2.4,0.5 2.3,0.5 2.4,0.5 2.3,0.5 2.3,0.5 2.4,0.5 2.3,0.4 2.4,0.5 2.3,0.4 2.4,0.4 2.3,0.4 2.4,0.4 2.3,0.4 2.3,0.4 2.4,0.4" stroke="#12c2e3" stroke-width="1.6" fill="none"/>
<path d="M473.5,677.4l0.6,-17.8 0.6,-15.8 0.6,-13.8 0.5,-12.2 0.6,-10.7 0.6,-9.4 0.6,-8.2 0.6,-7.1 0.6,-6.1 0.6,-5.2 0.5,-4.5 0.6,-3.8 0.6,-3.2 0.6,-2.6 0.6,-2.2 0.6,-1.7 0.6,-1.3 0.5,-0.9 0.6,-0.7 0.6,-0.3 0.6,-18 0.6,-15.7 0.6,-13.6 0.6,-11.7 0.6,-10.1 0.5,-8.7 0.6,-7.3 0.6,-6.1 0.6,-5.1 0.6,-4.2 0.6,-3.3 0.6,-2.6 0.5,-1.9 0.6,-1.3 0.6,-0.8 0.6,-0.3 0.6,0 0.6,0.5 0.6,0.8 0.5,1 0.6,-16.5 0.6,-14.2 0.6,-12.2 0.6,-10.3 0.6,-8.7 0.6,-7.2 0.5,-5.9 0.6,-4.7 0.6,-3.7 0.6,-2.8 0.6,-1.9 0.6,-1.2 0.6,-0.6 0.5,0 0.6,0.6 0.6,0.9 0.6,1.4 0.6,1.7 0.6,2.1 0.6,2.3 0.5,-15.3 0.6,-13 0.6,-11 0.6,-9.1 0.6,-7.5 0.6,-6.1 0.6,-4.7 0.5,-3.7 0.6,-2.6 0.6,-1.6 0.6,-0.9 0.6,-0.2 0.6,0.5 0.6,1.1 0.5,1.5 0.6,2 0.6,2.3 0.6,2.7 0.6,3 0.6,3.3 0.6,-14.4 0.6,-12.1 0.5,-10.1 0.6,-8.2 0.6,-6.7 0.6,-5.2 0.6,-3.9 0.6,-2.8 0.6,-1.8 0.5,-0.9 0.6,0 0.6,0.6 0.6,1.2 0.6,1.8 0.6,2.3 0.6,2.7 0.5,3.1 0.6,3.4 0.6,3.7 0.6,3.9 0.6,-13.7 0.6,-11.4 0.6,-9.4 0.5,-7.7 0.6,-6 0.6,-4.6 0.6,-3.3 0.6,-2.2 0.6,-1.1 0.6,-0.3 0.5,0.5 0.6,1.2 0.6,1.8 0.6,2.3 0.6,2.8 0.6,3.3 0.6,3.6 0.5,3.9 0.6,4.2 0.6,4.4 0.6,-13.2 0.6,-10.9 0.6,-9 0.6,-7.1 0.6,-5.6 0.5,-4.1 0.6,-2.8 0.6,-1.8 0.6,-0.7 0.6,0.1 0.6,0.9 0.6,1.6 0.5,2.2 0.6,2.8 0.6,3.2 0.6,3.6 0.6,4 0.6,4.3 0.6,4.6 0.5,4.8 0.6,5 0.6,5.1 0.6,5.3 0.6,5.4 0.6,5.5 0.6,5.6 0.5,5.6 0.6,5.7 0.6,5.7 0.6,5.7 2.3,22.7 2.4,22.4 2.3,21.6 2.4,20.7 2.3,19.8 2.4,18.7 2.3,17.6 2.4,16.7 2.3,15.7 2.3,14.8 2.4,13.9 2.3,13.1 2.4,12.3 2.3,11.5 2.4,10.8 2.3,10.2 2.3,9.6 2.4,9 2.3,8.4 2.4,7.9 2.3,7.5 2.4,7 2.3,6.5 2.4,6.2 2.3,5.8 2.3,5.4 2.4,5.1 2.3,4.8 2.4,4.5 2.3,4.3 2.4,3.9 2.3,3.8 2.4,3.5 2.3,3.3 2.3,3 2.4,3 2.3,2.7 2.4,2.5 2.3,2.4 2.4,2.3 2.3,2.1 2.3,2 2.4,1.9 2.3,1.7 2.4,1.7 2.3,1.5 2.4,1.5 2.3,1.3 2.4,1.3 2.3,1.2 2.3,1.2 2.4,1 2.3,1 2.4,1 2.3,0.8 2.4,0.9 2.3,0.7 2.4,0.8 2.3,0.6 2.3,0.7 2.4,0.6 2.3,0.6 2.4,0.5 2.3,0.5 2.4,0.5 2.3,0.4 2.3,0.4 2.4,0.4 2.3,0.4 2.4,0.3 2.3,0.3 2.4,0.3 2.3,0.3 2.4,0.3 2.3,0.2 2.3,0.3 2.4,0.2 2.3,0.2 2.4,0.2 2.3,0.2 2.4,0.2 2.3,0.1 2.4,0.2 2.3,0.1 2.3,0.1 2.4,0.2 2.3,0.1 2.4,0.1 2.3,0.1 2.4,0.1 2.3,0.1 2.3,0.1 2.4,0.1 2.3,0 2.4,0.1 2.3,0.1 2.4,0 2.3,0.1 2.4,0 2.3,0.1 2.3,0 2.4,0.1" stroke="#12c2e3" stroke-width="1.6" fill="none"/>
<path d="M473.5,677.4l0.6,-10.6 0.6,-9.5 0.6,-8.6 0.5,-7.7 0.6,-6.9 0.6,-6.2 0.6,-5.6 0.6,-4.9 0.6,-4.3 0.6,-3.8 0.5,-3.3 0.6,-2.9 0.6,-2.5 0.6,-2.1 0.6,-1.7 0.6,-1.4 0.6,-1.2 0.5,-0.9 0.6,-0.6 0.6,-0.5 0.6,-10.8 0.6,-9.6 0.6,-8.5 0.6,-7.4 0.6,-6.6 0.5,-5.7 0.6,-4.9 0.6,-4.2 0.6,-3.6 0.6,-2.9 0.6,-2.4 0.6,-1.9 0.5,-1.4 0.6,-1 0.6,-0.6 0.6,-0.3 0.6,0 0.6,0.3 0.6,0.6 0.5,0.8 0.6,-9.5 0.6,-8.4 0.6,-7.2 0.6,-6.2 0.6,-5.3 0.6,-4.5 0.5,-3.6 0.6,-3 0.6,-2.3 0.6,-1.7 0.6,-1.2 0.6,-0.6 0.6,-0.3 0.5,0.2 0.6,0.5 0.6,0.9 0.6,1.2 0.6,1.4 0.6,1.7 0.6,1.8 0.5,-8.4 0.6,-7.3 0.6,-6.2 0.6,-5.2 0.6,-4.3 0.6,-3.5 0.6,-2.7 0.5,-2 0.6,-1.4 0.6,-0.8 0.6,-0.3 0.6,0.1 0.6,0.6 0.6,1 0.5,1.4 0.6,1.6 0.6,2 0.6,2.2 0.6,2.4 0.6,2.6 0.6,-7.8 0.6,-6.6 0.5,-5.6 0.6,-4.5 0.6,-3.7 0.6,-2.8 0.6,-2.1 0.6,-1.4 0.6,-0.8 0.5,-0.3 0.6,0.3 0.6,0.7 0.6,1.1 0.6,1.5 0.6,1.9 0.6,2.1 0.5,2.4 0.6,2.7 0.6,2.8 0.6,3.1 0.6,-7.3 0.6,-6.2 0.6,-5.2 0.5,-4.1 0.6,-3.3 0.6,-2.4 0.6,-1.8 0.6,-1 0.6,-0.5 0.6,0.1 0.5,0.6 0.6,1.1 0.6,1.4 0.6,1.8 0.6,2.2 0.6,2.4 0.6,2.7 0.5,3 0.6,3.1 0.6,3.3 0.6,-7.1 0.6,-5.9 0.6,-4.9 0.6,-3.9 0.6,-3 0.5,-2.3 0.6,-1.5 0.6,-0.8 0.6,-0.3 0.6,0.4 0.6,0.8 0.6,1.2 0.5,1.6 0.6,2.1 0.6,2.3 0.6,2.6 0.6,2.9 0.6,3.1 0.6,3.3 0.5,3.4 0.6,3.7 0.6,3.7 0.6,3.9 0.6,3.9 0.6,4.1 0.6,4.1 0.5,4.1 0.6,4.2 0.6,4.2 0.6,4.3 2.3,16.9 2.4,16.5 2.3,15.9 2.4,15.1 2.3,14.1 2.4,13.2 2.3,12.1 2.4,11.2 2.3,10.2 2.3,9.3 2.4,8.5 2.3,7.7 2.4,7 2.3,6.4 2.4,5.7 2.3,5.2 2.3,4.7 2.4,4.2 2.3,3.9 2.4,3.4 2.3,3.1 2.4,2.8 2.3,2.5 2.4,2.3 2.3,2.1 2.3,1.8 2.4,1.7 2.3,1.5 2.4,1.3 2.3,1.2 2.4,1.1 2.3,1 2.4,0.9 2.3,0.8 2.3,0.7 2.4,0.7 2.3,0.5 2.4,0.6 2.3,0.4 2.4,0.5 2.3,0.4 2.3,0.3 2.4,0.3 2.3,0.3 2.4,0.2 2.3,0.3 2.4,0.2 2.3,0.1 2.4,0.2 2.3,0.2 2.3,0.1 2.4,0.1 2.3,0.1 2.4,0.1 2.3,0.1 2.4,0.1 2.3,0.1 2.4,0 2.3,0.1 2.3,0 2.4,0.1 2.3,0 2.4,0.1 2.3,0 2.4,0 2.3,0.1 2.3,0 2.4,0 2.3,0 2.4,0 2.3,0.1 2.4,0 2.3,0 2.4,0 2.3,0 2.3,0 2.4,0 2.3,0 2.4,0 2.3,0 2.4,0 2.3,0.1 2.4,0 2.3,0 2.3,0 2.4,0 2.3,0 2.4,0 2.3,0 2.4,0 2.3,0 2.3,0 2.4,0 2.3,0 2.4,0 2.3,0 2.4,0 2.3,0 2.4,0 2.3,0 2.3,0 2.4,0" stroke="#ff6e31" stroke-width="1.6" fill="none"/>
<path d="M473.5,677.4l0.6,-5.9 0.6,-5.3 0.6,-4.8 0.5,-4.2 0.6,-3.8 0.6,-3.4 0.6,-2.9 0.6,-2.7 0.6,-2.3 0.6,-2 0.5,-1.7 0.6,-1.5 0.6,-1.3 0.6,-1 0.6,-0.9 0.6,-0.7 0.6,-0.6 0.5,-0.5 0.6,-0.3 0.6,-0.2 0.6,-6.1 0.6,-5.3 0.6,-4.7 0.6,-4.1 0.6,-3.6 0.5,-3.1 0.6,-2.7 0.6,-2.2 0.6,-2 0.6,-1.5 0.6,-1.3 0.6,-1 0.5,-0.8 0.6,-0.6 0.6,-0.3 0.6,-0.2 0.6,0 0.6,0.1 0.6,0.3 0.5,0.4 0.6,-5.5 0.6,-4.7 0.6,-4.1 0.6,-3.5 0.6,-3 0.6,-2.5 0.5,-2.1 0.6,-1.7 0.6,-1.3 0.6,-1 0.6,-0.7 0.6,-0.4 0.6,-0.2 0.5,0 0.6,0.2 0.6,0.4 0.6,0.5 0.6,0.7 0.6,0.8 0.6,0.9 0.5,-4.9 0.6,-4.3 0.6,-3.6 0.6,-3 0.6,-2.5 0.6,-2 0.6,-1.6 0.5,-1.2 0.6,-0.9 0.6,-0.6 0.6,-0.2 0.6,0 0.6,0.2 0.6,0.4 0.5,0.6 0.6,0.8 0.6,0.9 0.6,1.1 0.6,1.2 0.6,1.2 0.6,-4.5 0.6,-3.9 0.5,-3.2 0.6,-2.7 0.6,-2.2 0.6,-1.7 0.6,-1.3 0.6,-0.9 0.6,-0.5 0.5,-0.3 0.6,0.1 0.6,0.3 0.6,0.5 0.6,0.7 0.6,0.9 0.6,1 0.5,1.2 0.6,1.3 0.6,1.5 0.6,1.5 0.6,-4.3 0.6,-3.7 0.6,-3 0.5,-2.4 0.6,-2 0.6,-1.4 0.6,-1.1 0.6,-0.7 0.6,-0.3 0.6,-0.1 0.5,0.3 0.6,0.5 0.6,0.7 0.6,0.9 0.6,1 0.6,1.3 0.6,1.3 0.5,1.5 0.6,1.6 0.6,1.7 0.6,-4.1 0.6,-3.5 0.6,-2.9 0.6,-2.3 0.6,-1.7 0.5,-1.4 0.6,-0.9 0.6,-0.5 0.6,-0.2 0.6,0.1 0.6,0.3 0.6,0.7 0.5,0.8 0.6,1 0.6,1.2 0.6,1.4 0.6,1.5 0.6,1.6 0.6,1.7 0.5,1.8 0.6,1.9 0.6,1.9 0.6,2 0.6,2.1 0.6,2.1 0.6,2.1 0.5,2.1 0.6,2.2 0.6,2.2 0.6,2.2 2.3,8.8 2.4,8.6 2.3,8.3 2.4,7.9 2.3,7.5 2.4,7.1 2.3,6.5 2.4,6.2 2.3,5.7 2.3,5.3 2.4,4.9 2.3,4.5 2.4,4.2 2.3,3.9 2.4,3.6 2.3,3.3 2.3,3 2.4,2.8 2.3,2.6 2.4,2.4 2.3,2.2 2.4,2 2.3,1.9 2.4,1.7 2.3,1.6 2.3,1.5 2.4,1.3 2.3,1.3 2.4,1.1 2.3,1.1 2.4,1 2.3,0.9 2.4,0.8 2.3,0.8 2.3,0.7 2.4,0.6 2.3,0.6 2.4,0.6 2.3,0.5 2.4,0.5 2.3,0.4 2.3,0.4 2.4,0.4 2.3,0.3 2.4,0.3 2.3,0.3 2.4,0.3 2.3,0.2 2.4,0.2 2.3,0.2 2.3,0.2 2.4,0.2 2.3,0.2 2.4,0.1 2.3,0.2 2.4,0.1 2.3,0.1 2.4,0.1 2.3,0.1 2.3,0.1 2.4,0.1 2.3,0.1 2.4,0 2.3,0.1 2.4,0.1 2.3,0 2.3,0.1 2.4,0 2.3,0.1 2.4,0 2.3,0.1 2.4,0 2.3,0 2.4,0.1 2.3,0 2.3,0 2.4,0 2.3,0 2.4,0.1 2.3,0 2.4,0 2.3,0 2.4,0 2.3,0 2.3,0.1 2.4,0 2.3,0 2.4,0 2.3,0 2.4,0 2.3,0 2.3,0 2.4,0 2.3,0 2.4,0 2.3,0 2.4,0 2.3,0.1 2.4,0 2.3,0 2.3,0 2.4,0" stroke="#ff6e31" stroke-width="1.6" fill="none"/>
<path d="M450.8,109.5 H457.3 V704.5 H450.8" stroke="#555" stroke-width="1.3" fill="none"/>
<path d="M457.3,710 V704.5 H819.3 V710" stroke="#555" stroke-width="1.3" fill="none"/>
<line x1="453.8" y1="677.4" x2="457.3" y2="677.4" stroke="#555" stroke-width="1.3"/>
<text x="449.8" y="680.9" text-anchor="end" font-size="10" fill="#555">0</text>
<line x1="453.8" y1="587.9" x2="457.3" y2="587.9" stroke="#555" stroke-width="1.3"/>
<text x="449.8" y="591.4" text-anchor="end" font-size="10" fill="#555">50</text>
<line x1="453.8" y1="498.4" x2="457.3" y2="498.4" stroke="#555" stroke-width="1.3"/>
<text x="449.8" y="501.9" text-anchor="end" font-size="10" fill="#555">100</text>
<line x1="453.8" y1="408.9" x2="457.3" y2="408.9" stroke="#555" stroke-width="1.3"/>
<text x="449.8" y="412.4" text-anchor="end" font-size="10" fill="#555">150</text>
<line x1="453.8" y1="319.5" x2="457.3" y2="319.5" stroke="#555" stroke-width="1.3"/>
<text x="449.8" y="323.0" text-anchor="end" font-size="10" fill="#555">200</text>
<line x1="453.8" y1="230.0" x2="457.3" y2="230.0" stroke="#555" stroke-width="1.3"/>
<text x="449.8" y="233.5" text-anchor="end" font-size="10" fill="#555">250</text>
<line x1="453.8" y1="140.5" x2="457.3" y2="140.5" stroke="#555" stroke-width="1.3"/>
<text x="449.8" y="144.0" text-anchor="end" font-size="10" fill="#555">300</text>
<line x1="473.5" y1="704.5" x2="473.5" y2="707.5" stroke="#555" stroke-width="1.3"/>
<text x="473.5" y="717" text-anchor="middle" font-size="10" fill="#555">0</text>
<line x1="532.1" y1="704.5" x2="532.1" y2="707.5" stroke="#555" stroke-width="1.3"/>
<text x="532.1" y="717" text-anchor="middle" font-size="10" fill="#555">5</text>
<line x1="590.7" y1="704.5" x2="590.7" y2="707.5" stroke="#555" stroke-width="1.3"/>
<text x="590.7" y="717" text-anchor="middle" font-size="10" fill="#555">10</text>
<line x1="649.3" y1="704.5" x2="649.3" y2="707.5" stroke="#555" stroke-width="1.3"/>
<text x="649.3" y="717" text-anchor="middle" font-size="10" fill="#555">15</text>
<line x1="707.9" y1="704.5" x2="707.9" y2="707.5" stroke="#555" stroke-width="1.3"/>
<text x="707.9" y="717" text-anchor="middle" font-size="10" fill="#555">20</text>
<line x1="766.5" y1="704.5" x2="766.5" y2="707.5" stroke="#555" stroke-width="1.3"/>
<text x="766.5" y="717" text-anchor="middle" font-size="10" fill="#555">25</text>
<text x="418" y="734" font-size="14" fill="#222">time</text>
<text x="15" y="426.5" font-size="12" fill="#222" transform="rotate(-90 15 426.5)" text-anchor="middle">L</text>
</svg>
<div class="abs" id="topbar"></div>
<div class="abs" style="left:173px;top:0;width:57px;height:35px;background:#ff6e31"></div>
<div class="t tab" style="left:24px;top:8px;">Simulation</div>
<div class="t tab" style="left:116px;top:8.5px;font-size:13.5px">Results</div>
<div class="t tab" style="left:185.5px;top:8px;font-size:14px">Plots</div>
<div class="abs" id="frame"></div>
<div class="abs" id="toolbar"></div>

<!-- toolbar icons -->
<svg class="abs" style="left:17px;top:45px" width="110" height="14" viewBox="0 0 110 14">
<path d="M0.6 2 V11.8 H13 V10.2 H2.4 V2Z" fill="#fff"/><rect x="3.6" y="7" width="1.5" height="2.6" fill="#fff"/><rect x="5.6" y="4.6" width="1.5" height="5" fill="#fff"/><rect x="7.8" y="5.8" width="1.5" height="3.8" fill="#fff"/><rect x="9.8" y="3.6" width="1.5" height="6" fill="#fff"/><rect x="11.6" y="2.4" width="1.4" height="7.2" fill="#fff"/><path d="M18.3 5.2 H24 L21.15 8Z" fill="#fff"/>
<rect x="39" y="1.2" width="3.6" height="3.2" fill="#fff"/><rect x="43.6" y="1.2" width="3.6" height="3.2" fill="#fff"/><rect x="48.2" y="1.2" width="3.6" height="3.2" fill="#fff"/>
<rect x="39" y="5.4" width="3.6" height="3.2" fill="#fff"/><rect x="43.6" y="5.4" width="3.6" height="3.2" fill="#fff"/><rect x="48.2" y="5.4" width="3.6" height="3.2" fill="#fff"/>
<rect x="39" y="9.6" width="3.6" height="3.2" fill="#fff"/><rect x="43.6" y="9.6" width="3.6" height="3.2" fill="#fff"/><rect x="48.2" y="9.6" width="3.6" height="3.2" fill="#fff"/>
<path d="M57.3 5.2 H63 L60.15 8Z" fill="#fff"/>
<path d="M83.2 0.5 H85.6 V5.2 H88.4 L84.4 9.2 L80.4 5.2 H83.2Z" fill="#fff"/><path d="M77.8 8.6 H81.2 L84.4 11 L87.6 8.6 H90.2 V12.8 H77.8Z" fill="#fff"/><path d="M95 5.2 H100.7 L97.85 8Z" fill="#fff"/>
</svg>
<svg class="abs" style="left:824px;top:46.5px" width="12" height="11"><rect x="0" y="0.5" width="11.5" height="1.8" fill="#fff"/><rect x="0" y="4.5" width="11.5" height="1.8" fill="#fff"/><rect x="0" y="8.5" width="11.5" height="1.8" fill="#fff"/></svg>
<svg class="abs" style="left:1117px;top:6px" width="22" height="20" viewBox="0 0 22 20"><ellipse cx="10.6" cy="8.3" rx="9.5" ry="8.3" fill="#9b9b9b"/><path d="M3.2 12.5 L0.8 18.4 L8.5 15.6Z" fill="#9b9b9b"/><rect x="5" y="6.8" width="11" height="1.6" fill="#fff"/><rect x="5" y="10.2" width="8" height="1.6" fill="#f0f0f0"/></svg>
<!-- title green box -->
<div class="abs" style="left:170.5px;top:72.3px;width:523px;height:37px;border:4.5px solid #92d43e;border-radius:7px;background:#fff;box-shadow:inset 0 0 7px rgba(0,0,0,0.4)"></div>
<div class="t" style="left:192px;top:84px;font-size:13px;color:#333">#Patient:HV</div>
<div class="t" style="left:604px;top:84px;font-size:13px;color:#333">#Patient:RA</div>
<div class="abs" style="left:858px;top:35px;width:291px;height:708px;background:#eee;border-left:1px solid #d8dde5"></div>
<!-- header -->
<div class="abs" style="left:859px;top:35px;width:290px;height:31px;background:#ff6e31"></div>
<div class="abs" style="left:859px;top:66px;width:290px;height:3px;background:#e9977a"></div>
<div class="t" style="left:965px;top:45px;font-size:10.5px;font-weight:bold;color:#fff">COVARIATES</div>
<!-- trash -->
<svg class="abs" style="left:1123px;top:40px" width="16" height="18" viewBox="0 0 16 18"><rect x="0.5" y="2" width="14.5" height="2.2" fill="#fff"/><rect x="5" y="0.3" width="5.5" height="2" rx="0.8" fill="#fff"/><path d="M1.8 4.5 H13.7 V16.3 Q13.7 17 13 17 H2.5 Q1.8 17 1.8 16.3Z" fill="#fff"/><rect x="4.2" y="6.5" width="1.3" height="8.5" fill="#ffc890"/><rect x="7.1" y="6.5" width="1.3" height="8.5" fill="#ffc890"/><rect x="10" y="6.5" width="1.3" height="8.5" fill="#ffc890"/></svg>
<!-- weight row -->
<div class="abs" style="left:859px;top:69px;width:290px;height:30px;background:#efefef"></div>
<div class="abs" style="left:859px;top:99px;width:290px;height:6px;background:#e0e0e0"></div>
<div class="t" style="left:872px;top:78px;font-size:11.5px;font-weight:bold;color:#222">Weight</div>
<div class="t" style="left:1027px;top:77px;font-size:14px;font-weight:bold;color:#f33">&#x2715;</div>
<div class="t" style="left:1056px;top:78.5px;font-size:11px;font-weight:bold;color:#ff6e31">Rescale</div>
<svg class="abs" style="left:1101px;top:81px" width="6" height="4"><path d="M0 0H6L3 3.5Z" fill="#ff6e31"/></svg>
<svg class="abs" style="left:1125px;top:78px" width="11" height="11"><rect x="4.3" y="0" width="2.4" height="11" fill="#ff6e31"/><rect x="0" y="4.3" width="11" height="2.4" fill="#ff6e31"/></svg>
<!-- slider area white -->
<div class="abs" style="left:859px;top:105px;width:290px;height:175px;background:#fff"></div>
<div class="abs" style="left:973px;top:112px;width:54px;height:20px;background:#efefef;border-radius:3px"></div>
<div class="t" style="left:975px;top:118px;font-size:10px;color:#444">73.7713</div>
<svg class="abs" style="left:1014px;top:118px" width="9" height="8"><path d="M1 0.8 L8 7.2 M8 0.8 L1 7.2" stroke="#f5593a" stroke-width="2.1"/></svg>
<div class="abs" style="left:879px;top:138px;width:252px;height:2px;background:#ddd"></div>
<div class="abs" style="left:994px;top:133px;width:12px;height:12px;border-radius:6px;background:#ff6e31"></div>
<!--TICKS--><div class="abs" style="left:879.0px;top:145px;width:2px;height:10px;background:#999"></div><div class="abs" style="left:941.6px;top:145px;width:2px;height:10px;background:#999"></div><div class="abs" style="left:1004.2px;top:145px;width:2px;height:10px;background:#999"></div><div class="abs" style="left:1066.8px;top:145px;width:2px;height:10px;background:#999"></div><div class="abs" style="left:1129.4px;top:145px;width:2px;height:10px;background:#999"></div><div class="abs" style="left:899.9px;top:145px;width:2px;height:5px;background:#c8c8c8"></div><div class="abs" style="left:920.7px;top:145px;width:2px;height:5px;background:#c8c8c8"></div><div class="abs" style="left:962.5px;top:145px;width:2px;height:5px;background:#c8c8c8"></div><div class="abs" style="left:983.4px;top:145px;width:2px;height:5px;background:#c8c8c8"></div><div class="abs" style="left:1035.0px;top:145px;width:2px;height:5px;background:#c8c8c8"></div><div class="abs" style="left:1087.7px;top:145px;width:2px;height:5px;background:#c8c8c8"></div><div class="abs" style="left:1108.5px;top:145px;width:2px;height:5px;background:#c8c8c8"></div><svg class="abs" style="left:1111px;top:177.5px" width="17" height="12" viewBox="0 0 17 12"><path d="M3.2 3.5 L0.3 6 L3.2 8.5Z" fill="#ff6e31"/><path d="M11 0.6 C14.2 0.6 16.4 2.8 16.4 5.4 C16.4 7.4 14.6 7.6 13.4 7.4 C12.2 7.2 11.4 8 12 9.2 C12.6 10.6 11.8 11.4 10.6 11.4 C7.8 11.4 5.6 9 5.6 6 C5.6 3 8 0.6 11 0.6Z" fill="#ff6e31"/><circle cx="8.2" cy="6.2" r="0.75" fill="#fff"/><circle cx="9.4" cy="3.4" r="0.75" fill="#fff"/><circle cx="12.4" cy="2.8" r="0.75" fill="#fff"/><circle cx="14.4" cy="5" r="0.7" fill="#fff"/></svg><!--/TICKS-->
<div class="t" style="left:862px;top:162px;font-size:10px;color:#aaa">42.6717</div>
<div class="t" style="left:925px;top:162px;font-size:10px;color:#aaa">58.8318</div>
<div class="t" style="left:990px;top:162px;font-size:10px;color:#aaa">74.992</div>
<div class="t" style="left:1050px;top:162px;font-size:10px;color:#aaa">91.1521</div>
<div class="t" style="left:1109px;top:162px;font-size:10px;color:#aaa">107.3122</div>
<div class="t" style="left:909px;top:178px;font-size:11px;font-weight:bold;color:#222">Start</div>
<div class="t" style="left:986px;top:178px;font-size:11px;font-weight:bold;color:#222">End</div>
<div class="t" style="left:1058px;top:178px;font-size:11px;font-weight:bold;color:#222">Count</div>
<!-- row1 -->
<div class="abs" style="left:879px;top:196px;width:252px;height:24px;background:#f2f2f2"></div>
<div class="t" style="left:908px;top:202px;font-size:11px;color:#222">42.67</div>
<div class="t" style="left:964px;top:204px;font-size:11px;color:#999">73.77</div>
<div class="abs" style="left:963px;top:218px;width:67px;height:1px;background:#ccc"></div>
<div class="t" style="left:1068px;top:202px;font-size:11px;color:#222">21</div>
<div class="abs" style="left:1107px;top:198px;width:24px;height:20px;background:#ff6e31"></div>
<!-- row2 -->
<div class="t" style="left:887px;top:228px;font-size:11px;color:#999">73.77</div>
<div class="abs" style="left:887px;top:242px;width:68px;height:1px;background:#ccc"></div>
<div class="t" style="left:982px;top:226px;font-size:11px;color:#222">107.31</div>
<div class="t" style="left:1068px;top:226px;font-size:11px;color:#222">21</div>
<div class="abs" style="left:1107px;top:222px;width:24px;height:20px;background:#0ac5e5"></div>
<!-- patient row -->
<div class="abs" style="left:859px;top:280px;width:290px;height:30px;background:#efefef"></div>
<div class="abs" style="left:859px;top:310px;width:290px;height:4px;background:#e0e0e0"></div>
<div class="t" style="left:872px;top:289px;font-size:11px;font-weight:bold;color:#222">Patient</div>
<div class="abs" style="left:859px;top:314px;width:290px;height:32px;background:#efefef"></div>
<div class="t" style="left:872px;top:324px;font-size:11.5px;font-style:italic;color:#222">ID</div>
<!--ERASER1--><svg class="abs" style="left:1110px;top:317px" width="24" height="24" viewBox="0 0 24 24"><circle cx="12" cy="12" r="10.3" stroke="#d4d4d4" stroke-width="3.2" fill="none"/><g transform="rotate(-45 12 12)"><path d="M4.6 12 L8.4 9.6 H15.6 V14.4 H8.4Z" fill="#555"/><path d="M16.6 9.6 H19.4 Q20.4 9.6 20.4 10.6 V13.4 Q20.4 14.4 19.4 14.4 H16.6Z" fill="#555"/></g><path d="M5.2 5.2 L18.8 18.8" stroke="#d4d4d4" stroke-width="2.8"/></svg><!--/ERASER1-->
<!-- blue box -->
<div class="abs" style="left:857px;top:344px;width:287px;height:161px;border:4px solid #00aeef;border-radius:6px;background:#fff"></div>
<div class="abs" style="left:861px;top:348px;width:279px;height:41px;background:#f7f7f7"></div>
<div class="abs" style="left:908px;top:348px;width:53px;height:41px;background:#ff6e31"></div>
<div class="t" style="left:869px;top:362px;font-size:13px;font-weight:bold;color:#ff6e31">Split</div>
<div class="t" style="left:918px;top:362px;font-size:13px;font-weight:bold;color:#fff">Color</div>
<div class="t" style="left:971px;top:362px;font-size:13px;font-weight:bold;color:#ff6e31">Filter</div>
<div class="t" style="left:1025px;top:362px;font-size:13px;font-weight:bold;color:#ff6e31">Selection</div>
<!--CB1--><svg class="abs" style="left:879px;top:409px" width="20" height="20"><rect x="0" y="0" width="20" height="20" rx="2.5" fill="#ff6e31"/><path d="M4.2 10.3 L8.2 14.2 L15.8 6.6" stroke="#fff" stroke-width="3.2" fill="none" stroke-linecap="square"/></svg><div class="t" style="left:911px;top:413px;font-size:13px;color:#333">Weight</div><div class="abs" style="left:879px;top:433px;width:20px;height:20px;border:2px solid #cdd2d8;border-radius:2.5px;background:#fff"></div><div class="t" style="left:911px;top:437px;font-size:13px;color:#333">Patient</div><div class="abs" style="left:879px;top:457px;width:20px;height:20px;border:2px solid #cdd2d8;border-radius:2.5px;background:#f2f2f2"></div><div class="t" style="left:911px;top:461px;font-size:13px;color:#999">ID</div><!--/CB1-->
<div class="abs" style="left:861px;top:348px;width:279px;height:153px;border-radius:3px;box-shadow:inset 0 0 9px rgba(0,0,0,0.38)"></div>
<!-- stratify -->
<div class="abs" style="left:858px;top:707px;width:291px;height:36px;background:#cfd4dc"></div>
<div class="abs" style="left:858px;top:707px;width:98px;height:36px;background:#999"></div>
<div class="t" style="left:880px;top:719px;font-size:12px;color:#fff">STRATIFY</div>
<div class="t" style="left:975px;top:719px;font-size:12px;color:#555">SETTINGS</div>
<div class="t" style="left:1069px;top:719px;font-size:12px;color:#555">PREFERE...</div>

<div class="abs" style="left:1155px;top:34px;width:290px;height:706px;background:#eee"></div>
<div class="abs" style="left:1155px;top:34px;width:290px;height:29px;background:#ff6e31"></div>
<div class="abs" style="left:1155px;top:63px;width:290px;height:4px;background:#ff5a14"></div>
<div class="t" style="left:1259.5px;top:43px;font-size:10.5px;font-weight:bold;color:#fff">COVARIATES</div>
<svg class="abs" style="left:1418px;top:39px" width="16" height="17" viewBox="0 0 16 18"><rect x="0.5" y="2" width="14.5" height="2.2" fill="#fff"/><rect x="5" y="0.3" width="5.5" height="2" rx="0.8" fill="#fff"/><path d="M1.8 4.5 H13.7 V16.3 Q13.7 17 13 17 H2.5 Q1.8 17 1.8 16.3Z" fill="#fff"/><rect x="4.2" y="6.5" width="1.3" height="8.5" fill="#ffc890"/><rect x="7.1" y="6.5" width="1.3" height="8.5" fill="#ffc890"/><rect x="10" y="6.5" width="1.3" height="8.5" fill="#ffc890"/></svg>
<div class="abs" style="left:1155px;top:67px;width:290px;height:30px;background:#efefef"></div>
<div class="abs" style="left:1155px;top:97px;width:290px;height:4px;background:#e0e0e0"></div>
<div class="t" style="left:1167px;top:76px;font-size:11.5px;font-weight:bold;color:#222">Weight</div>
<div class="abs" style="left:1155px;top:101px;width:290px;height:30px;background:#efefef"></div>
<div class="abs" style="left:1155px;top:131px;width:290px;height:4px;background:#e0e0e0"></div>
<div class="t" style="left:1167px;top:110px;font-size:11.5px;font-weight:bold;color:#222">Patient</div>
<div class="t" style="left:1400px;top:111px;font-size:10px;font-weight:bold;color:#ff4b4b">RESET</div>
<div class="abs" style="left:1155px;top:135px;width:290px;height:145px;background:#fff"></div>
<!--PAL2--><svg class="abs" style="left:1407px;top:161px" width="17" height="12" viewBox="0 0 17 12"><path d="M3.2 3.5 L0.3 6 L3.2 8.5Z" fill="#ff6e31"/><path d="M11 0.6 C14.2 0.6 16.4 2.8 16.4 5.4 C16.4 7.4 14.6 7.6 13.4 7.4 C12.2 7.2 11.4 8 12 9.2 C12.6 10.6 11.8 11.4 10.6 11.4 C7.8 11.4 5.6 9 5.6 6 C5.6 3 8 0.6 11 0.6Z" fill="#ff6e31"/><circle cx="8.2" cy="6.2" r="0.75" fill="#fff"/><circle cx="9.4" cy="3.4" r="0.75" fill="#fff"/><circle cx="12.4" cy="2.8" r="0.75" fill="#fff"/><circle cx="14.4" cy="5" r="0.7" fill="#fff"/></svg><!--/PAL2-->
<!-- boxes -->
<div class="abs" style="left:1174px;top:177px;width:58px;height:75px;border:2px dashed #dcdcdc;background:#f4f4f4"></div>
<div class="abs" style="left:1176px;top:179px;width:54px;height:20px;background:#4682b4"></div>
<div class="t" style="left:1176px;top:184px;width:54px;text-align:center;font-size:12px;font-style:italic;color:#fff">8</div>
<div class="abs" style="left:1186px;top:209px;width:34px;height:31px;border-radius:3px;background:#555;border-bottom:3px solid #444"></div>
<div class="t" style="left:1186px;top:218px;width:34px;text-align:center;font-size:11px;font-weight:bold;color:#fff">HV</div>
<div class="abs" style="left:1240px;top:177px;width:58px;height:75px;border:2px dashed #dcdcdc;background:#f4f4f4"></div>
<div class="abs" style="left:1242px;top:179px;width:54px;height:20px;background:#4a4a4a"></div>
<div class="t" style="left:1242px;top:184px;width:54px;text-align:center;font-size:12px;font-style:italic;color:#fff">34</div>
<div class="abs" style="left:1252px;top:209px;width:33px;height:31px;border-radius:3px;background:#555;border-bottom:3px solid #444"></div>
<div class="t" style="left:1252px;top:218px;width:33px;text-align:center;font-size:11px;font-weight:bold;color:#fff">RA</div>
<!-- ID row -->
<div class="abs" style="left:1155px;top:280px;width:290px;height:32px;background:#efefef"></div>
<div class="t" style="left:1167px;top:290px;font-size:11.5px;font-style:italic;color:#222">ID</div>
<!--ERASER2--><svg class="abs" style="left:1406px;top:283px" width="24" height="24" viewBox="0 0 24 24"><circle cx="12" cy="12" r="10.3" stroke="#d4d4d4" stroke-width="3.2" fill="none"/><g transform="rotate(-45 12 12)"><path d="M4.6 12 L8.4 9.6 H15.6 V14.4 H8.4Z" fill="#555"/><path d="M16.6 9.6 H19.4 Q20.4 9.6 20.4 10.6 V13.4 Q20.4 14.4 19.4 14.4 H16.6Z" fill="#555"/></g><path d="M5.2 5.2 L18.8 18.8" stroke="#d4d4d4" stroke-width="2.8"/></svg><!--/ERASER2-->
<!-- green box -->
<div class="abs" style="left:1153px;top:310px;width:284px;height:131px;border:4.5px solid #92d43e;border-radius:6px;background:#fff"></div>
<div class="abs" style="left:1157.5px;top:314.5px;width:275px;height:40px;background:#f7f7f7"></div>
<div class="abs" style="left:1157.5px;top:314.5px;width:45.5px;height:40px;background:#ff6e31"></div>
<div class="t" style="left:1164px;top:328px;font-size:13px;font-weight:bold;color:#fff">Split</div>
<div class="t" style="left:1213px;top:328px;font-size:13px;font-weight:bold;color:#ff6e31">Color</div>
<div class="t" style="left:1266px;top:328px;font-size:13px;font-weight:bold;color:#ff6e31">Filter</div>
<div class="t" style="left:1320px;top:328px;font-size:13px;font-weight:bold;color:#ff6e31">Selection</div>
<!--CB2--><div class="abs" style="left:1174px;top:375px;width:20px;height:20px;border:2px solid #cdd2d8;border-radius:2.5px;background:#fff"></div><div class="t" style="left:1206px;top:379px;font-size:13px;color:#333">Weight</div><svg class="abs" style="left:1174px;top:399px" width="20" height="20"><rect x="0" y="0" width="20" height="20" rx="2.5" fill="#ff6e31"/><path d="M4.2 10.3 L8.2 14.2 L15.8 6.6" stroke="#fff" stroke-width="3.2" fill="none" stroke-linecap="square"/></svg><div class="t" style="left:1206px;top:403px;font-size:13px;color:#333">Patient</div><!--/CB2-->
<div class="abs" style="left:1157.5px;top:314.5px;width:275px;height:122px;border-radius:3px;box-shadow:inset 0 0 9px rgba(0,0,0,0.38)"></div>
<div class="abs" style="left:1155px;top:705px;width:290px;height:35px;background:#cfd4dc"></div>
<div class="abs" style="left:1155px;top:705px;width:97px;height:35px;background:#999"></div>
<div class="t" style="left:1175px;top:717px;font-size:12px;color:#fff">STRATIFY</div>
<div class="t" style="left:1271px;top:717px;font-size:12px;color:#555">SETTINGS</div>
<div class="t" style="left:1365px;top:717px;font-size:12px;color:#555">PREFERE...</div>

</body></html>
